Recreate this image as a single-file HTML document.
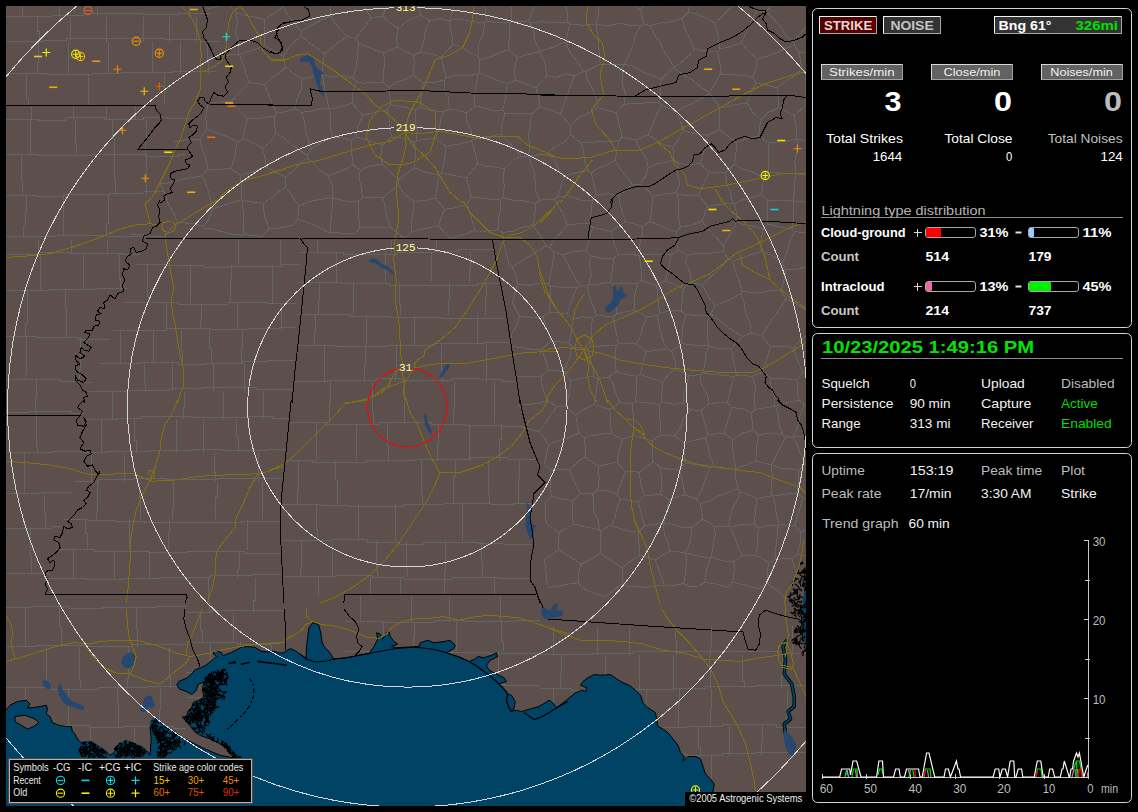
<!DOCTYPE html>
<html><head><meta charset="utf-8"><title>Lightning</title>
<style>html,body{margin:0;padding:0;background:#000;overflow:hidden}svg{display:block;font-family:"Liberation Sans", sans-serif}text{white-space:pre}</style></head><body>
<svg width="1138" height="812" viewBox="0 0 1138 812">
<rect width="1138" height="812" fill="#000"/>
<defs><clipPath id="mc"><rect x="6" y="6" width="800" height="800"/></clipPath></defs>
<g clip-path="url(#mc)">
<rect x="6" y="6" width="800" height="800" fill="#5d504c"/>
<path d="M621.9 -9.6 L625.2 -16.2 L631.5 -26.9 L637.1 -36.2 L640.5 -43.6 L646.3 -51.5 L652.7 -60.4 L657.1 -67.8 L660.7 -76.5 L665.8 -84.1 L671.6 -93.5 M621.9 -9.6 L628.6 -3.0 L633.2 3.7 L640.7 10.1 M640.7 10.1 L645.5 2.5 L651.6 -7.1 L658.0 -13.9 L662.1 -21.7 L667.8 -31.3 L673.5 -39.2 M671.6 -93.5 L672.1 -85.1 L671.9 -75.5 L674.0 -65.0 L672.7 -55.9 L673.2 -47.9 L673.5 -39.2 M358.3 201.1 L358.8 215.4 L359.4 228.0 M358.3 201.1 L362.4 197.9 M359.4 228.0 L369.2 227.5 L381.2 227.9 L390.7 227.4 M390.7 227.4 L386.9 217.8 L385.3 206.9 L382.9 197.8 M362.4 197.9 L373.1 197.5 L382.9 197.8 M682.1 18.5 L684.3 27.7 L690.8 40.4 L694.1 49.5 M682.1 18.5 L671.8 21.6 L660.7 23.0 L650.5 25.7 M650.5 25.7 L654.5 35.0 L660.1 42.2 L664.1 51.3 L669.3 58.4 L673.7 67.5 M694.1 49.5 L688.8 55.8 L680.5 62.8 L673.7 67.5 M717.7 52.1 L720.0 49.0 M717.7 52.1 L706.8 50.7 L694.1 49.5 M720.0 49.0 L717.8 35.3 L714.6 23.4 M688.2 12.4 L696.4 14.1 L706.9 18.1 L714.6 23.4 M688.2 12.4 L682.1 18.5 M640.7 10.1 L643.4 23.7 M673.5 -39.2 L678.6 -30.9 L681.5 -21.3 L687.0 -11.5 L691.2 -3.0 M643.4 23.7 L650.5 25.7 M691.2 -3.0 L688.2 12.4 M567.9 22.1 L567.8 13.4 L564.8 3.4 L563.6 -6.5 M567.9 22.1 L557.7 23.0 L548.2 22.3 L540.7 21.7 L530.5 23.0 M563.6 -6.5 L553.2 -9.0 L543.4 -11.8 M543.4 -11.8 L538.4 -2.5 L536.2 3.4 L532.1 12.4 L528.4 21.4 M530.5 23.0 L528.4 21.4 M837.8 83.8 L826.6 80.2 L815.9 77.4 L805.8 72.9 M837.8 83.8 L840.3 74.2 L844.0 63.6 L847.2 52.4 M847.2 52.4 L840.8 45.1 M840.8 45.1 L829.9 46.6 L819.0 49.5 L810.5 52.8 L799.2 52.8 M799.2 52.8 L801.9 69.0 M805.8 72.9 L801.9 69.0 M839.5 85.8 L837.8 83.8 M843.0 23.1 L843.0 34.3 L840.8 45.1 M839.5 85.8 L838.9 99.4 M805.8 72.9 L805.5 84.2 L805.6 96.2 L805.5 105.8 M838.9 99.4 L833.6 105.8 L826.5 113.6 M826.5 113.6 L815.4 111.0 L805.5 105.8 M867.0 124.6 L861.0 117.9 L852.7 111.6 L844.2 106.5 L838.9 99.4 M707.4 206.4 L698.6 195.2 M707.4 206.4 L719.0 204.3 L732.9 203.2 M698.6 195.2 L703.4 184.3 L709.5 172.2 M732.9 203.2 L730.4 193.0 L726.5 182.6 L725.6 172.5 M709.5 172.2 L725.6 172.5 M362.4 197.9 L361.4 187.0 L358.9 178.0 L360.3 170.2 M382.9 197.8 L390.8 191.3 L398.2 184.9 M399.1 179.5 L398.2 184.9 M399.1 179.5 L390.5 172.2 L382.4 164.3 M360.3 170.2 L371.9 165.4 L382.4 164.3 M358.3 201.1 L346.0 201.1 L332.5 197.8 M355.2 233.9 L359.4 228.0 M355.2 233.9 L341.8 233.2 L330.5 232.2 M330.5 232.2 L331.0 221.3 L332.0 209.9 L332.5 197.8 M164.2 237.1 L152.6 236.2 L141.1 234.6 L130.5 234.3 M207.5 8.7 L220.3 5.9 L228.6 4.6 M228.6 4.6 L235.8 -9.0 M821.3 465.6 L823.6 476.2 L824.3 486.0 L825.3 495.6 M821.3 465.6 L834.1 467.1 L846.9 465.6 M846.9 465.6 L847.1 465.8 M847.1 465.8 L847.3 476.3 L847.4 487.0 L845.9 496.4 M845.9 496.4 L836.0 496.3 L825.3 495.6 M842.8 526.9 L832.6 535.4 M832.6 535.4 L835.1 546.4 L834.4 556.5 M846.6 497.0 L845.3 506.2 L843.8 516.0 L842.8 526.9 M846.6 497.0 L845.9 496.4 M818.5 499.5 L819.7 509.4 L819.0 518.7 L822.0 528.3 M818.5 499.5 L825.3 495.6 M822.0 528.3 L832.6 535.4 M908.4 450.0 L899.6 452.3 L891.0 454.3 L883.1 456.7 L873.6 459.0 L863.7 460.5 L854.9 463.7 L847.1 465.8 M908.4 450.0 L898.4 446.4 L889.8 445.1 L878.6 443.5 L870.8 439.2 L862.3 436.7 L851.9 434.0 M846.9 465.6 L842.7 454.9 L839.6 440.2 M851.9 434.0 L839.6 440.2 M763.0 372.0 L770.6 378.2 M763.0 372.0 L752.4 376.3 M770.6 378.2 L771.1 387.4 L774.2 395.8 L774.9 406.1 M774.9 406.1 L765.0 408.1 L755.3 409.4 M752.4 376.3 L755.5 386.6 L754.3 399.0 L755.3 409.4 M611.2 433.4 L622.4 439.1 M611.2 433.4 L610.6 420.3 L609.8 409.4 M609.8 409.4 L620.0 402.7 M622.4 439.1 L633.9 435.6 M633.9 435.6 L633.7 425.1 L633.2 415.4 L632.2 403.8 M632.2 403.8 L620.0 402.7 M383.7 53.1 L384.5 63.2 L383.7 71.6 L383.3 82.3 M383.7 53.1 L371.2 48.4 L359.0 43.2 M383.3 82.3 L373.7 82.2 L364.2 83.2 L355.7 81.5 M355.7 81.5 L352.6 77.9 M352.6 77.9 L356.7 66.0 L357.3 54.6 L359.0 43.2 M483.4 -12.7 L497.1 -12.8 L508.5 -13.7 M508.5 -13.7 L517.6 -22.5 L526.6 -30.9 M481.0 -10.3 L483.4 -12.7 M481.0 -10.3 L483.1 -0.5 L485.5 10.4 L486.8 21.6 M486.8 21.6 L498.4 22.4 L509.1 23.0 M511.5 21.4 L509.1 23.0 M511.5 21.4 L511.5 9.7 L510.4 -2.8 L508.5 -13.7 M481.0 -10.3 L469.0 -8.8 L455.9 -6.9 M455.9 -6.9 L450.2 -14.5 L444.9 -24.0 L438.4 -31.1 L432.2 -37.4 M543.4 -11.8 L536.1 -23.1 L526.6 -30.9 M528.4 21.4 L511.5 21.4 M573.0 -13.3 L563.6 -6.5 M600.5 -14.5 L590.4 -15.6 L583.6 -14.9 L573.0 -13.3 M530.5 23.0 L533.8 31.9 L535.3 41.4 L540.1 51.1 M540.1 51.1 L539.9 51.4 M509.1 23.0 L509.4 36.3 L508.4 49.8 M539.9 51.4 L529.3 54.1 L517.0 57.5 M508.4 49.8 L517.0 57.5 M505.0 113.4 L518.2 113.3 L531.4 114.0 M505.0 113.4 L502.5 110.2 M502.5 110.2 L504.5 103.1 L506.2 92.7 L507.6 83.6 M535.7 87.9 L524.9 83.3 L515.3 80.0 M535.7 87.9 L538.9 96.6 L539.5 107.3 M507.6 83.6 L515.3 80.0 M539.5 107.3 L531.4 114.0 M474.7 106.3 L483.1 107.5 L492.8 110.7 L502.5 110.2 M474.7 106.3 L466.9 113.1 M466.9 113.1 L466.6 122.3 L471.1 129.9 L472.2 139.8 M501.1 133.9 L490.9 136.2 L483.3 137.0 L472.2 139.8 M501.1 133.9 L501.6 124.5 L505.0 113.4 M547.0 75.6 L544.9 63.2 L539.9 51.4 M547.0 75.6 L535.7 87.9 M517.0 57.5 L514.2 70.1 L515.3 80.0 M574.2 76.0 L570.5 86.6 L567.2 94.8 L563.4 106.0 L560.4 114.2 M574.2 76.0 L566.4 73.9 L555.2 77.3 L547.0 75.6 M560.4 114.2 L549.6 109.5 L539.5 107.3 M844.1 139.5 L835.1 138.5 L826.2 137.7 M844.1 139.5 L848.2 149.3 L852.1 159.6 L856.5 170.2 M824.9 170.9 L834.5 171.3 L843.1 173.1 L852.7 174.4 M824.9 170.9 L825.4 161.0 L823.5 150.8 L822.9 140.0 M822.9 140.0 L826.2 137.7 M856.5 170.2 L852.7 174.4 M867.0 124.6 L859.7 130.5 L852.2 136.1 L844.1 139.5 M826.5 113.6 L827.5 125.6 L826.2 137.7 M797.4 139.6 L809.8 140.6 L822.9 140.0 M797.4 139.6 L797.3 150.9 L794.9 160.7 L795.6 173.7 M795.6 173.7 L808.0 175.4 L819.8 175.8 M819.8 175.8 L824.9 170.9 M797.4 139.6 L797.0 139.3 M797.0 139.3 L796.1 126.3 L793.9 115.6 M805.5 105.8 L793.9 115.6 M777.2 87.9 L767.5 85.0 L755.9 83.1 M777.2 87.9 L778.5 98.0 L779.1 107.3 M755.9 83.1 L750.8 92.6 L747.2 103.2 M779.1 107.3 L768.1 112.6 L760.7 119.6 M760.7 119.6 L752.3 111.8 L747.2 103.2 M801.9 69.0 L793.7 76.2 L785.8 81.1 L777.2 87.9 M793.9 115.6 L779.1 107.3 M621.9 -9.6 L611.7 -12.2 L600.9 -14.1 M600.5 -14.5 L600.9 -14.1 M691.2 -3.0 L700.7 -4.4 L708.2 -6.4 L718.1 -8.4 L727.8 -8.4 L735.9 -11.6 M714.6 23.4 L723.4 15.3 L730.7 7.6 L741.8 -0.1 M741.8 -0.1 L735.9 -11.6 M624.1 64.4 L623.1 65.0 M624.1 64.4 L633.0 66.2 L642.9 72.3 L651.2 75.1 L661.1 79.2 M623.1 65.0 L622.5 75.5 L622.3 84.4 L625.7 94.5 L624.3 104.2 M624.3 104.2 L636.4 103.4 L646.6 102.9 L659.4 102.3 M659.4 102.3 L660.6 89.8 L661.1 79.2 M643.4 23.7 L640.8 25.8 M624.1 64.4 L628.6 55.9 L633.4 43.7 L635.8 34.0 L640.8 25.8 M673.7 67.5 L673.6 67.6 M673.6 67.6 L661.1 79.2 M717.7 52.1 L720.0 63.5 L720.4 73.9 M720.4 73.9 L715.6 82.4 L709.5 92.5 M673.6 67.6 L681.5 73.9 L691.6 79.3 L700.6 86.9 L709.5 92.5 M752.6 77.3 L755.9 83.1 M752.6 77.3 L742.1 75.2 L729.2 74.8 L720.4 73.9 M720.0 108.0 L709.5 93.4 M720.0 108.0 L729.2 106.2 L737.7 104.1 L747.2 103.2 M709.5 92.5 L709.5 93.4 M736.6 142.7 L735.9 153.6 L734.0 164.5 M736.6 142.7 L747.8 138.4 L758.8 135.8 M734.0 164.5 L743.2 169.0 L752.7 172.1 L763.5 177.6 M768.8 142.6 L758.8 135.8 M768.8 142.6 L768.5 153.7 L768.9 164.0 L768.8 172.7 M768.8 172.7 L763.5 177.6 M720.0 108.0 L719.7 118.4 L719.6 129.5 M719.6 129.5 L726.9 135.6 L736.6 142.7 M760.7 119.6 L758.8 135.8 M797.0 139.3 L788.8 140.7 L778.8 142.1 L768.8 142.6 M795.6 173.7 L795.4 173.9 M795.4 173.9 L782.1 173.1 L768.8 172.7 M709.5 172.2 L700.0 163.8 M719.6 129.5 L708.0 135.3 M725.6 172.5 L734.0 164.5 M708.0 135.3 L705.4 145.4 L703.1 154.7 L700.0 163.8 M683.3 288.8 L674.3 284.2 L665.1 281.1 M683.3 288.8 L682.2 299.2 L681.6 311.2 M681.6 311.2 L671.7 310.3 L660.0 313.2 M660.0 313.2 L658.7 306.0 L657.5 293.5 L656.6 285.2 M656.6 285.2 L665.1 281.1 M698.6 195.2 L688.1 195.8 L677.6 194.1 M700.0 163.8 L689.1 164.3 L678.4 163.7 M678.4 163.7 L677.7 173.1 L679.7 183.2 L676.0 192.8 M677.6 194.1 L676.0 192.8 M387.0 109.9 L389.6 118.6 L389.8 129.7 L391.9 137.2 M387.0 109.9 L375.8 112.3 L362.9 115.3 M362.9 115.3 L357.9 126.3 L356.3 137.1 M356.3 137.1 L365.5 139.7 L372.5 141.7 L382.3 145.0 M382.3 145.0 L391.9 137.2 M388.8 87.3 L383.3 82.3 M388.8 87.3 L390.8 104.8 M352.3 103.5 L362.9 115.3 M352.3 103.5 L352.9 92.7 L355.7 81.5 M390.8 104.8 L387.0 109.9 M242.0 235.2 L244.2 234.0 M242.0 235.2 L233.3 234.4 L222.4 231.9 L214.2 229.4 L204.2 228.1 M244.2 234.0 L243.5 224.7 L243.2 212.5 L242.4 200.5 M212.3 209.0 L221.7 206.0 L230.4 202.9 L241.7 199.9 M212.3 209.0 L208.7 219.5 L203.0 226.3 M241.7 199.9 L242.4 200.5 M204.2 228.1 L203.0 226.3 M262.2 236.1 L252.5 235.9 L244.2 234.0 M262.9 203.2 L264.7 216.9 L268.9 228.5 M262.9 203.2 L252.5 202.1 L242.4 200.5 M268.9 228.5 L262.2 236.1 M177.5 222.6 L174.3 214.1 L168.6 204.4 L165.1 193.6 L160.5 183.9 M177.5 222.6 L190.6 223.2 L203.0 226.3 M202.6 175.7 L191.4 177.6 L182.1 179.4 L171.0 182.7 L160.5 183.9 M202.6 175.7 L207.1 187.4 L210.2 197.5 L212.3 209.0 M285.6 176.9 L285.5 187.4 M285.6 176.9 L275.4 172.0 L265.7 166.5 M285.5 187.4 L277.7 192.2 L271.9 197.8 L262.9 203.2 M265.7 166.5 L256.2 169.9 L250.2 172.4 L240.0 175.2 M240.0 175.2 L241.9 187.2 L241.7 199.9 M177.5 222.6 L170.4 229.2 L164.2 237.1 M293.3 225.0 L297.8 219.1 M297.8 219.1 L308.5 222.9 L320.9 228.3 L329.0 233.2 M285.5 187.4 L292.6 196.1 L298.7 206.1 M268.9 228.5 L280.7 227.9 L293.3 225.0 M298.7 206.1 L297.8 219.1 M330.5 232.2 L329.0 233.2 M298.7 206.1 L309.0 201.6 L321.3 199.3 L332.1 197.5 M332.1 197.5 L332.5 197.8 M351.3 140.3 L351.7 154.0 L353.2 165.0 M351.3 140.3 L343.6 138.1 L333.4 136.8 M333.4 136.8 L322.1 142.3 L311.1 149.3 M353.2 165.0 L341.1 171.3 L328.6 175.6 M328.6 175.6 L320.1 170.5 L313.2 163.0 L307.2 157.9 M311.1 149.3 L307.6 155.3 M307.2 157.9 L307.6 155.3 M360.3 170.2 L353.2 165.0 M382.4 164.3 L380.7 156.6 L382.3 145.0 M356.3 137.1 L351.3 140.3 M352.3 103.5 L341.1 106.5 L329.9 109.1 M329.9 109.1 L330.4 119.3 L330.3 127.6 L333.4 136.8 M332.1 197.5 L332.3 186.2 L328.6 175.6 M285.6 176.9 L292.8 171.2 L299.3 164.2 L307.2 157.9 M240.0 175.2 L230.9 168.7 M202.6 175.7 L207.9 169.2 M230.9 168.7 L220.2 169.1 L207.9 169.2 M209.1 57.1 L218.9 56.2 L229.4 54.9 L238.5 54.2 M228.6 4.6 L236.5 12.7 M236.5 12.7 L237.4 23.2 L235.5 33.1 L239.2 43.5 L238.5 54.2 M818.5 499.5 L803.0 497.9 M822.0 528.3 L811.1 529.4 L800.5 531.6 M800.5 531.6 L795.0 525.9 M803.0 497.9 L799.9 508.2 L797.4 515.6 L795.0 525.9 M548.9 587.3 L557.5 586.4 L568.2 584.1 L578.2 582.6 M581.3 587.6 L578.2 582.6 M600.2 64.1 L585.6 71.5 M600.2 64.1 L599.5 55.0 L598.5 44.2 L597.3 34.8 L596.4 24.1 M565.6 42.2 L569.8 52.1 L576.5 60.4 L583.2 71.2 M565.6 42.2 L567.6 32.9 L569.7 24.5 M583.2 71.2 L585.6 71.5 M569.7 24.5 L583.4 25.2 L596.2 23.9 M596.2 23.9 L596.4 24.1 M623.1 65.0 L609.5 64.4 L600.2 64.1 M597.9 107.3 L596.5 99.1 L593.0 89.4 L587.3 79.4 L585.6 71.5 M597.9 107.3 L607.7 110.7 L616.5 112.5 M624.3 104.2 L616.5 112.5 M640.8 25.8 L629.0 25.1 L618.8 23.3 L607.1 25.9 L596.4 24.1 M574.2 76.0 L583.2 71.2 M540.1 51.1 L550.5 48.0 L558.7 44.6 L565.6 42.2 M567.9 22.1 L569.7 24.5 M560.4 114.2 L570.5 125.7 M570.5 125.7 L578.9 117.5 L589.6 113.0 L597.9 107.3 M600.9 -14.1 L601.8 -4.3 L598.7 3.2 L598.7 14.0 L596.2 23.9 M509.4 344.1 L512.5 332.6 L516.7 326.0 L519.2 315.8 M511.3 346.4 L520.8 347.5 L531.8 349.4 L541.6 349.7 M542.8 316.8 L531.1 317.8 L519.2 315.8 M542.8 316.8 L546.7 328.2 L551.1 340.8 M551.1 340.8 L541.6 349.7 M755.8 460.8 L771.0 465.1 M755.8 460.8 L756.7 445.5 L758.6 434.9 M786.0 436.8 L780.6 446.9 L776.9 454.5 L772.1 464.5 M786.0 436.8 L782.9 434.7 M758.6 434.9 L771.0 432.9 L782.9 434.7 M771.0 465.1 L772.1 464.5 M827.3 437.2 L823.6 432.1 M827.3 437.2 L823.9 446.3 L821.7 453.7 L818.0 463.1 M823.6 432.1 L814.3 435.3 L803.0 435.9 L793.4 436.8 M818.0 463.1 L805.8 463.3 M805.8 463.3 L800.0 452.7 L797.7 445.8 L792.9 437.2 M793.4 436.8 L792.9 437.2 M851.9 434.0 L850.2 424.4 L847.9 416.6 L846.4 406.9 M839.6 440.2 L827.3 437.2 M846.4 406.9 L837.5 409.1 L825.5 411.8 M825.5 411.8 L823.0 423.1 L823.6 432.1 M821.3 465.6 L818.0 463.1 M803.0 497.9 L796.7 492.9 M799.1 470.4 L798.4 482.2 L796.7 492.9 M799.1 470.4 L805.8 463.3 M786.0 436.8 L792.9 437.2 M772.1 464.5 L781.2 468.5 L790.1 468.9 L799.1 470.4 M770.6 378.2 L782.0 378.4 L796.9 379.7 M774.9 406.1 L775.6 406.4 M775.6 406.4 L786.2 403.1 L798.2 399.9 M796.9 379.7 L797.8 389.1 L798.2 399.9 M825.5 411.8 L818.9 406.5 M793.4 436.8 L798.5 425.1 L800.1 415.6 L804.2 404.7 M818.9 406.5 L804.2 404.7 M782.9 434.7 L779.3 425.7 L778.5 415.5 L775.6 406.4 M798.2 399.9 L804.2 404.7 M593.2 376.4 L597.8 378.8 M593.2 376.4 L593.0 367.2 L589.6 357.0 L587.5 348.7 M597.8 378.8 L609.2 377.1 M616.1 346.0 L601.5 345.9 L590.0 347.1 M616.1 346.0 L615.7 358.3 L616.1 371.4 M616.1 371.4 L609.2 377.1 M587.5 348.7 L590.0 347.1 M594.3 404.5 L596.7 389.5 L597.8 378.8 M594.3 404.5 L609.8 409.4 M620.0 402.7 L615.3 392.5 L613.9 385.1 L609.2 377.1 M592.7 318.1 L591.3 326.8 L591.7 337.0 L590.0 347.1 M592.7 318.1 L582.8 316.8 L572.5 319.3 M572.5 319.3 L571.6 331.4 L568.7 343.0 M572.6 347.3 L568.7 343.0 M572.6 347.3 L587.5 348.7 M660.0 435.1 L660.3 425.9 L659.6 414.4 L659.7 404.4 M660.0 435.1 L652.2 440.6 M652.2 440.6 L643.6 438.5 L633.9 435.6 M632.2 403.8 L635.3 401.6 M659.7 404.4 L647.2 403.0 L635.3 401.6 M616.1 371.4 L625.7 374.5 L636.3 376.3 M635.3 401.6 L636.6 388.9 L636.3 376.3 M731.7 407.6 L743.2 408.7 L751.3 412.7 M731.7 407.6 L727.6 421.8 L724.1 433.0 M751.3 412.7 L753.1 430.0 M753.1 430.0 L742.6 433.3 L732.9 439.5 M732.9 439.5 L724.1 433.0 M758.6 434.9 L753.1 430.0 M755.3 409.4 L751.3 412.7 M755.8 460.8 L746.9 465.0 L735.7 468.4 M735.7 468.4 L733.6 459.4 L732.8 447.9 L732.9 439.5 M708.1 434.7 L704.4 422.1 L701.1 410.5 M708.1 434.7 L724.1 433.0 M701.1 410.5 L709.2 403.3 M731.7 407.6 L727.0 402.3 M709.2 403.3 L727.0 402.3 M708.3 345.3 L707.3 335.0 L707.5 325.4 L708.5 315.4 M708.3 345.3 L694.8 345.1 L681.5 343.7 M681.5 343.7 L682.5 332.7 L683.2 324.0 L686.0 314.6 M708.5 315.4 L698.6 315.7 L686.0 314.6 M671.5 351.1 L681.5 343.7 M671.5 351.1 L666.6 348.9 M681.6 311.2 L686.0 314.6 M660.0 313.2 L657.2 315.6 M657.2 315.6 L659.7 327.5 L662.3 338.7 L666.6 348.9 M683.3 288.8 L691.6 282.8 M702.0 284.7 L691.6 282.8 M702.0 284.7 L708.2 295.9 L715.2 305.8 M715.2 305.8 L710.9 313.6 M710.9 313.6 L708.5 315.4 M390.7 227.4 L404.6 238.6 M413.3 201.4 L404.6 194.5 L398.2 184.9 M413.3 201.4 L413.5 211.1 L411.4 220.6 L411.2 232.1 M411.2 232.1 L404.6 238.6 M394.5 -6.0 L388.6 3.7 L382.2 16.0 M394.5 -6.0 L385.9 -12.3 L378.5 -21.6 L368.8 -28.7 M368.8 -28.7 L361.6 -19.1 L355.0 -12.0 M355.0 -12.0 L361.9 -3.3 L365.3 8.2 L371.1 18.1 M371.1 18.1 L382.2 16.0 M432.2 -37.4 L426.9 -28.2 L420.1 -17.7 L413.2 -7.3 M413.2 -7.3 L406.0 -6.3 L394.5 -6.0 M508.4 49.8 L498.8 52.8 L490.4 57.1 L480.0 59.9 M507.6 83.6 L497.0 80.4 L487.2 76.1 L478.8 73.4 M480.0 59.9 L478.8 73.4 M474.7 106.3 L474.6 94.3 L476.4 83.9 L478.2 74.1 M478.2 74.1 L478.8 73.4 M420.1 107.5 L432.2 110.4 L443.5 112.0 M420.1 107.5 L421.3 94.1 L423.1 82.8 M449.4 109.0 L443.5 112.0 M449.4 109.0 L448.3 97.5 L444.1 90.4 L444.2 80.2 M423.1 82.8 L434.2 82.4 L444.2 80.2 M420.1 107.5 L415.6 110.0 M388.8 87.3 L396.6 82.1 L404.4 79.7 L413.0 75.2 M415.6 110.0 L402.4 106.7 L390.8 104.8 M423.1 82.8 L413.0 75.2 M449.4 109.0 L456.8 109.9 L466.9 113.1 M478.2 74.1 L468.2 75.7 L455.7 75.5 L446.0 77.7 M444.2 80.2 L446.0 77.7 M397.4 46.9 L405.1 51.6 L413.9 55.3 M397.4 46.9 L396.6 37.5 L398.1 28.5 M398.1 28.5 L407.6 20.7 L421.1 15.3 M413.9 55.3 L420.3 52.1 M420.3 52.1 L423.7 42.4 L425.2 30.3 L429.4 20.6 M421.1 15.3 L429.4 20.6 M383.7 53.1 L397.4 46.9 M413.0 75.2 L414.1 64.8 L413.9 55.3 M359.0 43.2 L356.0 38.5 M356.0 38.5 L363.0 28.7 L371.1 18.1 M382.2 16.0 L390.3 23.2 L398.1 28.5 M413.2 -7.3 L417.9 3.4 L421.1 15.3 M441.4 56.9 L443.6 67.2 L446.0 77.7 M441.4 56.9 L429.6 53.6 L420.3 52.1 M329.9 109.1 L328.8 108.3 M352.6 77.9 L343.4 75.6 L333.4 76.5 L322.5 75.5 M322.5 75.5 L324.4 86.9 L327.1 98.5 L328.8 108.3 M311.1 149.3 L308.2 139.9 L305.8 132.6 L304.3 120.8 L301.0 112.5 M328.8 108.3 L319.2 109.0 L310.2 111.2 L301.0 112.5 M843.0 23.1 L839.4 17.9 M843.9 -7.4 L843.6 3.5 L839.4 17.9 M843.9 -7.4 L836.6 -13.3 M720.0 49.0 L731.5 46.3 L741.2 42.9 M741.8 -0.1 L748.4 5.3 L756.5 11.1 M756.5 11.1 L750.9 21.7 L747.1 30.9 L741.2 42.9 M799.2 52.8 L794.2 44.9 M752.6 77.3 L756.1 67.9 L757.3 59.2 M757.3 59.2 L767.8 56.0 L776.8 52.5 L785.9 48.5 L794.2 44.9 M757.3 59.2 L748.4 51.6 L741.2 42.9 M852.7 174.4 L853.0 185.5 L850.3 192.7 L851.9 202.2 M848.9 404.6 L846.4 406.9 M786.1 270.0 L798.1 269.0 L808.2 266.1 L818.2 263.7 M786.1 270.0 L782.4 262.8 M818.2 263.7 L817.3 252.6 L815.6 243.7 L815.0 232.8 M782.4 262.8 L786.6 254.1 L790.3 239.9 L794.7 231.8 M815.0 232.8 L804.5 232.5 L794.7 231.8 M672.9 147.4 L678.5 139.2 L683.5 130.9 M672.9 147.4 L663.8 144.5 L655.6 139.6 L648.0 134.9 M683.5 130.9 L679.9 120.3 L676.9 112.0 M648.0 134.9 L653.7 122.7 L656.1 115.4 L661.3 105.2 M661.3 105.2 L676.9 112.0 M708.0 135.3 L695.4 133.8 L683.5 130.9 M678.4 163.7 L674.1 159.5 M674.1 159.5 L672.9 147.4 M635.8 139.9 L648.0 134.9 M635.8 139.9 L639.9 148.7 L646.1 158.2 L648.3 167.7 M648.3 167.7 L656.8 163.9 L664.8 162.8 L674.1 159.5 M709.5 93.4 L701.8 98.0 L692.5 103.3 L683.5 107.0 L676.9 112.0 M622.2 137.3 L619.1 124.1 L616.5 112.5 M622.2 137.3 L635.8 139.9 M659.4 102.3 L661.3 105.2 M707.4 206.4 L702.0 221.0 M677.6 194.1 L678.6 204.4 L678.6 217.7 L680.3 227.1 M702.0 221.0 L691.8 225.1 L680.3 227.1 M702.0 284.7 L708.5 278.8 L715.6 272.4 L723.5 264.4 L727.8 258.0 M691.6 282.8 L690.3 273.3 L685.4 262.8 L687.1 254.7 M727.8 258.0 L723.1 251.4 M723.1 251.4 L714.1 252.8 L704.6 254.0 L697.2 253.5 L687.1 254.7 M648.3 167.7 L645.1 177.4 L639.4 184.0 M676.0 192.8 L665.0 193.7 L653.1 196.3 M653.1 196.3 L647.6 190.0 L639.4 184.0 M622.2 137.3 L619.0 140.8 M619.0 140.8 L616.7 150.6 L615.1 160.3 M615.1 160.3 L620.5 169.3 L627.4 177.5 L632.5 184.5 M632.5 184.5 L639.4 184.0 M413.3 201.4 L425.7 200.3 L435.5 197.9 M435.5 197.9 L444.5 209.4 M411.2 232.1 L419.4 229.7 L430.4 227.4 L438.5 225.7 M444.5 209.4 L438.5 225.7 M438.5 225.7 L450.2 238.5 M800.5 531.6 L800.1 544.5 L797.2 554.6 M834.4 556.5 L830.4 562.2 M830.4 562.2 L818.9 559.4 L808.3 556.4 L797.2 554.6 M548.9 587.3 L548.5 587.0 M627.5 586.6 L622.4 582.7 M622.4 582.7 L614.9 589.5 L605.3 596.6 M581.0 564.3 L578.6 573.6 L578.2 582.6 M581.0 564.3 L591.4 559.0 L600.2 553.4 M600.2 553.4 L611.7 560.8 L622.1 567.8 M581.3 587.6 L594.0 593.3 L605.3 596.6 M622.1 567.8 L622.4 582.7 M567.0 313.7 L549.3 312.2 M567.0 313.7 L570.2 304.6 L573.6 295.3 L576.9 287.7 M549.3 312.2 L550.5 300.6 L550.4 285.9 M576.9 287.7 L565.2 288.0 L550.4 285.9 M542.8 316.8 L549.3 312.2 M572.5 319.3 L567.0 313.7 M568.7 343.0 L551.1 340.8 M587.1 285.8 L589.4 297.0 L592.8 305.4 L596.6 315.3 M587.1 285.8 L579.6 286.1 M596.6 315.3 L592.7 318.1 M579.6 286.1 L576.9 287.7 M572.6 347.3 L569.5 358.3 L563.2 371.2 M541.6 349.7 L545.7 360.3 L548.3 370.3 M548.3 370.3 L563.2 371.2 M594.3 404.5 L584.8 408.8 L575.6 414.6 M575.6 414.6 L565.7 406.3 M593.2 376.4 L582.5 378.1 L571.1 380.7 M571.1 380.7 L569.3 394.6 L565.7 406.3 M571.1 380.7 L563.2 371.2 M796.9 379.7 L802.4 372.0 M818.9 406.5 L820.2 394.9 L823.7 383.2 L826.5 373.2 M802.4 372.0 L813.5 372.7 L826.5 373.2 M770.5 346.9 L781.9 345.9 L793.7 347.8 M770.5 346.9 L766.3 359.9 L763.0 372.0 M802.4 372.0 L797.0 359.1 L793.7 347.8 M683.2 403.6 L674.0 404.1 L661.9 402.2 M683.2 403.6 L683.6 392.9 L687.2 383.6 L688.7 375.2 M661.9 402.2 L661.9 391.6 L662.5 381.8 M662.5 381.8 L669.9 373.1 L676.3 369.0 M688.7 375.2 L676.3 369.0 M660.0 435.1 L674.7 436.1 M659.7 404.4 L661.9 402.2 M690.8 409.8 L683.5 417.5 L681.0 427.2 L674.7 436.1 M690.8 409.8 L683.2 403.6 M701.1 410.5 L690.8 409.8 M700.0 374.9 L701.5 384.8 L706.8 393.6 L709.2 403.3 M700.0 374.9 L688.7 375.2 M640.4 374.0 L651.1 378.3 L662.5 381.8 M640.4 374.0 L636.3 376.3 M671.5 351.1 L675.0 360.2 L676.3 369.0 M646.3 351.6 L656.9 350.2 L666.6 348.9 M646.3 351.6 L643.0 362.0 L640.4 374.0 M679.7 469.7 L682.6 482.0 L685.0 494.8 M679.7 469.7 L670.1 469.5 L660.8 467.7 M685.0 494.8 L669.3 499.7 M660.8 467.7 L661.3 482.0 L660.9 494.6 M669.3 499.7 L660.9 494.6 M660.8 467.7 L653.0 461.6 M653.0 461.6 L639.4 472.1 M660.9 494.6 L644.8 495.5 M639.4 472.1 L640.7 484.3 L644.8 495.5 M652.2 440.6 L652.1 450.4 L653.0 461.6 M622.4 439.1 L618.9 451.7 L617.1 462.1 M617.1 462.1 L625.6 471.6 M639.4 472.1 L625.6 471.6 M708.1 434.7 L705.5 438.3 M674.7 436.1 L684.6 442.9 M684.6 442.9 L695.8 439.9 L705.5 438.3 M679.7 469.7 L685.6 463.6 M684.6 442.9 L684.1 453.2 L685.6 463.6 M709.2 346.4 L719.8 349.0 L731.2 348.7 M709.2 346.4 L705.8 353.5 L704.8 363.9 L703.0 372.7 M703.0 372.7 L713.5 374.8 L725.6 375.2 L734.1 377.0 M731.2 348.7 L733.3 360.3 L736.4 375.0 M736.4 375.0 L734.1 377.0 M710.9 313.6 L719.1 320.1 L726.6 326.1 L734.8 332.0 L742.8 336.4 M742.8 336.4 L731.2 348.7 M708.3 345.3 L709.2 346.4 M700.0 374.9 L703.0 372.7 M727.0 402.3 L730.8 388.7 L734.1 377.0 M752.4 376.3 L736.4 375.0 M613.3 317.1 L616.5 313.9 M613.3 317.1 L615.4 328.8 L618.5 343.2 M616.5 313.9 L623.9 312.3 L634.5 310.1 M618.5 343.2 L636.2 343.7 M636.2 343.7 L640.5 336.5 L643.2 325.5 L646.8 316.8 M646.8 316.8 L634.5 310.1 M587.1 285.8 L588.4 284.8 M596.6 315.3 L613.3 317.1 M610.6 282.0 L598.5 284.3 L588.4 284.8 M610.6 282.0 L612.6 283.4 M612.6 283.4 L614.3 293.1 L615.9 304.3 L616.5 313.9 M616.1 346.0 L618.5 343.2 M637.5 283.4 L634.3 297.4 L634.5 310.1 M637.5 283.4 L625.2 283.1 L612.6 283.4 M646.3 351.6 L636.2 343.7 M657.2 315.6 L646.8 316.8 M641.2 280.5 L656.6 285.2 M641.2 280.5 L637.5 283.4 M742.1 291.2 L740.7 293.7 M742.1 291.2 L751.6 292.7 L763.1 292.6 L770.5 290.2 L781.3 290.6 M740.7 293.7 L744.1 302.4 L745.2 311.7 L750.1 324.1 L751.1 332.9 M781.3 290.6 L786.0 299.0 M786.0 299.0 L780.3 308.4 L773.4 317.0 L768.2 325.9 L761.5 335.7 M761.5 335.7 L751.1 332.9 M715.2 305.8 L724.8 301.4 L731.4 298.9 L740.7 293.7 M732.5 261.1 L727.8 258.0 M732.5 261.1 L735.6 271.6 L738.6 279.1 L742.1 291.2 M786.1 270.0 L784.2 279.1 L781.3 290.6 M782.4 262.8 L772.8 255.8 L761.3 251.5 M761.3 251.5 L750.0 255.0 L742.5 258.0 L732.5 261.1 M742.8 336.4 L751.1 332.9 M770.5 346.9 L761.5 335.7 M519.2 315.8 L512.6 302.6 M484.6 23.0 L482.9 34.7 L478.6 44.1 L477.9 56.2 M484.6 23.0 L472.7 21.6 L461.8 19.4 L450.0 20.2 M477.9 56.2 L470.3 52.9 L461.2 47.0 L453.1 44.3 M453.1 44.3 L451.2 32.1 L449.4 20.8 M450.0 20.2 L449.4 20.8 M486.8 21.6 L484.6 23.0 M480.0 59.9 L477.9 56.2 M455.9 -6.9 L454.5 2.1 L452.7 10.8 L450.0 20.2 M441.4 56.9 L453.1 44.3 M429.4 20.6 L440.7 18.6 L449.4 20.8 M356.0 38.5 L347.7 36.5 M355.0 -12.0 L338.6 -7.2 M347.7 36.5 L341.1 30.0 L334.9 23.2 L330.5 15.5 M330.5 15.5 L330.8 2.4 M338.6 -7.2 L330.8 2.4 M236.5 12.7 L244.8 15.2 L254.5 17.1 L264.7 19.9 M239.5 54.7 L238.5 54.2 M239.5 54.7 L252.4 50.2 L264.9 45.8 M264.9 45.8 L264.4 34.8 L264.7 19.9 M501.1 133.9 L507.8 140.5 L515.4 149.6 L521.2 156.4 M472.2 139.8 L471.6 141.1 M477.7 163.7 L475.8 154.0 L471.6 141.1 M477.7 163.7 L485.8 166.4 L496.5 167.2 L504.4 168.9 M504.4 168.9 L513.0 159.9 L521.2 156.4 M531.4 114.0 L530.2 126.1 L528.4 134.5 L529.6 146.0 L528.6 155.9 M528.6 155.9 L528.5 156.0 M521.2 156.4 L528.5 156.0 M547.5 153.7 L554.5 159.5 L558.6 169.2 L564.1 175.8 M547.5 153.7 L554.1 147.3 L564.7 142.1 L570.7 134.6 M570.7 134.6 L580.3 142.5 M580.3 142.5 L583.2 149.4 L585.0 161.4 L587.6 170.4 M564.1 175.8 L575.6 173.0 L587.6 170.4 M570.5 125.7 L570.7 134.6 M528.6 155.9 L540.8 154.6 L547.5 153.7 M619.0 140.8 L608.4 141.4 L599.3 141.3 L589.9 142.7 L580.3 142.5 M591.0 173.0 L587.6 170.4 M591.0 173.0 L599.3 167.7 L607.0 164.9 L615.1 160.3 M438.6 174.8 L441.6 173.3 M438.6 174.8 L425.9 172.5 L414.2 168.1 M441.6 173.3 L443.7 163.4 L444.8 157.0 L446.0 146.2 M414.2 168.1 L415.7 155.2 L414.4 142.4 M414.4 142.4 L416.1 140.9 M416.1 140.9 L426.7 139.0 L435.8 138.3 M435.8 138.3 L446.0 146.2 M399.1 179.5 L405.3 174.3 L414.2 168.1 M435.5 197.9 L437.3 186.8 L438.6 174.8 M477.7 163.7 L472.1 171.1 L466.5 178.0 M471.6 141.1 L458.3 144.1 L446.0 146.2 M466.5 178.0 L454.8 175.6 L441.6 173.3 M391.9 137.2 L403.9 138.2 L414.4 142.4 M415.6 110.0 L415.0 121.6 L417.5 130.8 L416.1 140.9 M443.5 112.0 L440.9 119.6 L438.7 130.3 L435.8 138.3 M807.4 -9.2 L807.9 -8.9 M807.4 -9.2 L793.1 -7.1 L781.4 -6.0 M807.9 -8.9 L809.4 1.8 L809.1 12.1 L811.2 21.9 M781.4 -6.0 L772.4 4.3 L766.1 11.9 M766.1 11.9 L773.1 18.3 L781.2 27.8 L786.3 36.2 L793.8 41.6 M811.2 21.9 L801.6 32.0 L793.8 41.6 M836.6 -13.3 L828.1 -13.9 L818.4 -10.4 L807.9 -8.9 M839.4 17.9 L829.9 18.3 L820.9 19.6 L811.2 21.9 M756.5 11.1 L766.1 11.9 M794.2 44.9 L793.8 41.6 M819.7 228.9 L817.1 215.8 L816.1 203.5 M819.7 228.9 L831.3 230.4 L845.1 229.1 M851.8 202.2 L848.1 214.1 L846.9 227.3 M851.8 202.2 L841.7 200.6 L832.8 199.6 L822.2 197.2 M822.2 197.2 L816.1 203.5 M845.1 229.1 L846.9 227.3 M818.2 263.7 L826.0 268.0 L834.3 273.7 L843.0 277.1 L850.4 282.2 M815.0 232.8 L819.7 228.9 M850.4 282.2 L847.5 273.5 L849.1 261.2 L847.5 249.9 L845.3 239.4 L845.1 229.1 M851.9 202.2 L851.8 202.2 M819.8 175.8 L820.8 185.9 L822.2 197.2 M853.7 286.6 L850.4 282.2 M794.7 231.8 L792.2 229.0 M816.1 203.5 L803.8 202.0 L794.0 201.0 M792.2 229.0 L793.3 219.2 L793.4 208.5 L794.0 201.0 M795.4 173.9 L794.4 187.2 L793.7 200.7 M793.7 200.7 L794.0 201.0 M640.2 254.7 L639.9 243.7 L642.1 235.1 L642.5 226.4 M640.2 254.7 L650.9 254.4 L661.3 254.5 L671.1 254.9 M676.4 231.8 L675.9 240.8 L678.2 250.0 M676.4 231.8 L667.3 229.0 L658.4 224.7 L650.0 221.7 M650.0 221.7 L642.5 226.4 M671.1 254.9 L678.2 250.0 M641.2 280.5 L641.1 269.0 L639.5 255.4 M665.1 281.1 L668.7 268.9 L671.1 254.9 M639.5 255.4 L640.2 254.7 M702.0 221.0 L709.4 230.1 L716.8 238.1 L723.1 246.1 M723.1 246.1 L723.1 251.4 M687.1 254.7 L678.2 250.0 M680.3 227.1 L676.4 231.8 M653.1 196.3 L651.6 209.1 L650.0 221.7 M588.4 284.8 L591.2 275.1 L589.5 265.0 L590.3 255.6 M579.6 286.1 L574.0 276.0 L567.5 263.6 L563.0 254.9 M563.0 254.9 L574.8 251.4 L586.2 250.6 M586.2 250.6 L590.3 255.6 M610.6 282.0 L612.4 270.5 L613.8 258.8 M590.3 255.6 L603.1 258.7 L613.8 258.8 M639.5 255.4 L629.3 254.4 L618.5 254.4 M613.8 258.8 L618.5 254.4 M618.6 195.9 L621.0 208.0 L625.4 221.5 M618.6 195.9 L607.6 193.8 L596.4 195.4 M596.4 195.4 L592.3 200.3 M592.3 200.3 L591.3 211.9 L590.0 223.6 M590.0 223.6 L592.8 227.6 M592.8 227.6 L602.4 229.3 L610.8 231.6 M625.4 221.5 L610.8 231.6 M632.5 184.5 L618.6 195.9 M642.5 226.4 L625.4 221.5 M591.0 173.0 L593.8 183.5 L596.4 195.4 M558.1 196.2 L569.1 195.9 L581.0 200.3 L592.3 200.3 M558.1 196.2 L561.2 186.3 L564.1 175.8 M586.2 250.6 L588.6 240.4 L592.8 227.6 M618.5 254.4 L614.0 243.7 L610.8 231.6 M444.5 209.4 L454.9 207.9 L466.8 204.5 M450.2 238.5 L463.0 234.8 L475.2 230.3 M475.2 230.3 L472.5 222.9 L470.1 212.4 L466.8 204.5 M466.5 178.0 L469.3 188.4 L471.2 197.4 M471.2 197.4 L466.8 204.5 M243.4 138.4 L244.8 128.1 L247.5 118.5 M243.4 138.4 L252.6 142.7 L262.5 148.1 M247.5 118.5 L261.2 118.1 L274.2 115.9 M262.5 148.1 L270.7 141.7 L275.5 133.1 M275.5 133.1 L274.2 115.9 M265.7 166.5 L265.0 158.4 L262.5 148.1 M230.9 168.7 L234.2 159.5 L235.7 151.3 L237.2 142.2 M237.2 142.2 L243.4 138.4 M264.4 84.7 L268.3 93.7 L272.0 103.2 L276.5 112.8 M264.4 84.7 L249.4 82.6 M249.4 82.6 L239.1 92.7 L231.0 101.8 M276.5 112.8 L274.2 115.9 M231.0 101.8 L239.3 110.2 L247.5 118.5 M307.6 155.3 L299.9 150.4 L291.0 144.1 L282.1 136.6 L275.5 133.1 M276.5 112.8 L284.3 112.1 L295.5 108.7 M295.5 108.7 L301.0 112.5 M208.3 102.7 L205.8 116.3 L206.5 128.9 M174.5 141.8 L186.0 139.6 L199.8 139.7 M199.8 139.7 L206.5 128.9 M237.2 142.2 L229.1 137.3 L216.7 132.7 L206.5 128.9 M231.0 101.8 L219.8 102.0 L208.3 102.7 M249.4 82.6 L246.4 75.2 L243.7 65.6 L239.5 54.7 M207.9 169.2 L206.0 158.5 L202.3 149.2 L199.8 139.7 M696.7 499.2 L700.3 503.5 M696.7 499.2 L702.1 489.3 L705.6 478.3 L709.6 468.2 M700.3 503.5 L710.0 500.9 L717.3 496.2 L728.3 492.4 L738.1 489.0 M709.6 468.2 L713.7 466.0 M713.7 466.0 L722.6 468.3 L735.0 469.2 M735.0 469.2 L735.8 479.0 L738.1 489.0 M685.0 494.8 L696.7 499.2 M685.6 463.6 L697.2 464.4 L709.6 468.2 M705.5 438.3 L707.8 445.9 L710.2 456.5 L713.7 466.0 M735.7 468.4 L735.0 469.2 M774.9 559.4 L769.0 562.4 M774.9 559.4 L791.6 558.2 M769.0 562.4 L767.0 572.5 L767.7 583.3 M791.6 558.2 L794.8 568.7 L798.1 575.9 L800.8 584.8 M767.7 583.3 L777.5 590.6 L785.1 598.1 M800.8 584.8 L793.0 591.6 L785.1 598.1 M767.7 583.3 L758.3 589.0 M544.1 559.8 L558.5 549.9 M558.5 549.9 L559.1 532.5 M546.1 523.3 L559.1 532.5 M548.5 587.0 L546.4 579.6 L545.8 568.2 L544.1 559.8 M581.0 564.3 L569.4 556.2 L558.5 549.9 M563.0 254.9 L554.0 252.2 M550.4 285.9 L548.6 284.0 M554.0 252.2 L552.6 264.2 L550.3 274.3 L548.6 284.0 M512.6 302.6 L514.4 293.8 L517.7 284.3 M548.6 284.0 L540.4 282.9 L529.2 285.3 L517.7 284.3 M547.0 401.1 L542.5 387.6 L541.1 376.5 M547.0 401.1 L536.3 403.7 L526.9 404.3 L517.3 406.1 M541.1 376.5 L529.6 376.9 L516.6 376.9 M548.3 370.3 L541.1 376.5 M557.3 406.5 L565.7 406.3 M557.3 406.5 L547.0 401.1 M557.3 406.5 L551.6 413.8 L544.6 424.1 L539.2 431.7 M539.2 431.7 L522.2 427.3 M611.2 433.4 L602.1 433.9 L592.2 435.6 L584.0 437.9 M598.1 466.3 L607.8 464.2 L617.1 462.1 M598.1 466.3 L584.9 456.8 M584.9 456.8 L585.4 447.6 L584.0 437.9 M575.6 414.6 L577.5 424.0 L579.0 432.7 M539.2 431.7 L548.5 444.4 M548.5 444.4 L558.6 440.8 L569.6 437.4 L579.0 432.7 M584.0 437.9 L579.0 432.7 M597.8 490.1 L606.8 490.5 L616.6 494.0 M597.8 490.1 L592.6 493.6 M592.6 493.6 L593.7 503.0 L593.9 511.4 L598.3 520.4 L599.6 530.0 M620.5 499.3 L616.6 494.0 M620.5 499.3 L616.5 509.7 L615.6 516.6 L611.2 525.6 M611.2 525.6 L600.5 530.7 M600.5 530.7 L599.6 530.0 M598.1 466.3 L599.2 479.4 L597.8 490.1 M625.6 471.6 L620.1 485.2 L616.6 494.0 M580.3 493.8 L592.6 493.6 M580.3 493.8 L574.2 481.5 L569.6 469.5 M569.6 469.5 L576.3 463.3 L584.9 456.8 M573.4 524.0 L572.1 512.3 L573.0 500.5 M573.4 524.0 L587.5 527.3 L599.6 530.0 M580.3 493.8 L573.0 500.5 M638.3 501.8 L644.8 495.5 M638.3 501.8 L620.5 499.3 M638.8 532.0 L644.6 525.7 M638.8 532.0 L629.4 531.3 L619.7 528.6 L611.2 525.6 M644.6 525.7 L641.2 514.0 L638.3 501.8 M600.2 553.4 L600.4 542.2 L600.5 530.7 M622.1 567.8 L631.0 560.9 L639.9 555.2 M639.9 555.2 L638.9 544.1 L638.8 532.0 M573.4 524.0 L559.1 532.5 M793.7 347.8 L800.1 340.5 L806.6 335.2 M786.0 299.0 L796.3 304.3 L807.8 310.8 M806.6 335.2 L807.2 323.2 L807.8 310.8 M853.7 286.6 L843.5 296.0 M843.5 296.0 L834.7 299.1 L825.7 302.2 L814.2 307.1 L807.8 310.8 M842.4 375.9 L827.1 372.9 M842.4 375.9 L850.8 369.0 L861.1 364.3 L872.0 357.6 M827.1 372.9 L825.9 359.7 L826.7 345.9 M872.0 357.6 L863.7 352.2 L854.8 349.4 L848.7 345.4 L840.4 340.3 M840.4 340.3 L826.7 345.9 M848.9 404.6 L848.4 395.3 L844.9 385.4 L842.4 375.9 M826.5 373.2 L827.1 372.9 M806.6 335.2 L816.8 340.3 L826.7 345.9 M843.5 296.0 L841.9 308.9 L840.3 318.4 L841.6 329.4 L840.4 340.3 M310.2 -54.4 L308.0 -44.9 L307.1 -35.9 L306.1 -25.6 L304.3 -14.9 L303.4 -5.8 M273.3 -13.1 L277.5 -4.1 L283.7 4.0 M283.7 4.0 L293.0 -0.5 L303.4 -5.8 M235.8 -9.0 L245.2 -9.8 L253.6 -11.7 L263.1 -11.9 L273.3 -13.1 M338.6 -7.2 L334.5 -14.1 L328.7 -22.9 L322.9 -32.8 L318.9 -39.3 L313.5 -48.2 L310.2 -54.4 M330.8 2.4 L322.2 -1.1 L311.1 -1.0 L303.4 -5.8 M264.7 19.9 L274.1 13.1 L283.2 6.8 M283.2 6.8 L283.7 4.0 M330.5 15.5 L321.4 20.0 L312.5 24.6 L301.3 31.2 M301.3 31.2 L294.1 23.0 L288.6 16.2 L283.2 6.8 M300.9 36.2 L290.6 45.4 L283.3 56.0 M300.9 36.2 L309.0 42.6 L317.5 48.2 L324.5 53.8 M302.0 78.8 L314.0 76.6 L322.1 75.3 M302.0 78.8 L293.8 73.6 L285.3 67.0 M285.3 67.0 L283.3 56.0 M322.1 75.3 L323.0 64.3 L324.5 53.8 M264.9 45.8 L273.6 50.3 L283.3 56.0 M301.3 31.2 L300.9 36.2 M347.7 36.5 L339.0 41.8 L330.9 48.4 L324.5 53.8 M322.5 75.5 L322.1 75.3 M295.5 108.7 L296.2 100.5 L301.3 89.7 L302.0 78.8 M264.4 84.7 L271.1 78.2 L279.4 73.0 L285.3 67.0 M558.1 196.2 L554.1 199.0 M590.0 223.6 L579.2 223.7 L567.4 225.1 M567.4 225.1 L563.9 215.6 L558.6 206.1 L554.1 199.0 M554.0 252.2 L549.4 246.8 M567.4 225.1 L560.8 232.7 L554.9 239.1 L549.4 246.8 M528.5 156.0 L531.3 164.7 L533.9 171.5 L535.4 183.0 L535.7 190.2 L539.3 200.2 M554.1 199.0 L539.3 200.2 M517.7 284.3 L515.6 274.5 L512.0 266.8 M512.0 266.8 L520.0 262.0 L528.8 256.7 L536.8 251.3 L546.2 245.9 M549.4 246.8 L546.2 245.9 M763.2 228.5 L755.3 226.5 L743.6 224.5 L736.8 221.7 M763.2 228.5 L767.9 224.1 M767.9 224.1 L767.8 211.7 L767.7 201.0 M733.9 203.9 L744.3 199.2 L754.0 197.1 L761.6 194.6 M733.9 203.9 L736.7 212.7 L736.8 221.7 M761.6 194.6 L767.7 201.0 M761.3 251.5 L761.0 240.0 L763.2 228.5 M723.1 246.1 L727.9 238.4 L733.1 229.0 L736.8 221.7 M792.2 229.0 L780.5 227.2 L767.9 224.1 M793.7 200.7 L780.4 200.0 L767.7 201.0 M732.9 203.2 L733.9 203.9 M763.5 177.6 L761.6 194.6 M475.2 230.3 L478.6 232.3 M512.0 266.8 L509.4 265.1 M532.7 225.3 L534.8 215.9 L535.5 203.7 M532.7 225.3 L522.3 227.4 L512.7 231.0 L502.2 232.5 M535.5 203.7 L525.0 201.0 L513.9 200.5 L502.8 197.7 M502.2 232.5 L498.6 229.8 M498.6 229.8 L498.7 218.4 L500.6 209.7 L500.9 199.2 M502.8 197.7 L500.9 199.2 M539.3 200.2 L535.5 203.7 M546.2 245.9 L540.3 235.6 L532.7 225.3 M509.4 265.1 L506.3 253.8 L503.6 242.5 L502.2 232.5 M504.4 168.9 L503.3 178.0 L504.3 187.0 L502.8 197.7 M478.6 232.3 L488.5 230.5 L498.6 229.8 M471.2 197.4 L482.4 198.2 L490.6 199.3 L500.9 199.2 M771.0 465.1 L772.3 475.0 L771.4 486.0 L772.2 495.7 M738.1 489.0 L740.1 491.5 M740.1 491.5 L756.6 498.4 M756.6 498.4 L772.2 495.7 M796.7 492.9 L783.6 494.4 L772.7 496.0 M772.2 495.7 L772.7 496.0 M795.0 525.9 L779.4 524.5 M772.7 496.0 L775.5 504.7 L776.4 515.1 L779.4 524.5 M774.9 559.4 L775.8 547.9 L777.2 537.1 L778.1 525.6 M797.2 554.6 L791.6 558.2 M779.4 524.5 L778.1 525.6 M704.7 582.5 L706.7 569.4 L710.5 557.6 M704.7 582.5 L698.4 586.3 M698.4 586.3 L690.1 586.8 M710.5 557.6 L698.5 556.2 L685.8 552.9 M690.1 586.8 L683.8 583.6 M685.8 552.9 L686.3 562.4 L685.4 574.0 L683.8 583.6 M639.9 555.2 L655.4 560.0 M627.5 586.6 L636.6 586.6 L646.6 587.4 L654.1 586.0 L664.3 585.1 M655.4 560.0 L659.7 572.3 L664.3 585.1 M683.8 583.6 L674.8 585.2 L665.5 586.2 M664.3 585.1 L665.5 586.2 M692.3 527.1 L690.6 540.0 L685.7 552.8 M692.3 527.1 L682.5 527.4 L672.9 524.2 L663.9 523.4 M663.9 523.4 L663.4 523.8 M663.4 523.8 L664.2 533.8 L667.8 542.2 L669.7 550.8 M669.7 550.8 L685.7 552.8 M669.3 499.7 L666.7 511.4 L663.9 523.4 M700.3 503.5 L702.8 519.1 M702.8 519.1 L692.3 527.1 M644.6 525.7 L653.3 524.1 L663.4 523.8 M655.4 560.0 L669.7 550.8 M685.8 552.9 L685.7 552.8 M702.8 519.1 L714.9 526.6 M710.5 557.6 L711.4 557.1 M711.4 557.1 L712.9 547.0 L715.1 536.0 L714.9 526.6 M704.7 582.5 L715.8 583.9 L727.9 587.2 M732.5 582.2 L727.9 587.2 M732.5 582.2 L734.4 571.0 L733.9 562.0 M711.4 557.1 L723.3 560.8 L733.9 562.0 M740.1 491.5 L737.1 500.8 L732.4 508.4 L730.0 517.6 L728.7 526.1 M728.7 526.1 L714.9 526.6 M758.3 589.0 L747.0 585.6 L732.5 582.2 M849.7 614.1 L851.2 606.9 L847.5 594.8 L848.2 585.1 M849.7 614.1 L839.0 618.1 L830.1 622.4 M830.1 622.4 L823.5 616.6 M823.5 616.6 L822.5 606.0 L823.4 596.5 L822.1 585.2 M848.2 585.1 L839.5 579.7 L830.3 574.3 M830.3 574.3 L822.1 585.2 M800.8 584.8 L811.6 583.7 L822.1 585.2 M830.4 562.2 L830.3 574.3 M550.6 469.5 L544.5 464.7 M550.6 469.5 L550.0 478.4 L550.0 486.4 L551.5 496.5 M545.1 502.8 L551.5 496.5 M548.5 444.4 L546.8 453.5 L544.5 464.7 M546.1 523.3 L545.7 512.1 L545.1 502.8 M569.6 469.5 L560.1 469.3 L550.6 469.5 M573.0 500.5 L561.8 499.0 L551.5 496.5 M756.2 555.5 L757.4 545.5 L757.4 537.0 L758.5 528.0 M756.2 555.5 L742.1 555.7 M742.1 555.7 L738.1 546.8 L734.4 536.8 L730.4 527.2 M730.4 527.2 L741.0 524.6 L754.2 523.9 M758.5 528.0 L754.2 523.9 M769.0 562.4 L756.2 555.5 M778.1 525.6 L768.6 525.4 L758.5 528.0 M733.9 562.0 L742.1 555.7 M728.7 526.1 L730.4 527.2 M756.6 498.4 L755.6 510.5 L754.2 523.9 M6.0 254.1 L37.4 254.1 L37.4 252.3 L69.0 252.3 L69.0 253.1 L123.2 253.1 L123.2 254.3 L141.1 254.3 M38.1 240 L38.1 254.1 M71.9 240 L71.9 254.1 M107.1 240 L107.1 254.1 M6.0 290.3 L48.8 290.3 L48.8 289.1 L95.3 289.1 L95.3 288.0 L128.4 288.0 M40.2 254.1 L40.2 290.3 M83.6 254.1 L83.6 290.3 M119.1 254.1 L119.1 278.3 L120.3 278.3 L120.3 290.3 M6.0 336.7 L37.6 336.7 L37.6 337.9 L78.2 337.9 L78.2 339.3 L110.3 339.3 M27.0 290.3 L27.0 323.7 L25.7 323.7 L25.7 336.7 M65.0 290.3 L65.0 308.7 L66.8 308.7 L66.8 336.7 M6.0 379.2 L60.0 379.2 L60.0 381.1 L83.8 381.1 L83.8 382.4 L93.3 382.4 M26.9 336.7 L26.9 373.1 L25.8 373.1 L25.8 379.2 M80.5 336.7 L80.5 369.2 L79.5 369.2 L79.5 379.2 M6.0 412.9 L29.7 412.9 L29.7 411.6 L71.2 411.6 L71.2 413.3 L84.2 413.3 M36.4 379.2 L36.4 398.4 L35.4 398.4 L35.4 412.9 M6.0 452.7 L53.5 452.7 L53.5 451.4 L81.3 451.4 M36.5 412.9 L36.5 446.2 L37.7 446.2 L37.7 452.7 M6.0 493.3 L39.5 493.3 L39.5 492.0 L71.6 492.0 M24.1 452.7 L24.1 493.3 M6.0 528.2 L52.5 528.2 L52.5 526.2 L61.5 526.2 M44.7 493.3 L44.7 513.9 L45.9 513.9 L45.9 528.2 M6.0 573.4 L49.7 573.4 M30.5 528.2 L30.5 557.4 L31.7 557.4 L31.7 573.4 M6.0 607.5 L30.9 607.5 L30.9 606.4 L69.8 606.4 L69.8 608.2 L102.8 608.2 L102.8 607.1 L155.6 607.1 L155.6 606.1 L186.0 606.1 M6.0 646.5 L35.4 646.5 L35.4 645.0 L88.3 645.0 L88.3 646.3 L132.4 646.3 L132.4 644.3 L186.0 644.3 M25.5 607.5 L25.5 646.5 M59.8 607.5 L59.8 626.0 L61.5 626.0 L61.5 646.5 M136.1 607.5 L136.1 627.6 L137.5 627.6 L137.5 646.5 M6.0 687.8 L51.2 687.8 L51.2 689.1 L98.5 689.1 L98.5 687.6 L146.4 687.6 L146.4 686.6 L186.0 686.6 M46.4 646.5 L46.4 687.8 M79.4 646.5 L79.4 680.5 L80.9 680.5 L80.9 687.8 M128.5 646.5 L128.5 678.3 L127.1 678.3 L127.1 687.8 M169.3 646.5 L169.3 676.5 L170.9 676.5 L170.9 687.8 M6.0 727.6 L45.7 727.6 L45.7 725.9 L89.0 725.9 L89.0 727.2 L122.7 727.2 L122.7 726.3 L173.3 726.3 L173.3 728.3 L186.0 728.3 M25.3 687.8 L25.3 727.6 M68.0 687.8 L68.0 711.8 L68.9 711.8 L68.9 727.6 M117.0 687.8 L117.0 702.1 L118.6 702.1 L118.6 727.6 M160.5 687.8 L160.5 709.1 L159.5 709.1 L159.5 727.6 M6.0 770.1 L48.3 770.1 L48.3 772.2 L99.5 772.2 L99.5 770.5 L150.9 770.5 L150.9 769.4 L186.0 769.4 M41.8 727.6 L41.8 753.3 L40.3 753.3 L40.3 770.1 M90.6 727.6 L90.6 759.7 L91.9 759.7 L91.9 770.1 M134.1 727.6 L134.1 746.4 L133.3 746.4 L133.3 770.1 M28.2 770.1 L28.2 789.3 L26.8 789.3 L26.8 812 M81.0 770.1 L81.0 812 M125.2 770.1 L125.2 805.0 L123.9 805.0 L123.9 812 M6.0 119.1 L38.8 119.1 L38.8 120.1 L65.4 120.1 L65.4 117.9 L104.6 117.9 L104.6 119.3 L143.4 119.3 L143.4 117.4 L167.5 117.4 L167.5 118.5 L196.8 118.5 M31.5 105 L31.5 119.1 M73.3 105 L73.3 119.1 M106.6 105 L106.6 119.1 M135.3 105 L135.3 119.1 M6.0 154.0 L38.9 154.0 L38.9 155.4 L92.0 155.4 L92.0 154.4 L145.1 154.4 L145.1 156.5 L178.1 156.5 L178.1 154.7 L186.0 154.7 M30.3 119.1 L30.3 154.0 M75.7 119.1 L75.7 143.5 L76.5 143.5 L76.5 154.0 M112.9 119.1 L112.9 138.9 L114.4 138.9 L114.4 154.0 M146.5 119.1 L146.5 139.8 L145.1 139.8 L145.1 154.0 M6.0 195.3 L37.7 195.3 L37.7 196.6 L63.8 196.6 L63.8 194.9 L109.9 194.9 L109.9 193.7 L143.3 193.7 L143.3 191.8 L165.3 191.8 M21.1 154.0 L21.1 180.8 L22.3 180.8 L22.3 195.3 M114.1 154.0 L114.1 178.8 L115.1 178.8 L115.1 195.3 M146.8 154.0 L146.8 195.3 M6.0 236.4 L55.3 236.4 L55.3 235.4 L106.5 235.4 L106.5 236.5 L147.5 236.5 M26.8 195.3 L26.8 211.6 L25.2 211.6 L25.2 226.1 L23.4 226.1 L23.4 236.4 M63.0 195.3 L63.0 236.4 M108.0 195.3 L108.0 223.1 L106.6 223.1 L106.6 236.4 M6.0 16.5 L52.5 16.5 L52.5 15.2 L83.3 15.2 L83.3 13.9 L114.1 13.9 L114.1 13.0 L142.9 13.0 L142.9 14.8 L178.1 14.8 L178.1 13.0 L211.4 13.0 M22.7 6 L22.7 16.5 M59.0 6 L59.0 16.5 M97.2 6 L97.2 16.5 M189.1 6 L189.1 16.5 M6.0 41.5 L42.9 41.5 L42.9 40.4 L66.4 40.4 L66.4 38.4 L99.6 38.4 L99.6 38.0 L130.3 38.0 L130.3 38.0 L165.0 38.0 L165.0 39.5 L200.0 39.5 L200.0 41.2 L221.1 41.2 M37.8 16.5 L37.8 31.8 L39.0 31.8 L39.0 41.5 M70.3 16.5 L70.3 41.5 M106.4 16.5 L106.4 41.5 M143.4 16.5 L143.4 41.5 M169.6 16.5 L169.6 41.5 M196.0 16.5 L196.0 41.5 M6.0 73.6 L47.4 73.6 L47.4 74.7 L92.8 74.7 L92.8 73.5 L121.2 73.5 L121.2 72.3 L173.9 72.3 L173.9 71.4 L215.5 71.4 M38.0 41.5 L38.0 62.8 L37.1 62.8 L37.1 73.6 M68.4 41.5 L68.4 73.6 M108.2 41.5 L108.2 73.6 M152.0 41.5 L152.0 73.6 M180.5 41.5 L180.5 73.6 M207.2 41.5 L207.2 58.5 L208.6 58.5 L208.6 73.6 M26.5 73.6 L26.5 98.0 L28.1 98.0 L28.1 105 M88.0 73.6 L88.0 105 M164.8 73.6 L164.8 105 M137.4 264.6 L165.5 264.6 L165.5 265.6 L203.3 265.6 L203.3 267.5 L227.8 267.5 L227.8 266.7 L281.7 266.7 L281.7 264.6 L298.8 264.6 M238.4 240 L238.4 264.6 M280.2 240 L280.2 264.6 M123.9 302.7 L178.0 302.7 L178.0 304.1 L228.2 304.1 L228.2 302.5 L266.9 302.5 L266.9 303.9 L296.9 303.9 M147.9 264.6 L147.9 295.4 L148.9 295.4 L148.9 302.7 M190.8 264.6 L190.8 302.7 M231.8 264.6 L231.8 280.1 L230.1 280.1 L230.1 302.7 M272.4 264.6 L272.4 302.7 M112.9 330.4 L166.5 330.4 L166.5 328.8 L210.0 328.8 L210.0 329.9 L248.5 329.9 L248.5 328.8 L279.9 328.8 L279.9 327.7 L295.6 327.7 M166.1 302.7 L166.1 330.4 M201.5 302.7 L201.5 319.8 L200.1 319.8 L200.1 330.4 M237.7 302.7 L237.7 330.4 M281.5 302.7 L281.5 330.4 M99.6 363.4 L140.9 363.4 L140.9 362.6 L178.4 362.6 L178.4 364.0 L206.4 364.0 L206.4 363.2 L242.3 363.2 L242.3 361.7 L268.4 361.7 L268.4 360.2 L293.9 360.2 M120.7 330.4 L120.7 363.4 M153.7 330.4 L153.7 363.4 M181.0 330.4 L181.0 351.7 L182.3 351.7 L182.3 363.4 M209.5 330.4 L209.5 348.5 L211.0 348.5 L211.0 363.4 M242.5 330.4 L242.5 347.9 L241.3 347.9 L241.3 363.4 M88.5 391.1 L127.3 391.1 L127.3 390.1 L169.0 390.1 L169.0 388.2 L201.7 388.2 L201.7 387.6 L228.6 387.6 L228.6 387.6 L256.7 387.6 L256.7 389.8 L292.6 389.8 M144.4 363.4 L144.4 382.8 L145.5 382.8 L145.5 391.1 M172.1 363.4 L172.1 391.1 M213.7 363.4 L213.7 391.1 M244.3 363.4 L244.3 391.1 M83.8 419.3 L116.8 419.3 L116.8 418.1 L141.7 418.1 L141.7 416.1 L192.3 416.1 L192.3 417.5 L246.6 417.5 L246.6 416.3 L272.5 416.3 L272.5 418.2 L290.1 418.2 M112.5 391.1 L112.5 419.3 M184.2 391.1 L184.2 407.8 L183.3 407.8 L183.3 419.3 M223.1 391.1 L223.1 419.3 M263.6 391.1 L263.6 419.3 M81.4 452.6 L105.8 452.6 L105.8 451.6 L149.1 451.6 L149.1 450.3 L192.5 450.3 L192.5 449.1 L222.5 449.1 L222.5 450.1 L266.4 450.1 L266.4 449.1 L286.4 449.1 M101.8 419.3 L101.8 452.6 M134.6 419.3 L134.6 440.3 L136.1 440.3 L136.1 452.6 M176.0 419.3 L176.0 452.6 M203.0 419.3 L203.0 452.6 M236.8 419.3 L236.8 436.4 L238.3 436.4 L238.3 452.6 M74.4 481.8 L98.7 481.8 L98.7 479.9 L133.7 479.9 L133.7 478.5 L166.7 478.5 L166.7 479.7 L217.6 479.7 L217.6 478.3 L249.8 478.3 L249.8 478.3 L283.1 478.3 M91.8 452.6 L91.8 481.8 M124.3 452.6 L124.3 481.8 M214.1 452.6 L214.1 472.8 L215.6 472.8 L215.6 481.8 M258.2 452.6 L258.2 481.8 M64.3 519.0 L87.2 519.0 L87.2 520.0 L114.3 520.0 L114.3 521.4 L144.7 521.4 L144.7 522.5 L187.2 522.5 L187.2 522.5 L241.0 522.5 L241.0 521.3 L281.6 521.3 M97.7 481.8 L97.7 511.0 L96.5 511.0 L96.5 519.0 M139.1 481.8 L139.1 497.7 L140.0 497.7 L140.0 519.0 M173.6 481.8 L173.6 509.6 L172.2 509.6 L172.2 519.0 M217.1 481.8 L217.1 497.3 L215.8 497.3 L215.8 519.0 M262.7 481.8 L262.7 519.0 M55.0 549.9 L94.0 549.9 L94.0 551.4 L148.7 551.4 L148.7 552.8 L186.4 552.8 L186.4 551.1 L210.4 551.1 L210.4 551.9 L244.9 551.9 L244.9 553.3 L282.5 553.3 M85.6 519.0 L85.6 533.6 L87.2 533.6 L87.2 549.9 M129.0 519.0 L129.0 549.9 M169.4 519.0 L169.4 533.1 L168.5 533.1 L168.5 549.9 M247.0 519.0 L247.0 549.9 M48.6 578.1 L86.3 578.1 L86.3 579.3 L122.2 579.3 L122.2 578.1 L159.7 578.1 L159.7 577.1 L210.6 577.1 L210.6 575.0 L251.1 575.0 L251.1 574.6 L283.3 574.6 M73.4 549.9 L73.4 578.1 M114.1 549.9 L114.1 578.1 M149.4 549.9 L149.4 578.1 M239.0 549.9 L239.0 569.6 L237.2 569.6 L237.2 578.1 M186.0 612.7 L211.5 612.7 L211.5 610.9 L251.8 610.9 L251.8 610.0 L284.3 610.0 M208.2 578.1 L208.2 601.1 L209.4 601.1 L209.4 612.7 M255.0 578.1 L255.0 600.9 L253.9 600.9 L253.9 612.7 M186.0 642.1 L237.3 642.1 L237.3 644.3 L272.2 644.3 L272.2 642.1 L285.4 642.1 M200.5 612.7 L200.5 630.9 L202.2 630.9 L202.2 642.1 M233.8 612.7 L233.8 642.1 M210.0 642.1 L210.0 660 M240.1 642.1 L240.1 660 M271.7 642.1 L271.7 660 M299.4 252.4 L343.6 252.4 L343.6 254.5 L396.4 254.5 L396.4 252.9 L434.5 252.9 L434.5 251.0 L458.0 251.0 L458.0 249.4 L494.6 249.4 M317.0 240 L317.0 252.4 M391.1 240 L391.1 252.4 M436.2 240 L436.2 252.4 M297.9 282.2 L341.7 282.2 L341.7 283.7 L389.4 283.7 L389.4 285.2 L443.2 285.2 L443.2 285.7 L477.9 285.7 L477.9 283.9 L499.6 283.9 M336.7 252.4 L336.7 282.2 M385.6 252.4 L385.6 282.2 M431.3 252.4 L431.3 282.2 M470.8 252.4 L470.8 270.5 L469.9 270.5 L469.9 282.2 M296.3 314.6 L350.5 314.6 L350.5 316.6 L390.7 316.6 L390.7 317.7 L441.6 317.7 L441.6 318.1 L488.9 318.1 L488.9 318.1 L505.1 318.1 M319.9 282.2 L319.9 301.0 L318.6 301.0 L318.6 314.6 M353.9 282.2 L353.9 314.6 M399.1 282.2 L399.1 304.5 L400.6 304.5 L400.6 314.6 M449.4 282.2 L449.4 301.2 L448.2 301.2 L448.2 314.6 M486.1 282.2 L486.1 296.8 L485.2 296.8 L485.2 314.6 M294.8 345.1 L336.7 345.1 L336.7 346.4 L386.5 346.4 L386.5 345.3 L434.5 345.3 L434.5 343.6 L483.4 343.6 L483.4 342.2 L510.2 342.2 M315.8 314.6 L315.8 331.1 L314.4 331.1 L314.4 345.1 M366.9 314.6 L366.9 345.1 M414.3 314.6 L414.3 345.1 M477.0 314.6 L477.0 345.1 M293.0 381.7 L327.7 381.7 L327.7 380.1 L377.6 380.1 L377.6 378.9 L402.5 378.9 L402.5 380.5 L451.1 380.5 L451.1 378.8 L479.0 378.8 L479.0 379.7 L502.6 379.7 L502.6 381.2 L516.4 381.2 M324.1 345.1 L324.1 381.7 M365.7 345.1 L365.7 365.7 L364.4 365.7 L364.4 381.7 M396.1 345.1 L396.1 374.4 L395.0 374.4 L395.0 381.7 M441.1 345.1 L441.1 375.2 L442.8 375.2 L442.8 381.7 M486.9 345.1 L486.9 381.7 M289.8 422.5 L326.5 422.5 L326.5 424.5 L379.5 424.5 L379.5 422.6 L431.4 422.6 L431.4 424.1 L465.2 424.1 L465.2 425.0 L501.7 425.0 L501.7 426.0 L526.2 426.0 M330.4 381.7 L330.4 402.2 L329.2 402.2 L329.2 422.5 M372.2 381.7 L372.2 412.2 L373.3 412.2 L373.3 422.5 M404.1 381.7 L404.1 422.5 M454.3 381.7 L454.3 409.9 L453.1 409.9 L453.1 422.5 M494.3 381.7 L494.3 422.5 M285.5 460.6 L312.0 460.6 L312.0 462.4 L366.2 462.4 L366.2 460.7 L415.8 460.7 L415.8 459.6 L470.2 459.6 L470.2 457.6 L507.1 457.6 L507.1 459.3 L538.3 459.3 M316.9 422.5 L316.9 460.6 M356.4 422.5 L356.4 460.6 M387.3 422.5 L387.3 445.8 L388.7 445.8 L388.7 460.6 M438.0 422.5 L438.0 444.4 L437.1 444.4 L437.1 460.6 M469.2 422.5 L469.2 460.6 M501.1 422.5 L501.1 439.7 L499.7 439.7 L499.7 460.6 M281.1 504.1 L320.7 504.1 L320.7 505.0 L349.6 505.0 L349.6 506.5 L403.1 506.5 L403.1 504.5 L443.0 504.5 L443.0 503.0 L490.1 503.0 L490.1 504.6 L513.3 504.6 L513.3 503.0 L532.4 503.0 M298.9 460.6 L298.9 489.5 L297.5 489.5 L297.5 504.1 M335.9 460.6 L335.9 480.1 L337.4 480.1 L337.4 504.1 M421.1 460.6 L421.1 494.7 L422.3 494.7 L422.3 504.1 M455.4 460.6 L455.4 476.2 L453.9 476.2 L453.9 504.1 M488.3 460.6 L488.3 494.5 L489.6 494.5 L489.6 504.1 M519.5 460.6 L519.5 478.1 L518.5 478.1 L518.5 504.1 M282.2 540.8 L330.1 540.8 L330.1 539.9 L367.0 539.9 L367.0 542.1 L399.1 542.1 L399.1 544.1 L423.9 544.1 L423.9 542.7 L478.8 542.7 L478.8 543.7 L503.6 543.7 L503.6 544.3 L531.0 544.3 M316.7 504.1 L316.7 529.2 L317.9 529.2 L317.9 540.8 M358.6 504.1 L358.6 540.8 M395.2 504.1 L395.2 540.8 M462.7 504.1 L462.7 540.8 M283.2 576.9 L336.6 576.9 L336.6 575.3 L372.7 575.3 L372.7 577.5 L403.0 577.5 L403.0 579.3 L452.0 579.3 L452.0 577.2 L498.8 577.2 L498.8 578.1 L530.1 578.1 M301.9 540.8 L301.9 569.0 L300.9 569.0 L300.9 576.9 M332.6 540.8 L332.6 576.9 M376.1 540.8 L376.1 569.8 L377.6 569.8 L377.6 576.9 M406.5 540.8 L406.5 569.9 L407.8 569.9 L407.8 576.9 M445.6 540.8 L445.6 570.5 L444.5 570.5 L444.5 576.9 M481.2 540.8 L481.2 562.4 L482.6 562.4 L482.6 576.9 M318.7 576.9 L318.7 596 M370.3 576.9 L370.3 596 M400.4 576.9 L400.4 596 M444.4 576.9 L444.4 596 M494.6 576.9 L494.6 596 M345.0 621.5 L382.1 621.5 L382.1 622.5 L434.4 622.5 L434.4 620.4 L463.6 620.4 L463.6 621.7 L515.8 621.7 L515.8 620.7 L540.0 620.7 M360.5 596 L360.5 621.5 M411.1 596 L411.1 621.5 M449.4 596 L449.4 621.5 M500.5 596 L500.5 621.5 M345.0 651.0 L375.6 651.0 L375.6 652.3 L400.1 652.3 L400.1 650.8 L436.8 650.8 L436.8 652.8 L488.9 652.8 L488.9 653.8 L540.0 653.8 M383.9 621.5 L383.9 651.0 M414.3 621.5 L414.3 637.6 L413.4 637.6 L413.4 651.0 M456.1 621.5 L456.1 651.0 M501.8 621.5 L501.8 641.5 L503.2 641.5 L503.2 651.0 M345.0 687.0 L396.7 687.0 L396.7 685.7 L425.3 685.7 L425.3 687.6 L447.5 687.6 L447.5 686.2 L479.1 686.2 L479.1 684.9 L504.2 684.9 L504.2 685.9 L540.0 685.9 M373.7 651.0 L373.7 687.0 M416.9 651.0 L416.9 676.0 L415.3 676.0 L415.3 687.0 M452.7 651.0 L452.7 675.6 L451.0 675.6 L451.0 687.0 M498.6 651.0 L498.6 671.6 L497.5 671.6 L497.5 687.0 M345.0 721.1 L370.3 721.1 L370.3 719.9 L395.4 719.9 L395.4 719.0 L427.2 719.0 L427.2 717.6 L467.2 717.6 L467.2 717.6 L501.9 717.6 L501.9 719.6 L524.5 719.6 L524.5 718.6 L540.0 718.6 M382.0 687.0 L382.0 713.1 L383.7 713.1 L383.7 721.1 M424.8 687.0 L424.8 701.1 L423.3 701.1 L423.3 721.1 M464.7 687.0 L464.7 721.1 M501.3 687.0 L501.3 721.1 M345.0 758.7 L371.3 758.7 L371.3 759.6 L398.7 759.6 L398.7 758.5 L443.0 758.5 L443.0 756.4 L469.8 756.4 L469.8 755.2 L513.7 755.2 L513.7 755.2 L540.0 755.2 M377.2 721.1 L377.2 739.9 L375.5 739.9 L375.5 758.7 M425.6 721.1 L425.6 746.8 L424.6 746.8 L424.6 758.7 M474.2 721.1 L474.2 758.7 M525.4 721.1 L525.4 750.6 L526.9 750.6 L526.9 758.7 M345.0 790.3 L368.8 790.3 L368.8 792.2 L413.9 792.2 L413.9 793.1 L447.5 793.1 L447.5 791.5 L481.4 791.5 L481.4 792.9 L526.4 792.9 L526.4 793.8 L540.0 793.8 M375.1 758.7 L375.1 773.3 L373.5 773.3 L373.5 790.3 M413.5 758.7 L413.5 773.6 L412.2 773.6 L412.2 790.3 M461.7 758.7 L461.7 790.3 M497.1 758.7 L497.1 777.2 L497.9 777.2 L497.9 790.3 M367.6 790.3 L367.6 812 M414.9 790.3 L414.9 812 M453.8 790.3 L453.8 812 M540.0 654.9 L592.3 654.9 L592.3 653.3 L633.9 653.3 L633.9 651.4 L667.3 651.4 L667.3 651.4 L705.5 651.4 L705.5 651.4 L758.3 651.4 L758.3 651.4 L784.0 651.4 L784.0 653.5 L806.0 653.5 M553.3 626 L553.3 654.9 M597.5 626 L597.5 654.9 M629.1 626 L629.1 654.9 M675.4 626 L675.4 640.4 L676.2 640.4 L676.2 654.9 M711.6 626 L711.6 646.7 L710.3 646.7 L710.3 654.9 M792.1 626 L792.1 654.9 M540.0 688.5 L571.1 688.5 L571.1 690.5 L620.9 690.5 L620.9 689.3 L674.6 689.3 L674.6 688.0 L705.6 688.0 L705.6 686.5 L755.3 686.5 L755.3 685.0 L806.0 685.0 M561.3 654.9 L561.3 673.5 L560.2 673.5 L560.2 688.5 M605.7 654.9 L605.7 682.0 L604.5 682.0 L604.5 688.5 M639.0 654.9 L639.0 688.5 M673.6 654.9 L673.6 688.5 M709.7 654.9 L709.7 669.4 L710.9 669.4 L710.9 688.5 M742.5 654.9 L742.5 681.8 L744.3 681.8 L744.3 688.5 M782.9 654.9 L782.9 676.4 L781.3 676.4 L781.3 688.5 M540.0 726.2 L587.7 726.2 L587.7 727.7 L628.6 727.7 L628.6 729.3 L663.0 729.3 L663.0 727.7 L686.2 727.7 L686.2 726.0 L722.3 726.0 L722.3 724.9 L776.2 724.9 L776.2 727.0 L806.0 727.0 M553.3 688.5 L553.3 726.2 M586.4 688.5 L586.4 726.2 M616.3 688.5 L616.3 705.9 L614.6 705.9 L614.6 726.2 M646.9 688.5 L646.9 726.2 M679.6 688.5 L679.6 703.5 L678.6 703.5 L678.6 726.2 M711.9 688.5 L711.9 708.2 L710.7 708.2 L710.7 726.2 M787.0 688.5 L787.0 710.7 L786.1 710.7 L786.1 726.2 M540.0 755.5 L577.5 755.5 L577.5 754.3 L604.6 754.3 L604.6 756.4 L629.2 756.4 L629.2 755.5 L654.1 755.5 L654.1 754.6 L686.2 754.6 L686.2 755.8 L722.1 755.8 L722.1 753.9 L754.1 753.9 L754.1 752.8 L806.0 752.8 M558.8 726.2 L558.8 740.8 L560.3 740.8 L560.3 755.5 M589.2 726.2 L589.2 741.8 L590.7 741.8 L590.7 755.5 M627.3 726.2 L627.3 755.5 M656.8 726.2 L656.8 755.5 M698.5 726.2 L698.5 747.2 L700.2 747.2 L700.2 755.5 M729.0 726.2 L729.0 755.5 M762.8 726.2 L762.8 741.6 L761.3 741.6 L761.3 755.5 M540.0 794.2 L563.0 794.2 L563.0 796.4 L589.3 796.4 L589.3 797.7 L629.7 797.7 L629.7 795.8 L677.0 795.8 L677.0 794.5 L717.9 794.5 L717.9 796.1 L746.4 796.1 L746.4 794.8 L794.5 794.8 L794.5 796.6 L806.0 796.6 M572.5 755.5 L572.5 786.9 L573.4 786.9 L573.4 794.2 M606.1 755.5 L606.1 794.2 M639.1 755.5 L639.1 794.2 M671.1 755.5 L671.1 776.3 L672.2 776.3 L672.2 794.2 M711.5 755.5 L711.5 794.2 M564.1 794.2 L564.1 812 M593.9 794.2 L593.9 812 M632.9 794.2 L632.9 812 M674.8 794.2 L674.8 812 M705.8 794.2 L705.8 812 M740.2 794.2 L740.2 812 M785.9 794.2 L785.9 812 M186.0 672.9 L211.2 672.9 L211.2 673.7 L235.6 673.7 L235.6 675.3 L267.5 675.3 L267.5 673.1 L310.3 673.1 L310.3 674.9 L345.0 674.9 M224.5 660 L224.5 672.9 M256.3 660 L256.3 672.9 M307.9 660 L307.9 672.9 M186.0 697.9 L238.1 697.9 L238.1 698.8 L286.8 698.8 L286.8 700.9 L310.7 700.9 L310.7 699.9 L345.0 699.9 M204.5 672.9 L204.5 697.9 M235.8 672.9 L235.8 697.9 M276.8 672.9 L276.8 697.9 M317.1 672.9 L317.1 697.9" fill="none" stroke="#626765" stroke-width="1" shape-rendering="crispEdges"/>
<path d="M6 710.25 L10 705.25 L17.5 701.5 L26.25 700.25 L30 704 L27.5 707.75 L32.5 707.75 L40 706.5 L46.25 705.25 L47.5 709 L46.25 714 L50 716.5 L52.5 722.75 L58.75 725.25 L66.25 726.5 L71.25 726.5 L72.5 731.5 L75 734 L77.5 739 L81.25 742.75 L86.25 742.75 L91.25 741.5 L96.25 745.25 L101.25 749 L106.25 751.5 L110 755.25 L113.75 752.75 L117.5 747.75 L125 745.25 L130 741.5 L135 745.25 L140 749 L147.5 751.5 L150 755.25 L151.25 739 L150 726.5 L155 720.25 L165 726.5 L175 734 L190 741.5 L205 749 L220 755.25 L235 758.25 L241.25 757 L237.5 755.9 L232.2 753.2 L228.7 749.7 L223.4 746.2 L218.1 742.7 L212.8 740 L205.8 737.4 L200.5 735.6 L195.2 732.1 L190.8 726.8 L186.4 721.5 L182 717.1 L186.4 716.3 L188.2 711 L191.7 707.5 L193.5 702.2 L198.7 700.4 L204 696.9 L202.3 689.9 L204 681.9 L197.9 684.6 L196.1 690.7 L191.7 694.3 L186.4 691.6 L179.4 689 L176.7 684.6 L179.4 681.1 L186.4 678.4 L191.7 674 L195.2 669.6 L200.5 667.9 L205.8 665.2 L209.3 662.6 L212.8 659.9 L216.3 656.4 L212.8 652.9 L216.3 651.1 L220.7 652 L223.4 655.5 L230.4 652.9 L237.5 649.4 L242.7 646.7 L249.8 646.7 L255.1 647.6 L261.2 651.1 L267.4 652 L272.7 651.1 L279.7 652.9 L283.2 652.9 L290.3 648.5 L295.6 651.1 L300.8 654.6 L306 658.2 L306.5 646.5 L307.75 636.5 L309 627.75 L312.75 622.5 L316.5 624 L319 625.25 L321 634 L322 641.5 L324 646.5 L327.75 650.25 L331.5 655.25 L334 659 L346.5 657.75 L359 655.25 L369 653.5 L374 646.5 L377.75 639 L376.5 632.75 L380.25 634 L382.75 639 L386.5 632.75 L389 631.5 L390.25 636.5 L394 641.5 L397.75 644 L391.5 646.5 L396.5 647.75 L409 647 L419 646.5 L420.25 642.75 L427.75 640.25 L434 642.75 L444 641.5 L450.25 640.25 L455.25 645.25 L454 648.5 L446.5 652.75 L459 657 L469 661.5 L475.25 659 L477.75 656.5 L484 657.75 L491.5 655.25 L496.5 652.75 L497.75 656.5 L490.25 660.25 L486.5 665.25 L489 670.25 L496.5 674 L504 677.75 L506.5 681.5 L499 684 L504 689 L507.75 694 L511.5 695.25 L515.25 701.5 L514 709 L510.25 711.5 L516.5 710.25 L521.5 711.5 L530.25 709 L539 706.5 L545.25 702.75 L549 700.25 L552.75 702.75 L556.5 707.75 L563 702.75 L569.25 697.75 L575.5 692.75 L581.75 690.25 L585.5 691.5 L586.75 687.75 L580.5 685.25 L583 681.5 L588 677.75 L594.25 674.5 L601.75 675.25 L610.5 674.5 L616.75 679 L623 682.75 L629.25 685.25 L635.5 690.25 L640.5 695.25 L643 702.75 L648 707.75 L655.5 712.75 L656.75 720.25 L658 726.5 L663 729 L668 732.75 L673 739 L678 745.25 L680.5 752.75 L684.25 756.5 L683 761.5 L688 756.5 L695.5 756.5 L700.5 759 L703 766.5 L705.5 774 L710.5 779 L714.25 784 L713 791.5 L715 806 L715 812 L0 812 L0 710.25Z" fill="#004364" stroke="#000" stroke-width="1" stroke-linejoin="round"/>
<path d="M15 716.5 L25 715.25 L35 719 L38.75 722.75 L33.75 726.5 L27.5 729 L21.25 725.25 L15 721.5Z" fill="#5d504c" stroke="#000" stroke-width="1"/>
<path d="M300.8 654.6 L306 659 L315 662 L327 661 L334 659 L346.5 657.75 L359 655.25 L369 653.5 L384 650.5 L396.5 648.5 L409 647.5 L419 647.5 L434 649.5 L446.5 652.75 L459 657 L469 661.5 L476.5 666 L484 671.5 L491.5 677 L499 684 L504 689 L507.75 694 L506.5 700.5 L509 708 L512 711.5 M524 712.75 L534 719.5 L541.5 717 L549 712.75 L556.5 707.75 L568 701.5" fill="none" stroke="#000" stroke-width="1.2"/>
<path d="M249.79 678.42 L254.19 686.34 L253.31 696.9 L249.79 705.7 L244.51 712.75 L237.46 719.79 L230.42 726.83 L224.26 731.23" fill="none" stroke="#000" stroke-width="1.2" stroke-dasharray="4 2 2 3 5 2"/>
<path d="M228.66 663.45 L235.7 661.69 M240.99 664.33 L249.79 662.22 M257.71 661.34 L265.63 662.57 L274.44 663.45 L286.76 665.21 M233.06 661.69 L235.7 663.45" fill="none" stroke="#000" stroke-width="1.6"/>
<path d="M221.4 695.6 L219.9 695.1 L219.1 693.9 L217.6 693.7 L216.1 693.7 M217.7 686.9 L216.9 685.6 L217.5 687.0 L218.4 685.8 L219.1 684.5 M225.6 670.5 L224.2 670.0 L222.9 669.3 L221.9 670.4 L222.0 671.9 L222.2 673.4 L223.5 674.0 L225.0 674.5 L226.4 675.0 L227.7 675.7 M219.4 680.8 L219.1 679.4 L220.1 678.3 L219.5 676.9 L220.3 675.6 L221.1 674.4 L220.0 673.4 L218.6 672.8 M227.8 678.1 L227.0 679.3 L225.5 679.6 L224.0 679.4 L223.3 678.1 L222.2 677.1 L221.3 678.3 M193.7 719.9 L195.2 720.0 L196.0 721.2 L195.8 722.7 L196.5 724.0 L197.3 725.3 L197.4 726.8 L196.7 728.1 L195.2 728.3 L193.7 728.1 L192.2 728.1 M212.1 693.6 L211.0 692.7 L211.1 691.2 L211.0 689.7 L211.9 688.5 L213.3 689.2 L214.2 690.3 L215.7 690.1 L215.4 688.7 M202.0 712.9 L200.7 712.3 L201.5 711.0 L200.1 710.3 L201.1 711.5 L201.1 713.0 L200.6 711.6 L199.1 711.4 L198.6 712.8 L197.4 713.7 M206.1 721.1 L206.0 722.6 L205.3 723.9 L204.2 724.9 L204.9 726.3 L204.2 727.6 L204.5 729.1 M187.9 717.6 L186.4 717.8 L186.3 719.3 L185.9 720.8 L187.2 720.0 L188.5 719.3 L189.8 720.0 L191.3 720.4 L192.6 719.7 L194.1 719.4 L195.4 720.2 L195.8 721.6 M199.1 711.3 L197.9 712.2 L196.7 713.1 L195.4 713.8 L196.4 714.9 L196.1 716.4 L196.8 717.7 L198.3 717.5 M225.0 669.0 L224.5 670.4 L223.0 670.7 L222.8 672.2 L223.9 673.3 L224.8 674.5 L225.8 673.4 L227.1 672.5 M208.7 694.1 L209.9 695.1 L208.4 695.4 L208.1 696.9 L207.3 698.1 L207.5 699.6 L207.8 701.1 L209.3 701.1 L208.6 702.4 M207.7 720.3 L206.4 721.1 L205.3 722.1 L205.1 723.6 L205.1 725.1 L206.5 725.5 L208.0 725.3 M188.9 716.5 L189.7 717.7 L191.0 718.4 L191.9 717.1 L193.3 716.5 L193.1 715.1 L192.0 714.1 L191.2 712.8 M210.5 685.5 L210.0 686.9 L211.5 687.1 L210.8 688.4 L210.9 689.9 L212.4 689.5 M214.6 678.4 L214.5 679.9 L213.5 681.0 L213.1 682.5 L214.1 683.6 L214.9 684.8 M221.3 672.0 L222.6 671.3 L223.9 670.5 L223.2 669.2 M223.6 696.2 L222.7 695.0 L223.2 696.4 L224.6 697.1 M214.9 678.9 L216.2 678.1 L215.4 676.8 L214.3 675.8 L212.8 676.1 L211.9 674.9 L211.2 673.6 L211.7 672.2 M195.2 705.2 L193.7 705.1 L192.5 706.0 M221.8 671.6 L221.1 672.9 L219.8 672.2 L218.5 671.4 L217.6 670.2 M212.8 707.5 L214.3 707.5 L215.8 707.3 L215.7 705.8 L215.5 704.4 L214.1 704.9 M188.0 722.5 L188.7 721.2 L190.0 720.4 L190.5 721.8 L190.9 720.3 L191.7 719.0 L190.8 717.9 L190.8 716.4 L189.3 716.2 L187.9 716.8 L186.5 717.1 M205.1 693.4 L205.3 691.9 L206.1 690.6 L207.6 690.6 L209.0 690.0 L210.3 690.8 M213.6 678.7 L212.2 679.4 L210.8 679.9 L209.9 678.7 L210.1 677.2 L208.7 676.7 M207.8 696.8 L208.5 695.5 L208.4 694.0 L209.9 693.7 L209.7 692.2 L208.2 692.0 L207.1 691.1 L207.4 689.6 M200.3 709.5 L201.6 710.3 L203.0 710.8 L204.4 711.2 L204.5 712.7 L203.7 714.0 L204.0 715.4 L203.3 716.7 L201.8 717.1 L200.4 717.5 M195.6 732.0 L197.1 732.0 L198.6 732.3 L199.7 731.3 L201.2 731.5 M197.3 704.6 L198.4 705.6 L198.7 707.1 L197.6 708.1 L196.1 708.5 L195.3 707.3 M215.7 688.7 L214.2 688.9 L212.7 688.9 L211.2 689.2 L209.9 688.5 L208.8 687.5 L207.4 686.9 M204.5 722.1 L205.7 721.2 L206.3 719.8 L207.4 720.8 L208.3 722.1 M209.3 676.8 L207.8 676.6 L206.5 677.3 L206.0 678.7 M225.5 678.5 L226.6 679.6 L226.2 681.1 L226.3 682.6 L226.3 684.1 L227.1 685.3 M194.9 710.3 L195.6 709.0 L196.8 708.2 L196.8 706.7 L196.8 705.2 L195.3 705.3 L193.8 705.1 L192.9 704.0 M207.3 692.5 L208.7 693.0 L208.4 694.5 L208.4 696.0 L209.5 696.9 L210.8 696.1 L212.1 695.5 L213.2 696.6 L213.8 697.9 L214.2 699.4 L215.2 700.5 L215.3 702.0 M217.6 673.5 L219.0 674.2 L217.5 674.6 L217.9 676.1 L219.4 676.3 L220.0 674.9 L221.5 675.0 L222.3 673.8 L223.8 673.5 L225.2 674.1 L226.3 675.1 L227.4 674.1 M201.4 700.7 L200.7 702.1 L200.3 703.5 L198.9 704.0 L197.4 704.2 L196.3 703.2 L194.9 703.9 M205.7 695.9 L207.0 696.7 L208.4 696.2 L209.9 695.9 L210.3 697.4 M209.3 721.3 L208.6 720.0 L207.1 719.9 L206.2 718.8 L205.1 717.7 L205.7 716.4 L206.9 715.5 M196.3 710.9 L196.2 712.4 L197.3 713.5 L198.2 712.3 L199.7 712.6 L199.6 714.1 L198.4 715.0 L197.0 715.5 L195.6 716.1 L194.2 716.4 L193.3 717.6 M205.6 681.8 L204.8 683.1 L203.9 684.3 M193.1 717.0 L193.9 718.3 L194.2 719.7 L192.8 719.2 L192.1 717.9 L192.8 716.6 L193.5 715.3 L192.0 715.4 L192.7 716.7 M200.6 701.6 L202.0 702.1 L202.4 703.5 L203.8 703.9 L202.5 703.3 L201.3 704.3 L200.1 705.2 L201.1 704.1 L201.5 702.6 L201.4 701.1 L199.9 701.2 M212.9 692.8 L214.1 691.9 L215.5 691.6 L217.0 691.7 L216.2 693.0 L215.4 694.2 L215.1 695.7 L216.6 696.0 L218.0 695.6 M222.7 697.2 L222.8 695.7 L223.0 694.2 L224.4 693.6 L225.6 692.7 M192.4 708.5 L191.3 709.5 L189.8 709.8 L188.6 710.6 L189.7 709.7 L190.1 711.1 L190.8 712.4 L191.9 713.4 L190.7 714.2 L192.0 714.9 L193.5 714.9 L194.2 716.2 M206.9 722.0 L208.4 721.7 L209.8 722.3 M220.4 683.8 L221.8 684.0 L223.2 684.6 L224.7 684.2 L224.8 682.7 L224.2 681.3 L223.0 680.4 L221.5 680.4 L221.4 681.9 L222.1 683.2 L221.3 684.4 L222.7 684.1 M195.7 716.7 L197.2 716.7 L196.3 715.5 L195.4 714.3 L196.9 714.0 L198.4 714.0 L198.9 715.4 L199.5 716.7 L200.0 715.3 L201.2 714.4 M203.2 717.3 L202.4 718.6 L200.9 718.7 L200.1 720.0 L198.7 720.4 L198.4 721.9 L197.3 722.9 L197.9 724.3 M223.1 677.8 L222.8 676.3 L221.8 675.2 L222.1 673.7 L221.6 675.1 L222.7 676.1 L222.3 677.6 M197.0 716.6 L198.2 715.8 L197.5 714.5 L196.5 715.6 L196.2 717.1 L196.9 718.4 L198.3 719.0 L196.9 719.5 L198.1 720.4 L199.6 720.4 L201.0 720.9 L202.4 720.5 M223.3 699.1 L224.7 698.7 M190.8 723.9 L190.0 722.6 L188.5 722.6 M211.7 707.3 L211.3 708.7 L210.9 710.2 L210.1 711.5 L210.2 713.0 L211.7 713.3 M194.9 712.9 L196.2 713.7 L196.7 715.1 L195.5 716.0 L194.2 716.7 L194.7 718.2 L195.7 719.2 M203.4 730.5 L204.5 731.6 M225.4 677.8 L226.9 677.9 L228.2 677.0 M200.4 726.0 L201.9 725.9 L202.8 727.2 L202.1 728.5 L202.8 729.9 L204.1 729.2 L205.3 728.4 M214.1 672.1 L215.6 672.2 L217.1 672.2 L216.9 673.7 L218.2 674.2 L219.7 674.3 L221.2 674.5 L221.1 676.0 L219.8 675.4 L218.4 675.8 L218.4 677.3 M217.0 691.0 L218.4 691.5 L219.4 690.4 L220.9 690.1 L220.7 691.6 L222.1 692.0 L223.6 692.3 L225.0 691.9 L226.5 691.9 M206.3 717.1 L206.1 715.6 L205.6 714.2 L206.2 712.8 L205.7 711.3 L204.7 710.3 L205.2 708.9 L205.3 707.4 M206.7 685.0 L208.1 685.5 L209.1 686.6 L208.2 687.8 L206.8 688.3 L207.5 689.6 L207.9 691.0 L209.4 691.4 L210.9 691.3 L212.4 691.4 M214.7 690.8 L215.6 689.6 L216.9 688.8 L218.2 688.0 L219.2 689.2 M197.8 707.1 L199.1 707.9 L199.3 709.3 L199.7 710.8 L200.6 712.0 L200.6 713.5 L199.5 714.6 L198.1 714.9 L197.2 716.1 L196.0 715.3 L194.8 714.4 M208.6 713.9 L208.3 715.4 L207.7 716.7 L207.2 718.1 L207.1 719.6 L205.8 719.0 L206.1 717.6 L207.5 717.0 L207.9 715.5 L208.5 716.9 L208.5 718.4 M200.4 727.6 L199.0 727.9 L198.7 729.4 L200.1 730.1 L200.7 731.4 L202.2 731.7 L203.0 733.0 L202.0 734.1 M206.3 692.9 L207.5 691.9 L207.9 693.4 L208.8 694.6 L210.2 694.0 L211.5 693.2 L212.9 693.6 M196.5 710.4 L195.1 709.9 L193.8 709.2 L192.3 709.2 L191.7 707.8 M210.6 674.5 L210.0 675.9 L210.5 677.3 L211.5 678.5 L212.3 679.7 L213.6 680.4 L215.0 679.8 L215.4 678.3 L213.9 678.1 L212.4 677.7 M207.1 706.1 L206.2 707.3 L205.3 708.6 L206.6 709.4 L207.8 710.3 L207.8 711.8 L207.1 713.1 L205.7 713.5 L204.6 712.6 L204.7 711.1 L204.8 709.6 L203.7 710.5 M210.7 684.9 L209.7 686.0 L209.4 687.4 L210.3 688.6 L210.3 690.1 L211.3 691.3 L211.0 692.7 L212.3 693.4 L213.6 694.1 L215.0 693.4 M218.5 687.3 L217.3 686.5 L216.3 687.7 L216.8 689.1 L216.0 690.3 L214.5 690.2 L213.5 689.2 L212.8 687.9 L214.1 688.5 L215.1 687.4 L214.9 685.9 L213.4 685.4 M215.5 704.8 L214.2 705.5 L214.0 707.0 L215.2 707.9 L213.7 708.0 L212.8 706.8 L212.8 705.3 L212.2 703.9 L211.4 702.7 L210.1 701.9 M210.6 694.7 L212.0 694.1 L213.3 694.8 L214.6 695.5 L214.9 697.0 L215.0 695.5 L213.7 694.9 L214.7 693.8 M193.6 728.2 L194.0 729.6 L195.4 729.2 L194.3 728.2 L193.2 729.3 M203.9 705.8 L204.0 704.3 L203.9 702.8 L203.7 701.3 L204.3 699.9 L204.4 698.4 M221.2 698.4 L221.5 697.0 L222.5 695.9 L224.0 695.8 L224.1 697.3 M208.6 722.4 L208.8 723.8 M208.5 696.6 L210.0 696.9 L211.1 695.8 L212.4 695.0 L213.8 695.5 L213.2 694.1 L211.9 693.4 L211.8 691.9 L212.1 690.4 M208.4 717.8 L207.1 718.6 L205.7 719.1 L205.1 717.7 L206.6 717.8 L207.8 718.7 L207.7 720.2 M209.0 704.7 L208.1 705.9 L209.3 706.9 L210.3 708.0 L210.4 709.5 L211.6 710.4 L213.1 710.5 M210.7 675.1 L212.2 674.8 L213.1 673.6 L213.6 672.2 L215.1 672.7 L216.5 672.2 L216.4 673.7 L217.6 674.5 L219.1 674.8 L219.7 676.2 L220.7 677.3 M205.1 681.4 L204.9 682.9 L203.7 683.8 M201.4 721.3 L199.9 721.0 L200.0 719.5 L199.8 718.0 L198.5 717.2 L197.7 716.0 L197.1 714.6 L198.0 713.4 M207.8 696.3 L207.4 694.8 L207.0 693.4 L205.7 692.6 L205.6 691.1 L205.8 689.7 M201.5 703.1 L200.4 704.0 L198.9 703.8 L197.4 703.4 L196.9 702.0 M205.1 698.2 L206.5 698.0 L207.8 698.8 L208.8 700.0 L209.1 701.4 L209.9 702.7 L210.5 704.1 L210.6 705.6 M209.3 708.9 L207.9 708.3 L207.5 709.7 L206.8 708.4 L205.8 709.5 L204.4 709.9 M211.3 681.0 L212.5 681.9 L212.9 683.3 L212.8 684.8 L211.7 683.8 L210.2 683.5 L210.2 682.0 L211.5 681.2 L212.5 680.1 L211.1 679.4 L211.9 678.1 L210.6 677.3 M218.5 673.5 L219.8 674.3 L220.0 672.8 L221.3 672.1 L220.0 672.8 L218.6 673.4 L218.8 674.9 L217.5 674.2 M219.5 681.4 L221.0 681.3 L222.2 682.2 L221.2 683.3 L219.7 683.3 L219.4 684.8 L220.9 684.8 L221.9 683.7 L223.3 684.1 M209.7 704.1 L211.1 704.8 L212.5 704.5 L213.5 703.3 L213.7 701.8 L214.7 700.8 L215.9 699.8 L215.3 698.5 M212.6 713.0 L211.7 711.8 L211.4 710.4 L210.7 709.0 L211.2 707.7 L212.4 706.7 L213.3 707.9 L213.4 709.4 L214.3 710.6 M205.3 715.5 L204.3 714.3 L203.5 715.6 L202.0 715.8 L200.6 715.2 L199.5 716.1 M223.5 696.7 L225.0 696.6 M198.9 718.6 L198.6 717.2 L197.2 716.6 L196.2 717.7 L194.7 718.2 L193.3 717.8 L191.8 717.8 L190.9 716.6 M217.8 693.4 L217.2 694.8 L218.7 695.1 L220.1 695.6 L219.8 697.1 L218.6 698.0 L217.7 699.2 L216.9 697.9 L215.4 698.2 L215.5 699.7 L214.7 701.0 M206.8 692.1 L205.8 691.0 L206.0 689.5 L204.6 690.2 L203.3 689.6 L203.9 688.3 L205.4 688.6 L206.1 690.0 L206.8 691.3 L207.9 692.3 L208.1 693.8 M208.3 694.2 L206.9 694.7 L205.4 695.2 L204.6 696.4 M208.2 680.4 L208.8 681.8 L209.6 683.1 L210.4 684.4 L211.6 685.3 L212.2 686.7 M206.7 678.9 L207.3 677.5 L208.6 676.7 L209.7 675.7 L211.2 675.4 L212.1 676.5 L213.5 677.1 L212.9 678.5 L214.4 678.2 L214.4 676.7 L213.2 675.9 M213.0 706.0 L212.9 704.5 L213.9 703.4 L212.7 702.5 L213.0 701.0 M221.2 673.3 L220.1 674.3 L218.6 673.9 L217.9 675.2 L216.8 674.2 L216.4 672.7 L215.3 671.8 M209.5 673.6 L208.5 674.7 L208.1 676.1 L206.9 677.0 L205.5 677.5 L205.0 679.0 L205.6 680.3 L205.2 681.8 M193.8 720.1 L192.4 720.7 L192.4 722.2 L193.9 722.3 L193.2 720.9 L194.4 720.0 L195.4 718.9 L195.5 717.4 L195.2 715.9 L193.7 716.1 L192.3 715.8 L192.4 714.3 M203.4 690.9 L204.2 689.6 L202.7 689.6 M213.3 677.8 L214.5 676.8 L215.8 677.6 L216.7 676.5 L216.8 675.0 L216.7 673.5 L216.2 674.9 L217.0 676.2 L217.8 674.9 L219.2 675.4 L220.4 674.7 M218.3 684.9 L217.8 686.3 L216.7 687.3 L215.2 687.1 L213.8 687.5 M197.8 708.3 L196.9 709.5 L195.4 709.9 L194.0 709.5 L194.8 708.2 M206.9 708.0 L207.2 706.5 L205.8 705.9 L205.2 704.5 L203.8 705.0 L202.3 705.3 L203.8 705.6 L204.6 704.4 M212.7 702.9 L214.2 703.1 L214.8 704.4 L214.4 705.9 L215.0 707.2 L216.3 708.0 L217.3 706.9 L218.8 706.8 M201.6 700.1 L201.1 701.5 L200.3 702.8 L199.9 701.3 L200.9 700.1 L202.3 699.7 L203.8 699.9 L204.2 701.3 L205.6 701.7 M206.5 709.4 L205.1 708.9 L204.2 710.0 L203.8 711.4 L204.9 712.4 L206.0 713.4 L207.5 713.5 L207.5 712.0 L206.0 712.2 L205.5 710.8 L204.9 709.4 L203.9 708.3 M211.7 707.6 L212.6 706.4 L213.8 705.6 L213.9 704.1 L214.7 702.9 L216.0 702.1 M220.4 673.5 L219.2 672.6 L217.9 673.5 L217.2 674.8 L216.2 675.9 L216.0 674.4 L216.9 673.2 L218.3 673.8 L219.8 674.1 M197.2 710.1 L196.9 708.7 L198.1 707.8 L199.2 706.8 L200.6 707.3 L199.8 708.5 L198.9 709.7 L197.9 710.9 L197.5 712.3 L198.0 713.7 L198.3 715.2 L199.2 716.4 M214.1 678.7 L212.7 679.4 L211.2 679.6 L211.0 681.1 L211.8 682.4 L210.4 682.9 L209.5 681.7 L208.0 681.5 L207.0 680.4 L205.5 680.2 M196.7 718.1 L197.8 717.0 L198.8 715.9 L199.9 714.9 L201.0 713.8 L200.5 712.4 L201.3 711.2 L202.8 711.0 L203.3 712.4 L201.9 712.9 M190.9 713.2 L189.6 713.8 L188.8 715.2 L190.1 716.0 L191.6 716.2 L190.1 716.1 L188.7 715.5 L187.8 716.8 L187.4 718.2 L188.4 719.3 L189.8 719.8 M201.3 725.7 L200.4 726.9 L201.5 728.0 L202.8 727.1 L201.9 725.8 L200.9 724.7 L200.5 723.3 L199.9 721.9 L200.2 720.4 L201.5 719.8 M197.0 718.5 L196.7 717.0 L196.3 715.6 L197.0 714.2 L197.2 712.7 L198.2 711.7 M206.4 683.4 L206.5 684.9 L206.1 686.3 L205.1 687.5 L205.6 688.9 L205.6 690.4 L205.2 691.8 L206.7 691.6 L205.5 690.8 M208.7 682.7 L210.0 681.9 L211.4 682.2 L212.2 680.9 L213.6 681.4 L213.8 682.9 M203.0 716.1 L201.5 716.4 L201.4 717.9 L200.4 716.8 L199.0 716.1 M214.7 708.5 L213.2 708.4 L211.7 708.4 L210.2 708.6 L209.8 707.1 L208.4 706.8 M196.2 723.8 L197.6 724.0 L199.0 724.7 L198.0 725.8 L197.7 727.3 L199.2 727.2 L199.4 725.7 L197.9 725.8 M210.2 681.9 L209.6 680.5 L208.9 679.2 L208.5 677.7 L208.5 676.2 L209.1 674.9 M189.5 717.8 L188.3 717.0 L186.8 716.6 L185.9 717.8 L184.6 718.6 M205.7 703.7 L206.7 704.8 L205.8 706.0 L207.1 705.3 L207.9 704.0 L208.3 702.6 L207.2 701.6 L207.4 700.1 L207.9 698.7 L207.7 697.2 L206.3 697.7 M214.6 697.7 L213.4 698.6 L212.8 697.3 L213.9 698.3 L215.4 698.6 L215.8 700.1 L214.4 700.6 L213.7 699.2 L212.8 698.0 L211.5 698.7 L210.7 700.0 L212.2 700.1 M219.2 679.9 L217.8 680.1 L216.3 679.8 L216.3 678.3 L217.8 678.2 L218.8 679.3 L220.3 679.4 L221.7 678.9 L222.5 680.2 L224.0 680.6 L225.4 681.1 L224.8 682.4 M210.1 678.9 L209.1 680.0 L209.1 681.5 L209.9 682.8 L210.9 684.0 L212.2 683.3 M217.0 680.1 L217.6 681.4 L219.1 681.7 L220.4 681.0 L220.9 679.6 L220.8 678.1 M209.2 710.9 L210.4 711.8 L210.6 713.3 L210.1 714.7 L210.7 716.0 M206.1 699.7 L207.3 698.8 L207.8 700.2 L207.4 701.6 L208.5 702.5 L209.5 701.4 L210.9 702.0 L212.2 701.2 L213.7 701.6 L215.1 701.4 L214.3 702.6 M205.9 679.1 L207.1 678.3 L207.9 679.6 L208.9 680.7 L207.8 681.8 L207.0 683.0 L205.7 682.3 L205.1 681.0 M208.4 678.0 L209.5 679.0 L210.6 680.0 L212.0 679.5 L213.5 679.7 L214.5 680.8 L214.8 682.3 L215.7 683.5 L216.4 684.8 L217.1 686.1 L215.8 686.8 L215.5 688.3 M214.0 707.4 L213.5 708.7 L212.0 708.3 L212.1 709.8 L210.9 710.8 L209.4 710.9 L208.2 710.1 L207.5 711.4 M198.1 722.1 L196.9 723.0 L197.8 721.8 L198.3 720.4 L196.9 720.0 L196.8 718.5 L198.0 717.6 L198.8 716.4 M205.1 704.3 L206.2 703.3 L207.3 702.2 L208.6 701.5 L209.2 700.1 L209.5 698.6 L210.7 697.8 L211.9 696.9 L212.9 695.7 L213.5 694.4 L214.1 693.0 L212.6 693.1 M188.6 724.1 L188.9 722.7 L187.5 722.1 L186.4 721.2 M209.0 694.3 L207.7 693.6 L207.1 692.2 L205.6 692.2 L204.7 691.1 L206.1 691.3 L207.1 692.5 L207.9 693.7 L208.5 695.1 L209.9 695.4 L211.2 696.2 M222.6 677.3 L221.1 677.2 L220.0 676.1 L219.0 677.2 L217.9 678.3 L218.8 679.5 L217.3 679.6 L218.1 678.4 L219.6 678.5 L218.7 679.7 M212.6 686.6 L211.6 685.4 L210.5 686.5 L209.6 687.6 L209.8 689.1 L210.3 690.5 L211.8 690.6 M193.5 715.0 L193.3 713.6 L194.1 712.3 L193.3 711.0 L192.8 709.6 L194.3 709.2 L195.4 710.2 L194.2 711.0 L194.5 712.4 L195.7 713.3 L196.6 714.5 M221.0 670.7 L222.3 671.4 L221.4 672.5 L221.1 674.0 L222.5 674.4 L223.5 675.6 M197.3 719.4 L195.8 719.3 L194.8 718.2 L193.9 717.0 L192.6 717.6 M209.9 682.9 L209.4 681.4 L210.3 680.2 L209.7 678.8 L208.3 679.4 L206.9 680.0 L206.0 681.2" fill="none" stroke="#000" stroke-width="1.15" stroke-linecap="square"/>
<path d="M149.63 721.63 L154.9 716.36 L158.42 719.88 L165.45 726.91 L174.24 730.42 L181.27 737.45 L186.54 742.72 L183.02 748.0 L174.24 749.75 L168.96 755.03 L161.93 758.19 L157.54 758.19 L156.66 748.0 L157.54 740.97 L151.39 730.42Z" fill="#004364"/>
<path d="M159.3 728.8 L160.3 729.9 L159.6 731.3 L159.4 732.7 L158.1 733.6 L156.7 734.0 L155.7 735.1 L154.3 734.8 M155.2 734.5 L155.2 733.0 L155.0 731.5 L155.7 730.1 L155.4 728.7 M162.4 737.7 L162.1 736.3 L163.0 735.1 L163.3 736.5 L164.7 735.8 L163.6 734.8 L162.6 736.0 L161.1 735.9 L159.7 735.6 L159.3 734.2 L160.2 732.9 L161.3 731.9 M164.6 738.0 L163.4 738.9 L162.8 740.2 L161.8 741.4 L161.2 740.0 L159.7 739.6 L158.8 740.8 L158.7 742.3 L157.4 742.9 M163.8 757.1 L162.9 755.9 L161.6 755.1 L160.2 755.5 L158.8 754.9 L157.4 754.6 M167.7 742.3 L166.2 742.3 L165.1 743.4 L163.7 743.8 L162.3 744.3 L162.5 745.8 L163.9 746.4 L162.8 747.4 M160.6 755.1 L160.7 753.7 L159.7 752.5 L158.6 751.6 L157.1 752.0 M164.0 731.7 L162.6 732.2 L161.9 733.5 L162.3 734.9 L163.7 735.5 L164.1 734.0 L164.0 732.6 L164.5 731.2 L166.0 730.9 L167.3 731.6 M157.3 739.9 L158.6 740.8 L159.9 740.0 L161.2 740.8 L162.5 740.0 M163.9 735.0 L165.3 734.5 L166.0 733.2 L165.8 731.7 L164.8 730.6 L163.6 731.4 L163.2 732.9 M159.1 735.8 L157.7 735.4 L156.9 734.1 L155.4 734.1 L155.9 732.7 L156.0 731.2 M162.9 745.5 L164.4 745.5 L165.9 745.6 L167.3 745.1 L168.8 745.1 L169.9 746.2 L170.0 747.7 L170.2 749.2 L171.7 749.1 L172.5 747.8 M175.9 747.2 L177.2 746.6 L178.4 745.6 L179.8 746.1 L180.5 747.4 M168.7 744.7 L169.6 745.9 L170.4 747.2 L171.8 746.7 L172.7 747.9 L172.3 749.4 L173.6 750.2 M159.6 746.3 L159.2 747.7 L157.8 748.2 M167.6 753.7 L168.9 752.9 L170.4 752.9 L171.6 752.0 M179.1 742.1 L180.6 741.9 L179.6 740.8 L178.3 740.0 L178.8 738.6 L179.5 737.3 M155.9 722.8 L155.2 721.5 L153.8 722.0 L154.6 720.8 L156.1 720.5 L157.3 719.5 L155.9 719.0 M155.9 731.4 L157.4 731.2 L158.6 730.4 L157.4 731.2 L157.6 729.7 L159.0 729.2 L159.9 728.0 L161.4 727.8 L160.1 727.1 M184.3 742.2 L184.9 743.6 L184.1 744.9 M159.9 733.9 L158.8 734.9 L159.5 736.2 L160.7 737.1 L162.2 736.7 L162.1 735.2 L163.4 735.7 M156.3 728.9 L156.8 727.5 L157.9 726.5 L157.0 725.3 L155.8 724.5 L154.5 725.3 L153.8 726.6 L155.1 727.4 L155.7 726.1 L154.8 724.9 L153.3 724.6 L151.8 724.8 M159.1 734.7 L159.8 736.1 L159.3 737.5 L159.9 738.9 L158.5 739.4 L157.0 739.1 M161.1 746.7 L161.6 748.1 L161.6 749.6 L161.2 748.2 L160.3 747.0 L161.1 745.7 L162.0 744.5 L163.2 743.7 M176.5 741.6 L177.9 742.1 L177.3 743.4 L175.9 744.0 L174.4 743.8 L173.4 744.9 L172.4 743.8 L173.5 742.7 M170.0 742.8 L168.6 742.3 L167.2 741.9 L166.0 740.9 L165.5 739.5 L164.4 738.5 L163.2 739.4 M163.2 726.5 L161.8 727.0 L162.7 728.2 L163.4 729.6 L163.5 731.1 L164.8 731.7 L166.0 732.6 L167.3 731.9 L168.4 732.9 L169.9 733.1 L171.3 733.5 L172.1 734.7 M164.8 749.0 L165.5 750.3 L166.1 751.7 L164.6 751.5 L163.1 751.7 L162.6 753.1 L164.1 753.3 L164.4 754.8 L164.7 756.2 L163.6 757.2 L162.1 757.5 M176.1 735.4 L175.3 736.7 L173.8 736.5 L173.3 737.9 L171.9 737.4 L172.1 735.9 L173.5 735.3 L174.8 734.5 L176.2 734.1 M157.2 725.6 L155.8 726.3 L154.6 727.1 L153.3 728.0 L151.8 728.1 L152.3 729.5 L152.9 730.9 L153.3 732.4 M158.4 723.5 L157.9 722.1 L156.5 721.8 L155.3 722.7 L153.8 722.9 L154.3 721.4 L155.3 720.3 L156.6 719.6 M161.6 758.2 L160.5 757.2 L159.7 755.9 L158.2 755.9 M165.8 742.5 L166.3 741.1 L167.6 740.2 L169.1 740.3 L170.4 739.7 L171.8 739.2 L173.0 738.3 L173.1 736.8 L172.5 735.4 M174.6 740.2 L174.0 738.8 L173.5 737.4 L173.5 735.9 L172.3 735.1 L173.3 736.2 L174.8 736.4 M166.3 752.0 L165.5 750.7 L164.2 750.0 L162.8 750.7 L164.1 751.4 L165.1 750.3 L165.2 748.8 L163.9 748.0 M168.7 742.0 L168.7 740.5 L167.3 739.8 L166.8 741.2 L168.1 742.0 L169.4 741.3 L170.8 741.8 L172.3 742.0 L173.7 741.4 L175.1 741.7 L176.4 742.4 M164.6 738.1 L163.1 738.2 L164.6 738.4 L165.9 737.6 L167.3 738.1 L168.8 737.9 L170.3 738.1 M167.2 740.3 L168.6 740.6 L170.0 741.1 L170.9 742.3 L170.1 743.6 L168.6 743.8 L167.1 743.5 M160.3 745.3 L161.0 744.0 L160.5 742.6 L159.7 741.3 L159.6 739.8 L159.0 741.2 L160.1 742.2 L160.9 743.5 L162.2 744.3 L163.6 743.7 L164.4 742.4 M153.8 722.7 L152.9 723.9 L152.7 725.4 L151.8 726.6 L151.6 728.1 M163.2 751.6 L162.5 750.2 L161.1 749.8 L160.8 751.3 L160.1 752.6 M171.5 729.5 L172.4 730.7 L173.1 732.0 L173.9 733.2 L174.9 732.1 L176.0 733.1 L176.7 734.4 L175.5 735.3 L174.4 734.4 L173.1 733.6 M159.1 748.3 L160.2 749.4 L161.2 750.5 L162.6 750.9 L163.8 751.8 L165.3 751.7 L166.3 750.6 M177.4 746.2 L177.0 744.7 L177.5 743.3 L178.7 742.5 L179.3 743.8 L179.0 745.3 M174.1 748.1 L174.7 749.5 L176.1 749.1 M158.8 741.2 L160.1 740.5 L159.2 739.3 L158.0 738.4 L158.9 737.3 L158.2 735.9 L156.8 735.7 L157.3 734.3 L155.8 734.5 L154.6 733.7 L153.9 732.3 M169.4 748.6 L170.8 749.0 L172.3 749.0 L173.4 748.0 L172.5 746.8 L173.9 746.2 L175.3 745.9 L174.5 744.6 L173.1 744.3 L171.9 743.3 L171.2 742.0 M164.3 754.4 L165.8 754.3 L165.2 755.6 L164.4 756.9 L163.6 755.6 M163.0 737.8 L161.5 738.2 L160.4 739.3 L160.9 740.7 L159.4 740.7 M162.1 743.6 L162.0 745.0 L162.5 746.5 L164.0 746.5 L165.1 747.5 L166.6 747.5 L167.7 748.6 L166.8 749.8 L166.5 751.3 L167.2 752.6 M169.1 729.3 L168.1 730.4 L166.7 731.1 L165.3 730.8 L164.0 731.5 L163.3 732.9 L162.6 734.2 L162.9 735.6 L162.9 737.1 M169.8 742.7 L171.1 743.4 L170.0 744.4 L168.5 744.0 L167.7 745.2 L168.2 746.6 L166.7 746.4 M154.2 733.2 L155.1 732.0 L156.6 731.9 L155.8 730.6 L154.3 730.4 L153.5 729.1 L154.5 728.0 L154.5 726.5 L155.0 725.1 L156.3 725.8 M159.1 733.1 L160.1 734.2 L161.6 734.1 L160.3 734.9 L159.7 736.2 M165.1 748.5 L165.0 747.1 L166.5 747.2 L165.5 746.1 L164.4 745.0 L162.9 744.9 L164.4 745.4 L165.4 746.4 M160.4 721.9 L161.5 723.0 L162.5 724.1 M169.9 745.7 L170.6 747.0 L171.1 745.6 L171.6 744.2 L171.2 742.7 L170.2 741.7 L169.0 742.6 L167.8 743.5 L166.9 744.7 M174.2 742.1 L175.6 742.6 L176.8 741.7 L178.2 741.2 L178.9 739.8 L177.5 740.3 L176.3 739.4 L175.7 740.8 L175.5 742.3 L175.1 743.7 M163.3 755.2 L161.8 755.5 L160.5 754.8 L159.4 753.8 L159.8 752.3 L161.3 752.6 L162.5 753.5 L162.0 752.1 L160.8 752.9 M154.5 727.0 L153.1 727.3 L152.1 726.2 L152.7 724.8 L152.9 723.3 L153.9 722.2 L153.1 720.9 L151.6 721.0 M161.8 749.8 L161.0 748.5 L160.6 750.0 L161.8 751.0 L163.2 751.1 L164.0 752.4 L165.4 752.2 L166.3 750.9 L166.7 749.5 L168.2 749.6 L168.3 748.1 L166.8 747.9 M159.8 748.4 L160.4 749.8 L160.8 751.2 L160.5 752.7 L159.1 752.4 L157.6 752.1 M166.9 736.7 L166.2 738.1 L165.5 739.4 L164.3 740.3 L162.8 740.0 L161.5 739.2 L160.0 739.1 L158.7 738.5 L157.3 737.9 L155.9 737.6 M157.0 737.8 L157.6 736.4 L159.0 736.8 L157.7 736.2 L156.2 736.2 L156.0 734.7 L156.5 733.3 L156.0 731.8 L154.6 731.3 M160.5 735.7 L161.3 737.0 L162.8 736.8 L164.2 736.3 L164.8 737.7 L165.0 739.2 L164.6 740.7 L163.1 740.6 L161.6 740.9 L160.2 741.4 M164.7 752.6 L166.1 753.0 L166.5 754.5 L166.3 756.0 L164.8 755.9 L163.8 757.0 M164.9 727.6 L166.4 727.4 L167.6 728.2 M157.8 756.1 L158.0 757.6 M156.7 733.7 L158.1 734.2 L156.6 734.2 L157.0 732.8 L157.9 731.6 L158.9 732.8 L159.7 734.0 L159.0 735.3 L159.4 736.8 M159.4 755.1 L158.0 754.8" fill="none" stroke="#000" stroke-width="1.15" stroke-linecap="square"/>
<path d="M114.48 748.0 L119.75 742.72 L126.78 740.09 L132.06 741.85 L137.33 744.48 L142.6 746.24 L146.99 751.51 L146.12 758.19 L114.48 758.19Z" fill="#004364"/>
<path d="M140.5 750.6 L140.4 749.1 L140.0 747.7 L138.5 747.3 L139.6 748.3 L140.3 749.7 L141.5 750.6 M128.5 750.7 L127.8 749.4 L127.8 747.9 L127.4 746.4 L128.5 745.4 L129.4 744.2 L130.2 743.0 L131.3 744.0 M124.2 745.8 L124.4 747.3 L125.0 748.6 L125.9 749.8 L125.3 751.2 L126.1 752.4 L127.3 753.4 L127.1 754.9 L126.1 756.0 L125.0 757.0 M124.2 753.5 L122.8 753.0 L122.6 754.5 L122.1 755.9 L120.7 756.5 L119.8 757.7 M139.1 756.0 L140.1 757.1 M119.2 752.7 L118.1 753.7 L117.1 754.8 L117.4 756.3 L117.3 757.8 L118.0 756.5 L119.4 755.9 L120.9 756.2 L120.8 754.7 L120.8 753.2 L119.5 752.5 M145.8 751.4 L144.3 751.2 L143.0 750.5 L141.5 750.8 L141.5 749.3 L140.1 748.9 L138.9 748.0 L137.6 748.7 L136.8 747.4 M118.6 745.5 L118.9 744.0 L120.3 743.3 L121.7 743.7 L121.7 745.2 L121.1 746.6 L121.6 748.1 L123.0 748.6 L124.3 747.9 L125.1 749.1 L126.3 748.3 L126.8 746.9 M136.2 749.6 L136.2 751.1 L136.2 752.6 L134.7 752.9 L133.5 752.0 L132.5 750.9 L131.2 750.2 L130.2 749.1 L128.9 748.3 L128.7 746.9 M138.6 747.1 L137.1 747.4 L135.6 747.2 L137.1 746.9 L137.3 748.3 L135.8 748.5 M117.5 750.0 L116.0 749.8 L115.8 748.3 L117.1 747.5 L116.5 746.1 M130.1 746.3 L129.0 747.2 L127.6 747.9 L127.5 746.4 L128.4 745.3 L129.6 746.2 L130.9 745.4 L132.0 744.3 L131.9 742.8 M131.1 747.4 L129.6 747.4 L128.4 746.6 L129.9 746.8 L131.3 746.5 L132.4 745.5 M125.5 744.2 L124.9 742.8 L124.4 741.4 M136.2 756.1 L137.5 755.4 L138.9 754.8 L139.4 753.4 L139.1 751.9 M120.1 754.0 L121.1 752.9 L121.9 751.6 L123.4 751.4 L124.7 752.3 L123.5 753.2 M122.2 752.2 L120.8 751.7 L120.7 750.2 L122.0 749.5 L123.4 749.1 L123.6 750.6 M140.0 749.4 L141.3 750.0 L139.9 750.6 L138.9 749.5 L140.4 749.5 L141.9 749.5 L143.2 748.9 M139.5 752.5 L138.1 752.0 L138.9 750.7 L138.7 749.2 L139.9 748.4 L140.3 747.0 L139.3 745.9 L137.8 745.9 M134.5 754.3 L133.0 754.2 L131.9 753.2 L133.1 752.4 L134.5 751.9 L136.0 751.8 L137.4 751.2 L136.6 750.0 L136.9 748.5 L135.5 748.7 M142.6 756.0 L143.3 754.6 L144.4 753.6 L144.7 752.1 L144.7 750.6 L144.8 749.1 M119.7 748.9 L119.4 750.4 L119.3 751.9 L120.8 752.3 L120.8 753.8 L119.3 754.1 M132.8 745.2 L134.3 745.0 L135.5 744.1 L134.2 743.3 L132.7 742.9 L131.3 742.7 L129.8 742.4 L129.2 743.7 M128.0 753.0 L126.9 752.0 L125.7 751.0 L124.2 750.9 L124.8 749.5 L125.7 748.3 M133.3 752.7 L131.8 752.9 L130.3 752.9 L129.0 752.0 L127.7 751.3 L129.2 751.1 L130.4 750.2 L131.9 750.4 L133.3 750.9 M120.9 751.0 L119.5 751.3 L118.0 751.6 L117.5 753.0 L118.1 754.3 L117.9 755.8 L116.4 756.3 M130.7 751.1 L129.3 750.5 L129.0 749.1 L129.6 747.7 L130.0 746.3 M136.0 746.0 L137.4 746.7 L137.9 748.1 L136.4 747.8 L134.9 747.8 L133.4 748.0 M131.1 755.1 L132.5 754.7 L133.1 753.3 L134.4 754.0 L135.2 755.3 L136.5 755.9 L137.7 756.9 L138.5 755.6 L138.4 754.1 L139.8 754.6 M116.1 747.3 L114.9 748.2 L114.6 749.7 L116.1 749.6 L117.1 748.4 L118.6 748.6 L119.9 747.9 L121.2 748.8 L120.2 749.9 L119.2 751.0 L119.9 752.3 M136.5 751.5 L137.4 750.3 L138.8 749.8 L139.9 748.7 L141.2 748.0 L142.0 746.8 M122.5 744.1 L121.0 744.3 L119.8 743.4 M138.2 750.8 L139.7 751.2 L140.9 752.1 L142.4 751.9 L143.1 753.3 M122.4 751.0 L123.9 751.0 L124.9 749.9 L124.2 748.6 L125.6 748.1 L125.7 746.6 L126.0 745.1 M130.6 747.8 L129.7 746.6 L130.2 745.1 L129.3 743.9 L129.5 742.4 M129.7 745.0 L128.3 744.8 L126.9 744.2 L125.6 743.4 L126.1 742.0 L125.4 740.6 M116.3 757.2 L115.6 755.9 L117.1 755.6 L118.5 756.1 L120.0 756.3 L121.4 755.7 L122.5 754.8 L124.0 755.2 L125.5 755.1 L126.1 756.5 M116.9 750.9 L116.6 749.4 L115.5 750.4 M126.5 744.9 L126.2 746.3 L126.4 747.8 L127.8 748.4 L127.4 749.8 L126.7 751.1 M119.5 749.0 L119.5 747.5 L120.6 746.5 L121.9 747.3 L122.5 748.6 L121.9 750.0 L122.5 751.4 L121.1 751.9 M139.9 746.8 L138.8 745.8 M137.3 747.0 L135.9 746.7 L135.6 745.2 L134.2 744.8 L133.6 746.2 L132.9 747.5 L133.9 748.7 M116.2 747.0 L117.5 746.3 M140.9 751.2 L139.6 751.9 L138.7 753.2 L139.2 754.6 L140.2 755.7 L140.6 757.1 M130.8 752.9 L129.3 753.0 L128.8 751.5 L129.9 750.5 L131.1 751.4 L132.4 752.2 L133.7 752.8 L134.0 754.3 L134.9 755.5 L134.5 757.0 L133.2 757.7 M130.7 744.9 L132.0 744.1 L133.3 743.3 M131.6 743.0 L131.5 744.5 L130.1 745.1 L130.5 746.5 L132.0 746.1 L133.4 746.6 L134.8 747.1 L135.6 745.8 L136.0 744.4 M127.5 752.9 L128.9 753.1 L129.9 754.3 L129.1 755.6 L127.7 755.0 L127.2 753.6 L125.7 753.8 L124.6 752.7 M127.5 755.9 L126.3 755.0 L125.5 753.8 L126.9 753.3 L128.4 753.1 M131.3 742.8 L131.9 744.1 L132.2 745.6 L130.8 745.0 L129.3 745.1 L127.8 745.1 L126.3 745.4 L125.0 744.7 L124.0 745.8 L123.9 747.3 L124.0 748.8 L123.1 750.0 M114.6 754.4 L115.4 755.7 M131.3 756.9 L132.1 755.6 L132.5 754.2 L133.4 753.0 L134.2 751.7 L133.2 750.6 L133.9 749.3 L134.9 750.3 L136.3 751.0 L137.2 752.2 L137.7 753.6 M142.2 755.0 L141.0 754.1 L139.5 753.8 L138.0 753.7 L137.3 752.4 L135.8 752.3 L134.4 752.8 L133.4 753.9 L134.8 754.5 L134.4 755.9 M140.6 755.9 L139.4 755.1 L138.1 755.7 L136.7 756.4 L136.5 754.9 L137.7 754.0 L136.2 754.0 M145.6 753.0 L144.1 753.0 L142.9 752.1 L141.5 752.7 L140.0 752.8 L138.9 751.8 L138.5 750.4 L138.7 748.9 L137.9 747.6 L138.0 746.1" fill="none" stroke="#000" stroke-width="1.15" stroke-linecap="square"/>
<path d="M82.85 740.97 L89.0 740.97 L95.15 743.6 L100.42 746.24 L105.69 750.63 L106.57 758.19 L82.85 758.19 L77.57 749.75Z" fill="#004364"/>
<path d="M95.2 747.5 L93.7 747.3 L92.3 746.7 L91.1 745.8 L92.2 744.7 L93.6 744.2 L95.1 744.4 M88.3 757.7 L89.3 756.6 L89.0 755.1 L87.8 754.2 L86.3 754.3 L84.9 753.9 M81.4 749.5 L80.7 750.8 L79.2 751.1 L80.4 752.0 L81.8 752.4 L83.1 753.1 L83.8 751.7 L85.3 751.6 L86.8 751.9 L87.2 753.3 L86.2 754.4 M97.2 749.2 L96.1 750.2 L95.2 751.4 L93.7 751.6 L92.7 750.5 L91.2 750.5 L90.0 751.4 L89.9 752.9 L90.7 754.1 M89.0 746.3 L89.8 745.0 L90.6 743.7 L91.7 742.7 M95.6 745.1 L95.1 746.5 L94.1 745.4 L92.7 744.8 L92.7 743.3 M80.1 752.1 L80.6 753.5 L81.2 754.9 M84.1 742.2 L85.2 743.3 L86.2 742.1 M91.7 749.6 L90.6 748.5 L89.8 747.3 L90.7 746.1 L92.1 745.6 M99.5 749.8 L98.1 749.1 L97.7 747.7 L97.9 746.2 M89.6 756.6 L90.3 755.3 L91.3 754.1 L92.7 753.8 L94.2 753.5 L95.5 752.7 L96.6 753.8 L97.5 755.0 M99.3 751.2 L97.8 750.9 L99.1 750.3 L98.6 751.7 L98.0 753.0 L96.6 753.6 L95.5 752.5 L96.8 751.8 L98.0 750.9 L99.4 750.2 L100.3 751.3 M93.1 755.3 L93.9 756.6 L94.7 757.8 M88.7 757.0 L88.9 755.5 L89.9 754.4 L91.4 754.5 L92.5 753.5 L94.0 753.7 L95.1 752.8 L96.1 751.6 L97.4 750.9 L98.7 750.2 M86.9 747.4 L86.7 748.9 L85.5 748.0 L84.5 746.9 L85.6 747.9 L87.1 748.2 L86.4 749.5 L85.7 750.8 L85.6 752.3 L86.8 753.2 M89.0 743.3 L90.4 743.6 L88.9 743.4 L89.4 742.0 L90.9 741.8 M94.6 756.3 L93.5 757.3 M98.9 757.3 L100.3 757.8 M84.1 749.0 L83.7 750.5 L84.0 751.9 L82.6 752.4 L82.1 753.8 L81.0 752.9 L80.0 751.7 L79.3 750.4 L79.7 748.9 L80.5 747.7 L81.2 748.9 M98.2 746.4 L97.0 747.3 L95.8 748.1 L94.7 749.1 L93.7 750.2 M95.7 744.3 L94.2 744.1 M93.4 749.0 L94.6 748.2 L96.1 748.8 L96.3 750.2 L94.9 749.7 L93.5 749.3 L93.7 747.8 L92.9 746.5 L93.2 745.0 L93.7 743.6 L94.8 744.6 L95.0 746.0 M89.2 748.2 L90.5 749.0 L91.9 749.5 L93.1 748.6 L91.9 749.6 M103.2 750.7 L103.8 749.4 M95.5 755.4 L96.9 755.0 L97.4 753.5 L98.8 753.2 L99.4 751.8 L100.5 750.8 L101.9 750.3 M98.7 756.9 L97.5 756.1 L96.3 755.2 L94.8 755.6 L94.0 756.8 L92.5 757.1 L91.3 756.2 M84.6 742.2 L83.1 742.6 L81.8 743.3 M100.1 757.0 L100.9 755.7 L101.9 754.6 L103.0 753.5 L101.9 752.5 L102.5 751.2 L101.0 750.7 L99.7 749.9 L98.5 750.8 L98.3 752.2 L99.1 753.5 L98.8 754.9 M87.1 754.5 L85.9 755.4 L84.4 755.5 L83.3 756.5 L81.8 756.5 M105.2 751.5 L105.6 752.9 M90.1 749.7 L89.7 751.1 L89.9 752.6 L88.5 753.2 L87.0 753.4 L85.6 752.9 L86.3 751.6 L87.5 750.7 L89.0 750.5 L90.5 750.2 L90.2 751.7 L88.7 751.9 M97.7 756.7 L99.1 756.1 L100.5 756.5 L102.0 756.7 L103.5 756.3 M85.8 750.6 L85.1 751.9 L85.1 750.4 L84.8 748.9 L84.0 747.6 L84.6 746.3 L84.5 747.8 L84.4 749.3 L84.3 750.8 L85.6 751.6 L86.3 752.9 M80.6 749.6 L81.0 751.0 L82.4 750.5 L83.7 749.7 L84.9 748.8 L85.0 747.3 L85.6 745.9 L86.3 744.6 L85.0 743.9 L83.5 743.5 L83.1 744.9 L84.4 744.1 M99.2 754.6 L100.7 754.5 L101.9 753.7 L103.2 753.0 L104.3 752.0 L105.7 751.3 M86.9 747.2 L87.4 748.6 L86.9 750.0 L85.4 749.8 L84.2 750.8 L83.5 752.1 L84.4 753.3 L84.9 754.7 L85.5 756.1 M87.5 753.2 L86.0 752.8 L85.7 751.3 L84.6 750.3 L83.3 749.5 L82.1 748.7 M85.1 756.7 L85.5 755.3 L86.7 754.3 L86.6 752.8 L87.4 751.6 M84.3 751.1 L84.2 749.6 L84.9 748.3 L83.5 747.7 L82.3 746.8 L80.8 746.6 M102.6 748.8 L101.1 748.8 L100.1 749.9 L99.5 751.3 L100.8 752.1 L102.3 752.5 L103.5 753.4 L102.7 752.1 M82.9 747.2 L84.3 747.7 L85.4 746.7 L86.9 746.4 L87.9 747.5 L89.0 746.6 L90.4 747.1 L89.2 747.9 M82.5 755.0 L81.5 753.9 L80.2 753.2 M104.2 756.9 L103.0 756.1 L103.3 757.6 L104.8 757.7 L106.2 757.0 M103.5 750.6 L104.5 751.8 L105.1 753.1 L105.9 754.4 M92.6 747.8 L94.1 747.8 L94.4 746.3 L94.1 744.8 L93.6 743.4" fill="none" stroke="#000" stroke-width="1.15" stroke-linecap="square"/>
<path d="M231.0 753.4 L230.7 751.9 L230.5 750.4 L229.5 749.3 L228.0 749.3 L227.0 748.2 L228.3 747.4 L229.8 747.1 M234.1 754.3 L234.6 755.7 L236.0 756.4 M220.9 744.0 L222.4 744.1 L222.6 742.7 L223.2 741.3 M228.9 750.0 L229.6 748.7 L229.4 747.2 M227.9 748.5 L227.7 747.0 L226.2 746.9 L225.6 745.6 L224.4 744.6 L223.0 745.1 M222.6 745.1 L223.8 744.2 L225.0 743.4 M232.8 753.9 L234.1 754.6 L235.4 755.4 L234.0 756.1 L232.5 756.0 L232.7 757.5 M235.1 755.4 L233.7 754.9 L234.8 753.9 L234.1 752.6 M227.2 750.6 L228.2 751.7 M211.2 738.2 L212.1 739.4 L212.7 740.8 M228.3 746.5 L227.1 745.7 L225.6 746.1 L224.4 746.9 M228.5 746.2 L228.3 747.7 L227.1 746.8 L227.3 745.3 L226.1 744.4 L226.2 742.9 M226.7 745.7 L226.6 744.2 M212.5 737.9 L212.7 739.4 L213.7 738.3 L213.7 736.8 M225.0 745.8 L226.4 746.4 L226.0 747.9 L224.5 747.7 M216.6 742.1 L217.6 741.0 L218.1 739.6 L217.7 738.2 M233.9 756.9 L235.4 757.1 L236.8 757.6 M228.9 751.0 L229.9 752.1 L231.0 753.1 L231.4 754.6 L232.2 755.8 M224.3 747.3 L224.7 745.8 L224.4 744.4 L224.3 742.9 M231.1 749.8 L229.6 749.8 L229.2 751.2 L229.0 752.7 L229.9 753.9 M234.1 753.1 L232.6 752.8 L232.7 751.3 M227.2 746.2 L225.8 746.7 L226.1 748.2 L227.5 747.5 L228.9 747.2 M213.8 739.5 L214.0 741.0 M221.6 742.6 L222.0 741.2 M225.8 747.7 L227.2 748.4 L227.5 749.8 L229.0 750.2 L230.2 751.1 L229.1 752.1 M211.7 737.2 L210.2 737.4 L209.0 736.5 L209.2 735.0 L210.6 734.3 M230.0 748.2 L228.7 747.4 M206.2 734.2 L207.3 735.2 L207.9 736.6" fill="none" stroke="#000" stroke-width="1.15" stroke-linecap="square"/>
<path d="M807 583 L804.5 590 L802.8 600 L802.5 612 L803 630 L804 642 L807 650Z" fill="#004364"/>
<path d="M806.0 620.8 L804.5 620.9 L803.0 621.3 L801.8 622.2 L800.3 622.4 L799.2 621.3 M797.2 640.5 L796.1 641.4 L797.1 642.5 L797.5 643.9 L798.8 644.7 L798.8 643.2 L797.6 642.3 L796.1 642.0 L795.5 643.4 M804.3 571.0 L803.6 572.3 L802.3 573.1 L800.9 572.9 L799.4 573.1 L798.0 572.4 L798.1 570.9 M791.0 592.9 L790.1 594.1 L790.5 595.6 L791.7 594.7 L793.1 594.0 L794.6 594.2 L795.7 593.2 M796.2 627.8 L796.5 629.3 L798.0 629.2 L799.2 630.0 L799.6 631.5 L800.8 630.5 L802.2 630.1 L803.5 629.3 M803.8 605.1 L804.4 606.5 L805.8 606.8 L806.8 607.9 M801.5 607.8 L802.9 607.2 L804.2 606.5 L804.1 605.0 L805.6 604.6 L805.5 603.1 L806.3 601.9 M801.9 562.0 L803.1 563.0 L802.0 564.1 L801.8 562.6 L800.5 563.3 L799.9 564.7 M800.2 627.9 L801.0 626.6 L801.7 625.3 L802.1 623.9 L801.4 622.6 L801.2 621.1 L801.6 619.6 L801.8 618.1 L801.6 616.6 M807.0 572.5 L805.5 572.8 L804.1 572.1 L805.5 571.6 L807.0 571.1 M799.2 581.4 L800.4 580.5 L801.2 579.2 L801.6 577.8 L802.2 576.4 L803.7 576.5 L805.2 576.6 L805.9 578.0 M805.3 569.7 L805.5 571.2 L806.6 572.2 L806.8 573.7 L806.2 575.0 M800.7 572.5 L799.6 573.6 L800.2 574.9 L801.5 575.7 L802.8 576.3 L804.0 577.3 L805.4 577.8 L805.1 576.4 L804.7 574.9 L804.6 573.4 L806.0 572.8 M799.1 582.2 L800.5 581.7 L799.9 583.1 L800.6 584.4 L800.6 585.9 M795.3 613.9 L794.9 612.4 L793.5 613.0 L792.2 613.8 M803.0 637.2 L802.5 635.8 L802.1 634.3 L801.0 633.2 L799.8 632.3 L798.3 632.2 L797.0 631.4 L795.7 630.7 L795.2 629.3 M801.9 614.5 L801.9 613.0 L801.0 611.8 L800.5 610.4 L799.3 609.5 L798.0 610.3 M803.1 608.1 L802.4 606.8 L801.7 605.4 L800.5 606.2 L800.2 604.8 L798.8 605.2 L797.3 604.9 L796.3 603.8 M804.0 571.9 L803.3 570.6 L804.0 569.3 L804.9 568.1 L806.2 567.4 M789.4 600.3 L790.4 601.4 L791.6 602.3 L792.7 603.3 L792.4 601.9 L792.4 600.4 L791.0 599.7 L789.6 600.2 L790.2 601.6 L791.5 600.9 L791.6 599.4 M794.7 632.7 L794.3 631.2 M804.5 650.4 L803.8 651.7 L803.4 653.2 L803.6 654.7 L802.4 655.6 M800.3 639.7 L800.1 641.2 L798.8 642.0 L798.3 643.4 L797.1 644.3 L796.0 643.2 L795.5 641.8 L794.3 640.9 M801.4 590.8 L800.9 589.4 L799.4 589.6 L798.8 588.2 L798.9 586.7 L797.5 586.3 L796.6 585.0 L795.3 584.3 M796.8 591.5 L797.3 592.9 L797.7 594.4 L797.3 595.8 L797.3 597.3 M798.7 610.4 L800.2 610.4 L800.7 609.0 L800.1 607.6 L801.6 607.1 L803.1 607.3 L804.5 606.9 L806.0 607.1 M803.0 582.8 L802.9 584.3 L803.6 585.7 L804.8 584.8 L805.7 583.6 L806.1 582.1 L806.7 580.8 L805.6 579.8 L805.0 578.4 L804.4 579.7 L805.6 580.6 M789.6 595.8 L789.9 597.3 L789.9 598.8 L790.0 597.3 L788.9 596.3 L787.4 596.6 M794.7 590.0 L793.4 590.7 L794.5 589.7 L795.7 590.7 L794.6 589.7 L793.3 588.8 M801.9 653.2 L802.8 652.0 L803.7 650.8 L804.9 650.0 L805.9 651.1 M795.8 609.8 L795.0 608.6 L793.6 608.1 L794.9 608.7 L795.0 610.2 L794.2 611.4 L793.8 612.9 L792.3 613.0 L790.9 612.4 M803.2 570.3 L803.5 571.8 L804.9 572.0 L804.0 570.9 L803.8 569.4 M792.6 585.4 L792.5 583.9 L792.3 582.4 L793.3 581.3 L794.7 580.8 L795.7 579.6 L795.7 578.1 L797.1 578.7 L798.6 579.1 M801.1 648.5 L800.2 647.3 L799.5 646.0 L799.2 644.5 L799.8 643.2 L798.6 642.3 L797.1 642.3 L795.6 642.5 L795.7 641.0 L794.9 642.3 L793.6 643.0 M805.7 643.6 L804.3 644.0 L802.8 643.8 L801.6 643.0 L800.1 643.4 L798.7 642.9 L797.2 642.7 L796.1 643.8 M804.6 573.4 L803.4 572.5 L801.9 572.3 L802.1 570.8 L803.5 570.3 L804.3 571.6 L804.0 573.1 M797.5 590.7 L796.7 589.4 L795.5 590.3 L794.3 591.2 L795.2 592.4 L795.9 593.7 L797.3 593.4 L797.3 591.9 L797.4 590.4 L797.4 588.9 M806.1 589.7 L804.9 588.8 L806.3 588.1 L806.8 586.7 L806.5 585.2 L806.0 583.8 L804.6 584.4 L803.8 583.1 L803.8 581.6 M800.5 605.9 L801.8 606.7 L801.1 608.1 L801.2 609.6 L802.3 610.5 L802.8 612.0 L803.8 613.1 L805.1 613.8 L805.0 615.2 L803.6 614.7 L802.4 613.7 M796.1 633.0 L796.8 631.7 L797.3 630.3 L796.3 631.5 L794.8 631.7 L795.0 630.2 M799.7 631.5 L800.7 632.6 L802.1 633.2 L801.6 631.8 L800.9 630.4 L799.4 630.4 L798.0 629.8 M792.0 606.2 L793.4 605.6 L794.5 604.6 L795.7 605.5 L796.8 606.6 L798.1 607.2 L799.0 605.9 M798.9 628.0 L798.6 626.5 L797.4 625.7 M806.5 609.7 L806.6 608.2 L806.5 606.7 M804.5 590.4 L805.6 589.3 L805.5 587.8 L805.1 586.4 L803.6 586.7 L802.3 586.0 L802.7 584.6 L804.2 584.4 M796.0 606.5 L795.2 605.2 L794.7 603.8 L794.2 602.4 L794.4 600.9 L793.3 600.0 L791.9 600.4 L791.4 601.8 M794.0 643.2 L794.5 641.8 L794.2 640.3 L795.4 639.4 L796.7 640.1 L796.4 641.6 L796.1 643.1 L796.1 644.6 M806.7 613.8 L805.7 614.9 L805.1 616.3 L805.5 617.7 L805.9 619.1 L805.4 620.5 L804.2 621.5 L802.9 622.2 L801.4 622.0 L801.5 623.5 L802.8 624.3 L803.9 625.3 M801.7 617.3 L803.1 617.8 L804.1 616.7 L805.4 615.9 L805.8 617.4 L806.4 618.7 L805.2 619.6 L803.7 620.0 L803.6 621.5 L803.9 622.9 M793.1 592.9 L794.5 592.3 L796.0 592.7 L795.4 591.3 L796.0 590.0 M800.0 594.8 L799.4 596.1 L798.6 597.4 L798.4 598.9 L797.3 599.9 M804.4 630.4 L805.9 629.9 L806.0 631.4 L804.7 630.7 L803.4 631.5 L803.1 630.1 L802.8 628.6 L802.3 627.2 L803.8 626.8 M798.3 615.1 L798.9 613.7 L799.8 612.5 L798.9 611.2 L797.9 610.2 L796.6 611.1 L796.1 609.7 M801.3 634.0 L800.2 635.0 L798.8 635.3 L797.7 636.3 L796.3 637.0 L795.4 638.2 L794.0 638.7 L792.7 639.4 L792.1 640.8 M797.8 612.8 L799.3 613.1 L800.0 611.8 L800.6 610.5 L800.7 612.0 L800.1 613.4 L798.6 613.2 L797.2 613.3 M804.4 646.2 L804.4 647.7 L805.9 648.0 L806.2 649.4 M794.3 631.8 L795.2 630.6 M792.4 643.0 L793.8 642.4 L795.0 641.5 L795.6 640.1 L797.0 639.5 L796.7 638.1 M794.0 597.9 L795.0 599.0 L796.1 600.0 L797.5 599.6 L799.0 599.2 L799.8 597.9 L800.1 596.4 L801.5 596.9 L802.5 597.9 M802.3 638.8 L803.1 640.0 L803.8 641.3 L802.6 640.5 L801.9 639.2 L800.9 638.0 L802.4 638.0 L803.9 638.0 L804.4 636.6 M800.5 631.4 L802.0 631.5 L803.0 630.4 L803.3 628.9 L802.6 627.6 M798.4 570.3 L798.2 571.8 L799.0 573.1 L797.6 573.8 M799.7 616.6 L800.5 615.3 L801.6 614.2 L801.8 612.8 L801.4 611.3 M789.1 597.4 L788.9 595.9 M796.0 616.9 L795.6 615.5 L794.1 615.1 M792.5 613.2 L791.2 612.5 M806.8 581.4 L806.4 580.0 L806.0 578.6 L804.8 577.6 L804.1 578.9 L803.1 580.1 M796.1 579.5 L795.2 578.3 L794.4 577.0 M796.0 603.6 L795.4 602.2 L796.5 603.3 L797.9 603.0 L798.0 601.5 L799.4 601.3 L800.1 602.6 L801.6 602.3 L801.3 600.9 M799.0 627.5 L800.0 628.6 L801.1 629.7 L800.3 631.0 L801.6 631.8 L803.1 632.0 L803.4 630.5 L804.2 631.8 L802.7 632.0 L801.8 630.8 L800.7 629.7 L800.6 628.2" fill="none" stroke="#000" stroke-width="1.15" stroke-linecap="square"/>
<path d="M787 640 L783 646.5 L785.5 659 L784.25 674 L791.75 684 L794.25 696.5 L794.25 706.5 L788 711.5 L790.5 719 L784.25 724 L785.5 734" fill="none" stroke="#000" stroke-width="3.6" stroke-linejoin="round"/>
<path d="M787 640 L783 646.5 L785.5 659 L784.25 674 L791.75 684 L794.25 696.5 L794.25 706.5 L788 711.5 L790.5 719 L784.25 724 L785.5 734" fill="none" stroke="#004364" stroke-width="2" stroke-linejoin="round"/>
<path d="M299.5 59.5 L303.75 56.25 L308.75 55.0 L313.75 58.0 L315.0 65.0 L318.75 70.0 L323.75 72.5 L321.25 75.0 L320.0 82.5 L322.5 88.75 L323.75 96.25 L321.25 93.75 L317.5 86.25 L314.5 77.5 L312.5 68.75 L310.0 62.5 L305.0 61.25 L301.25 62.5Z" fill="#27476e"/>
<path d="M368.25 260.75 L372.5 258.25 L377.5 259.5 L381.25 263.75 L387.5 266.25 L392.5 271.25 L396.25 276.25 L393.75 275.0 L387.5 270.0 L381.25 267.5 L376.25 263.75 L370.0 262.5Z" fill="#27476e"/>
<path d="M445.0 366.25 L448.0 363.0 L450.0 365.0 L448.75 368.75 L445.0 372.5 L442.5 377.5 L438.75 377.0 L441.25 372.5Z" fill="#27476e"/>
<path d="M605.0 307.5 L608.75 305.0 L612.5 300.0 L613.75 293.75 L612.5 287.5 L615.0 285.0 L616.25 290.0 L618.75 291.25 L620.0 286.25 L622.5 287.5 L623.75 293.75 L627.5 293.75 L625.0 297.5 L620.0 300.0 L618.75 305.0 L613.75 308.75 L610.0 312.5 L606.25 312.5Z" fill="#27476e"/>
<path d="M423.75 412.5 L426.25 415.0 L427.5 422.5 L430.0 427.5 L432.0 432.5 L430.0 434.5 L427.5 430.0 L425.0 423.75Z" fill="#27476e"/>
<path d="M526.25 501.25 L528.75 505.0 L531.25 510.0 L530.0 517.5 L532.5 525.0 L536.25 525.0 L533.75 530.0 L533.75 537.5 L530.0 538.75 L527.5 532.5 L525.0 525.0 L526.25 517.5 L527.5 510.0Z" fill="#27476e"/>
<path d="M122.5 657.75 L126.25 653.5 L131.25 652.0 L135.0 655.25 L136.25 660.25 L133.75 665.25 L128.75 668.5 L123.75 667.0 L121.25 662.75Z" fill="#27476e"/>
<path d="M42.0 681.5 L45.0 679.75 L48.75 682.0 L51.25 686.5 L50.0 689.5 L46.25 688.5 L43.0 685.25Z" fill="#27476e"/>
<path d="M58.0 685.25 L60.5 684.0 L62.0 688.5 L65.5 692.75 L68.75 697.75 L73.75 702.0 L79.5 704.0 L84.5 706.5 L83.75 710.25 L78.0 709.0 L72.5 707.0 L67.0 705.25 L62.5 702.0 L60.0 696.5 L58.0 691.0Z" fill="#27476e"/>
<path d="M143.75 699.0 L147.5 695.25 L152.0 696.5 L153.0 701.0 L155.0 705.25 L152.5 708.5 L148.75 707.0 L146.25 711.5 L142.5 712.75 L140.0 709.0 L142.5 705.25Z" fill="#27476e"/>
<path d="M784.25 728.5 L786.75 731.5 L791.75 736.5 L796.75 745.25 L794.25 754.0 L789.25 755.25 L785.5 746.5 L783.75 737.75Z" fill="#27476e"/>
<path d="M542 605.6 L546 609 L549.7 610.7 L553 606 L554.8 603 L558.4 605.6 L556.3 610.7 L563.5 610.7 L562.4 615.7 L552.3 618.3 L544.7 619.3 L541.1 613.2Z" fill="#27476e"/>
<path d="M181.25 6.0 L190.0 15.0 L196.25 27.5 L200.0 40.0 L201.25 55.0 L200.0 72.5 L200.0 90.0 L195.0 102.5 L188.75 112.5 L185.0 125.0 L180.0 140.0 L175.0 150.0 L170.0 162.5 L162.5 177.5 L155.0 192.5 L147.5 203.0 M240.0 6.0 L232.5 12.5 L228.75 22.5 L227.5 35.0 L226.25 47.5 L222.5 60.0 L212.5 67.5 L201.25 72.5 M240.0 6.0 L247.5 15.0 L252.5 25.0 L260.0 37.5 L262.5 50.0 L270.0 58.75 L285.0 60.0 M215.0 203.0 L225.0 192.5 L237.5 183.75 L250.0 178.75 L265.0 175.0 L275.0 171.25 L285.0 169.5 M270.0 60.0 L285.0 60.0 L297.5 55.0 L307.5 53.75 L320.0 61.25 L335.0 71.25 L350.0 82.5 L365.0 93.75 L375.0 105.0 L387.5 113.75 L397.5 122.5 L405.0 132.5 M473.75 6.0 L472.5 20.0 L468.75 35.0 L462.5 47.5 L450.0 55.0 L435.0 60.0 L430.0 72.5 L425.0 85.0 L420.0 95.0 L413.75 105.0 L408.75 115.0 L406.25 125.0 L405.0 132.5 M395.0 100.0 L420.0 102.5 L435.0 112.5 L436.25 132.5 L430.0 152.5 L410.0 163.75 L390.0 165.0 L375.0 155.0 L366.25 137.5 L370.0 120.0 L380.0 107.5 L395.0 100.0 M270.0 173.75 L295.0 165.0 L320.0 160.0 L345.0 152.5 L370.0 145.0 L390.0 141.25 L405.0 132.5 M405.0 132.5 L420.0 133.75 L440.0 131.25 L460.0 135.0 L482.5 138.75 L495.0 136.25 L517.5 136.25 L527.5 145.0 L540.0 150.0 L555.0 156.25 M405.0 132.5 L406.25 145.0 L402.5 160.0 L397.5 175.0 L396.25 190.0 L397.5 203.0 M405.0 132.5 L412.5 145.0 L425.0 156.25 L435.0 167.5 L442.5 180.0 L450.0 192.5 L462.5 203.0 M587.5 6.0 L586.25 22.5 L593.75 35.0 L602.5 42.5 L605.0 57.5 L600.0 75.0 L603.75 95.0 L591.25 110.0 L596.25 125.0 L610.0 140.0 L615.0 150.0 M540.0 153.75 L565.0 158.75 L590.0 157.5 L615.0 150.0 L640.0 150.0 L657.5 142.5 L680.0 130.0 L702.5 117.5 L725.0 105.0 L745.0 93.75 L765.0 83.75 L785.0 77.5 L806.0 71.25 M657.5 142.5 L670.0 152.5 L675.0 165.0 L685.0 175.0 L687.5 185.0 L700.0 188.75 L720.0 186.25 L740.0 182.5 L765.0 177.5 L780.0 173.75 L806.0 173.75 M592.5 160.0 L580.0 175.0 L570.0 190.0 L560.0 203.0 M715.0 188.75 L720.0 197.5 L725.0 203.0 M6.0 257.5 L25.0 256.25 L50.0 253.75 L75.0 246.25 L100.0 237.5 L117.5 230.0 L135.0 225.0 L150.0 223.75 L160.0 225.0 M161.75 226.75 L163.75 222.5 L168.75 221.25 L173.75 222.5 L175.75 226.75 L173.75 231.25 L168.75 232.5 L163.75 231.25 L161.75 226.75 M150.0 223.75 L147.5 212.5 L145.0 205.0 L147.5 200.0 M175.0 225.0 L187.5 217.5 L200.0 210.0 L212.5 202.5 L217.5 200.0 M165.0 232.5 L166.25 245.0 L168.75 260.0 L171.25 275.0 L173.75 287.5 L171.25 300.0 L172.5 312.5 L175.0 325.0 L177.5 340.0 L180.0 355.0 L183.75 370.0 L183.75 385.0 L180.0 395.0 L177.5 403.0 M397.5 200.0 L398.75 220.0 L395.0 240.0 L393.75 260.0 L396.25 280.0 L395.0 300.0 L398.75 320.0 L400.0 340.0 L401.0 356.0 L402.25 362.25 L403.5 368.25 L402.25 374.5 L405.25 380.5 L403.5 388.0 L404.0 395.5 L406.25 400.0 M405.25 380.5 L407.75 378.25 L410.25 373.25 L414.0 368.25 L415.0 363.5 L418.75 358.5 L423.75 356.0 L425.0 350.0 L440.0 340.0 L455.0 327.5 L467.5 310.0 L480.0 290.0 L490.0 272.5 L497.5 257.5 L502.5 242.5 L510.0 235.0 L522.5 232.5 L535.0 225.0 L545.0 215.0 L555.0 207.5 M414.0 368.25 L425.0 365.5 L445.0 363.0 L465.0 363.75 L485.0 360.0 L505.0 356.25 L525.0 352.5 L555.0 351.25 M462.5 200.0 L470.0 212.5 L482.5 225.0 L490.0 232.5 L505.0 237.5 L520.0 237.5 L530.0 245.0 L537.5 257.5 L540.0 275.0 L545.0 292.5 L555.0 305.0 M405.25 380.5 L396.5 384.25 L388.0 386.75 L380.5 390.5 L374.5 395.5 L367.0 399.0 L356.0 401.5 L345.0 403.0 M401.0 368.25 L395.5 372.0 L393.0 375.75 L388.0 385.5 L383.0 391.75 L374.5 396.5 M583.75 350.0 L592.5 336.25 L605.0 325.0 L622.5 317.5 L640.0 310.0 L657.5 300.0 L675.0 288.75 L690.0 282.5 L710.0 273.75 L725.0 262.5 L735.0 253.75 L752.5 246.25 L770.0 237.5 L790.0 227.5 L806.0 222.5 M583.75 350.0 L577.5 340.0 L571.25 327.5 L563.75 317.5 L555.0 307.5 L547.5 292.5 L542.5 277.5 L540.0 271.25 M572.5 322.5 L575.0 310.0 L580.0 300.0 L585.0 293.75 M583.75 350.0 L602.5 353.75 L620.0 360.0 L640.0 363.75 L665.0 367.5 L690.0 370.0 L715.0 372.0 L737.5 372.5 L752.5 372.5 L765.0 367.5 L777.5 360.0 L790.0 352.5 L806.0 342.5 M583.75 350.0 L565.0 347.5 L550.0 348.75 L540.0 352.5 M583.75 350.0 L590.0 362.5 L597.5 375.0 L602.5 387.5 L607.5 403.0 M583.75 350.0 L575.0 362.5 L565.0 375.0 L555.0 385.0 L547.5 396.25 L547.5 403.0 M583.75 350.0 L588.75 365.0 L587.5 375.0 L590.0 390.0 L597.5 403.0 M575.0 347.5 L577.0 338.75 L584.5 335.0 L592.0 338.75 L594.0 347.5 L592.0 356.25 L584.5 360.0 L577.0 356.25 L575.0 347.5 M720.0 200.0 L730.0 210.0 L745.0 222.5 L757.5 237.5 L765.0 257.5 L770.0 280.0 L790.0 297.5 L806.0 308.75 M740.0 253.75 L742.5 265.0 L755.0 272.5 L770.0 280.0 M540.0 222.5 L550.0 212.5 L560.0 200.0 M6.0 461.25 L25.0 462.5 L50.0 465.0 L70.0 468.75 L85.0 473.75 L100.0 475.0 L117.5 473.75 L135.0 473.75 L145.0 478.75 L152.5 481.25 L175.0 480.0 L200.0 476.25 L225.0 475.0 L250.0 474.25 L265.0 472.5 L275.0 468.75 L285.0 467.0 M177.5 400.0 L172.5 412.5 L165.0 425.0 L161.25 437.5 L160.0 450.0 L155.0 467.5 L150.0 480.0 L142.5 495.0 L136.25 510.0 L132.5 527.5 L130.0 545.0 L130.0 562.5 L128.75 580.0 L127.5 595.0 L126.25 603.0 M147.5 475.0 L150.0 470.0 L155.0 471.25 L153.75 477.5 L148.75 481.25 M257.5 474.25 L250.0 487.5 L242.5 505.0 L236.25 517.5 L235.0 527.5 L225.0 540.0 L217.5 550.0 L215.0 562.5 L215.0 575.0 L212.5 587.5 L207.5 603.0 M406.25 400.0 L410.0 412.5 L417.5 425.0 L423.75 440.0 L430.0 455.0 L436.25 466.25 L440.0 472.5 L435.0 485.0 L427.5 500.0 L417.5 515.0 L407.5 530.0 L397.5 545.0 L385.0 560.0 L370.0 575.0 L352.5 587.5 L335.0 597.5 L320.0 603.0 M440.0 472.5 L460.0 472.5 L482.5 465.0 L500.0 455.0 L512.5 445.0 L522.5 432.5 L530.0 420.0 L542.5 410.0 L547.5 400.0 M367.5 400.0 L345.0 403.75 L335.0 415.0 L320.0 430.0 L305.0 445.0 L295.0 455.0 L282.5 465.0 L270.0 470.0 M607.5 400.0 L615.0 410.0 L625.0 418.75 L633.75 427.5 M633.75 427.5 L631.25 445.0 L630.0 465.0 L630.0 485.0 L631.25 505.0 L635.0 522.5 L642.5 537.5 L647.5 550.0 L650.0 565.0 L653.75 580.0 L657.5 595.0 L660.0 603.0 M633.75 427.5 L645.0 437.5 L652.5 446.25 L665.0 452.5 L680.0 458.75 L695.0 463.75 L710.0 466.25 L730.0 468.75 L747.5 471.25 L760.0 472.5 L775.0 478.75 L790.0 483.75 L800.0 487.5 L806.0 493.75 M626.25 420.0 L633.75 418.75 L640.0 425.0 L645.0 435.0 L640.0 431.25 L633.75 427.5 M6.0 661.5 L20.0 657.75 L40.0 651.5 L60.0 645.25 L75.0 642.75 L90.0 644.0 L100.0 641.5 L120.0 640.25 L140.0 641.0 L160.0 646.5 L175.0 652.75 L190.0 656.5 L205.0 654.0 L220.0 650.25 L240.0 646.5 L260.0 644.0 L285.0 642.75 M6.0 616.5 L11.25 624.0 L12.5 634.0 L11.25 644.0 L15.0 659.0 M126.25 609.0 L127.5 624.0 L128.75 636.5 L132.5 646.5 L136.25 656.5 L133.75 666.5 L130.0 674.0 M85.0 644.0 L92.5 656.5 L102.5 666.5 L115.0 672.75 L130.0 674.0 L145.0 680.25 L160.0 684.0 L165.0 680.25 L175.0 671.5 L185.0 664.0 L190.0 656.5 M202.5 609.0 L197.5 621.5 L192.5 634.0 L187.5 644.0 L186.25 654.0 M284.0 640.25 L294.0 635.25 L301.5 630.25 L306.5 624.0 L312.75 621.5 L321.5 624.5 L334.0 626.0 L346.5 629.0 L356.5 632.75 L366.5 637.0 L379.0 638.5 L386.5 634.0 L391.5 627.75 L401.5 621.5 L414.0 619.0 L429.0 618.5 L444.0 616.5 L459.0 620.25 L474.0 617.0 L489.0 615.25 L504.0 616.5 L519.0 617.75 L534.0 622.75 L549.0 627.75 L569.0 634.0 M306.5 609.0 L307.0 616.5 L312.75 621.5 M548.0 627.75 L563.0 634.0 L580.5 640.25 L603.0 640.25 L623.0 641.5 L643.0 644.0 L663.0 650.25 L683.0 652.75 L703.0 659.0 L723.0 660.25 L740.5 661.5 L760.5 657.75 L778.0 655.25 L785.5 654.0 M661.75 609.0 L668.0 619.0 L678.0 631.5 L690.5 644.0 L703.0 659.0 L710.5 669.0 L718.0 684.0 L723.0 701.5 L730.5 714.0 L738.0 726.5 L745.5 744.0 L750.5 764.0 L754.25 781.5 L755.5 791.5 M783.0 665.25 L793.0 667.75 L798.0 679.0 L804.25 691.5 L806.0 696.5 M803.79 540.0 L801.21 557.24 L798.62 567.59 L791.72 584.83 L786.55 591.72 L784.83 600.34 L785.69 617.59 L788.28 634.83 L786.55 646.9 L785.69 657.24 M778.79 646.9 L782.24 643.45 L786.55 642.59 L790.0 650.34 L793.45 664.14 L791.72 669.31 L783.1 667.59 L778.79 660.69 L777.93 652.07 L778.79 646.9" fill="none" stroke="#85700e" stroke-width="1" shape-rendering="crispEdges"/>
<path d="M6.0 105.0 L155.0 105.5 L156.25 110.0 L160.0 113.75 L161.25 120.0 L158.75 123.75 L155.0 127.5 L151.25 132.5 L147.5 137.5 L142.5 143.75 L137.5 149.5 L187.5 149.5 M226.25 53.75 L232.5 46.25 L240.0 40.0 L250.0 40.0 L257.5 42.5 L262.5 47.5 L270.0 52.5 L277.5 53.75 L282.5 50.0 L281.25 42.5 L277.5 37.5 L276.25 30.0 L280.0 25.0 L285.0 22.0 M208.75 104.0 L250.0 104.5 L285.0 105.25 M267.5 105.5 L311.25 105.5 L312.5 98.75 L310.0 88.75 L323.75 92.0 L370.0 91.25 L420.0 90.5 L470.0 93.0 L520.0 93.75 L555.0 95.0 M303.75 6.0 L308.75 10.0 L309.5 16.25 L302.5 20.0 L292.5 21.25 L282.5 23.75 L278.75 27.5 L277.5 32.5 L275.0 37.5 L280.0 41.25 L282.5 47.5 L280.0 52.5 L275.0 53.75 L270.0 51.25 M540.0 95.0 L635.0 96.25 L715.0 96.25 L787.5 95.0 L806.0 97.5 M635.0 96.25 L645.0 90.0 L660.0 86.25 L676.25 82.5 L678.75 75.0 L690.0 72.5 L697.5 67.5 L698.75 60.0 L706.25 56.25 L707.5 48.75 L720.0 42.5 L732.5 37.5 L742.5 31.25 L750.0 25.0 L757.5 17.5 L762.5 13.75 L766.25 12.5 L765.0 10.0 L757.5 10.0 L751.25 7.5 L748.75 6.0 M766.25 12.5 L762.5 18.75 L766.25 23.75 L767.5 30.0 L775.0 33.75 L780.0 38.75 L786.25 42.0 L795.0 40.0 L802.5 37.0 L806.0 33.75 M787.5 95.0 L783.75 100.0 L782.5 107.5 L780.0 113.75 L782.5 118.75 L776.25 117.5 L767.5 122.5 L763.75 130.0 L760.0 137.5 L752.5 138.75 L745.0 136.25 L737.5 138.75 L730.0 143.75 L725.0 150.0 L718.75 152.5 L715.0 147.5 L711.25 143.75 L705.0 147.5 L700.0 153.75 L693.75 155.0 L692.5 161.25 L687.5 166.25 L682.5 168.75 L676.25 170.0 L670.0 173.75 L662.5 178.75 L655.0 183.75 L647.5 187.0 L640.0 186.25 L632.5 187.5 L625.0 190.0 L617.5 193.75 L612.5 198.75 L610.0 203.0 M146.25 238.75 L285.0 238.75 M267.5 238.75 L300.0 238.0 L395.0 238.75 L492.5 239.5 L555.0 240.0 M300.0 238.0 L303.75 243.75 L307.5 247.5 L306.25 262.5 L302.5 300.0 L298.75 337.5 L295.0 370.0 L292.0 403.0 M492.5 239.5 L496.25 262.5 L501.25 287.5 L506.25 312.5 L510.0 337.5 L513.75 362.5 L517.5 385.0 L520.0 403.0 M540.0 239.5 L587.5 239.5 L660.0 238.75 L678.75 237.5 M612.5 200.0 L611.25 207.5 L606.25 213.75 L597.5 216.25 L591.25 217.5 L590.0 225.0 L588.75 232.5 L588.0 239.5 M678.75 237.5 L690.0 233.75 L702.5 231.25 L710.0 226.25 L720.0 223.75 L730.0 221.25 L732.5 218.75 L735.0 221.25 L745.0 220.0 L765.0 221.25 L790.0 222.5 L806.0 223.75 M678.75 237.5 L675.0 245.0 L667.5 250.0 L662.5 256.25 L660.5 263.75 L665.0 268.75 L672.5 273.75 L678.75 278.75 L685.0 283.75 L693.75 284.5 L697.5 290.0 L701.25 297.5 L705.0 305.0 L706.25 312.5 L712.5 320.0 L717.5 327.5 L722.5 332.5 L730.0 338.75 L737.5 343.75 L742.5 350.0 L747.5 358.75 L752.5 363.75 L758.75 366.25 L762.5 371.25 L766.25 376.25 L765.0 382.5 L768.75 387.5 L772.5 390.0 L775.0 395.0 L778.75 398.75 L780.0 403.0 M6.0 415.5 L79.5 415.5 M291.25 400.0 L288.75 425.0 L285.0 462.5 L281.25 500.0 L280.0 525.0 L281.25 550.0 L282.5 575.0 L283.75 603.0 M520.0 400.0 L522.5 412.5 L526.25 427.5 L530.0 442.5 L535.0 455.0 L540.0 466.25 L537.5 475.0 L545.0 482.5 L540.0 487.5 L533.75 493.75 L532.5 505.0 L530.0 517.5 L532.5 532.5 L533.75 545.0 L531.25 557.5 L530.0 570.0 L530.0 580.0 L535.0 587.5 L537.5 595.0 L540.0 603.0 M343.75 603.0 L345.0 594.25 L536.25 594.25 M777.5 400.0 L782.5 405.0 L790.0 408.75 L796.25 412.5 L797.5 420.0 L801.25 425.0 L803.75 432.5 L805.0 440.0 L806.0 450.0 M185.0 609.0 L183.75 619.0 L186.25 629.0 L190.0 639.0 L192.5 649.0 L197.5 659.0 L200.0 666.5 M284.0 609.0 L285.25 624.0 L286.0 641.5 L285.25 650.25 M344.0 609.0 L349.5 616.5 L355.25 621.5 L359.0 629.0 L356.5 636.5 L357.75 642.75 L362.0 646.5 L359.0 651.5 L355.25 655.25 M548.0 619.0 L648.0 626.0 L743.0 632.0 L745.5 641.5 L748.0 649.0 L755.5 650.25 L759.25 644.0 L760.5 634.0 L758.0 624.0 L759.25 615.25 L765.5 610.25 L773.0 612.75 L785.5 616.5 L798.0 619.0 L803.0 621.5 M537.5 595 L540 601 L543 607.5 M202.5 6.0 L205.0 12.5 L207.5 20.0 L206.25 27.5 L202.5 31.25 L203.75 37.5 L207.5 42.5 L211.25 50.0 L213.75 56.25 L217.5 60.0 L221.25 58.75 L220.0 55.0 L225.0 53.75 L226.25 60.0 L228.75 63.75 L231.25 67.5 L230.0 72.5 L226.25 77.5 L228.75 82.5 L225.0 86.25 L227.5 92.5 L223.75 96.25 L217.5 95.0 L213.75 92.5 L211.25 97.5 L208.75 103.75 L205.0 101.25 L203.75 97.5 L200.0 97.5 L197.5 101.25 L200.0 105.0 L203.75 107.5 L201.25 112.5 L197.5 116.25 L192.5 120.0 L188.75 123.75 L190.0 127.5 L193.75 125.0 L197.5 126.25 L196.25 131.25 L192.5 135.0 L188.75 137.5 L191.25 142.5 L187.5 146.25 L187.5 149.5 L190.0 152.5 L192.5 156.25 L188.75 158.75 L185.0 160.0 L186.25 163.75 L190.0 165.0 L187.5 168.75 L181.25 170.0 L175.0 171.25 L170.0 173.75 L171.25 178.75 L175.0 180.0 L172.5 185.0 L170.0 188.75 L172.5 192.5 L167.5 193.75 L163.75 196.25 L165.0 200.0 L160.0 203.0 M160.0 200.0 L157.5 205.0 L160.0 210.0 L158.75 216.25 L160.0 222.5 L156.25 226.25 L152.5 227.5 L150.0 233.75 L143.75 236.25 L142.5 241.25 L147.5 243.75 L146.25 248.75 L141.25 251.25 L136.25 252.5 L133.75 247.5 L130.0 248.75 L131.25 253.75 L127.5 256.25 L125.0 261.25 L130.0 265.0 L127.5 270.0 L123.75 268.75 L122.5 275.0 L125.0 280.0 L122.5 285.0 L123.75 291.25 L117.5 293.75 L115.0 298.75 L110.0 295.0 L107.5 300.0 L103.75 302.5 L105.0 308.75 L100.0 307.5 L97.5 311.25 L101.25 313.75 L96.25 315.0 L95.0 320.0 L100.0 321.25 L98.75 325.0 L93.75 326.25 L92.5 330.0 L86.25 330.0 L85.0 332.5 L90.0 333.75 L87.5 338.75 L83.75 342.5 L87.5 345.0 L91.25 347.5 L88.75 351.25 L83.75 350.0 L81.25 347.5 L80.0 352.5 L85.0 356.25 L80.0 358.75 L75.0 355.0 L76.25 361.25 L80.0 363.75 L75.0 366.25 L76.25 371.25 L82.5 375.0 L86.25 378.75 L83.75 382.5 L77.5 380.0 L75.0 375.0 L75.0 380.0 L80.0 385.0 L82.5 390.0 L86.25 392.5 L87.5 396.25 L83.75 397.5 L85.0 403.0 M85.0 400.0 L80.0 403.75 L77.5 407.5 L82.5 411.25 L80.0 416.25 L76.25 420.0 L77.5 425.0 L83.75 426.25 L86.25 421.25 L83.75 417.5 L86.25 425.0 L82.5 431.25 L80.0 437.5 L83.75 442.5 L80.0 448.75 L85.0 451.25 L90.0 450.0 L91.25 453.75 L86.25 456.25 L83.75 461.25 L87.5 466.25 L92.5 465.0 L95.0 470.0 L98.75 475.0 L100.0 471.25 L96.25 477.5 L93.75 482.5 L88.75 486.25 L86.25 490.0 L90.0 492.5 L87.5 497.5 L83.75 500.0 L86.25 503.75 L82.5 507.5 L77.5 510.0 L75.0 513.75 L71.25 517.5 L67.5 521.25 L71.25 523.75 L72.5 527.5 L67.5 528.75 L63.75 526.25 L62.5 532.5 L60.0 537.5 L55.0 536.25 L53.75 540.0 L58.75 542.5 L60.0 547.5 L56.25 552.5 L51.25 556.25 L47.5 558.75 L50.0 562.5 L53.75 560.0 L55.0 565.0 L52.5 570.0 L46.25 571.25 L45.0 575.0 L47.5 580.0 L45.0 583.75 L47.5 588.75 L45.0 594.25 L186.25 594.25 L187.0 597.5 L185.0 603.0" fill="none" stroke="#000000" stroke-width="1" stroke-linejoin="round" shape-rendering="crispEdges"/>
<path d="M417.10 247.90A159.7 159.7 0 1 1 394.10 248.15" fill="none" stroke="#d6d6d6" stroke-width="1" shape-rendering="crispEdges"/>
<path d="M417.10 127.67A279.8 279.8 0 1 1 394.10 127.81" fill="none" stroke="#d6d6d6" stroke-width="1" shape-rendering="crispEdges"/>
<path d="M417.10 7.62A399.8 399.8 0 1 1 394.10 7.72" fill="none" stroke="#d6d6d6" stroke-width="1" shape-rendering="crispEdges"/>
<circle cx="407.3" cy="407.3" r="519.9" fill="none" stroke="#d6d6d6" stroke-width="1" shape-rendering="crispEdges"/>
<path d="M413.10 368.13A39.6 39.6 0 1 1 398.10 368.78" fill="none" stroke="#ff0000" stroke-width="1" shape-rendering="crispEdges"/>
<text x="395.70000000000005" y="11.2" font-size="11" fill="#ffffa0" textLength="19.8" lengthAdjust="spacingAndGlyphs" font-family="'Liberation Mono', monospace">313</text>
<text x="395.70000000000005" y="131.2" font-size="11" fill="#ffffa0" textLength="19.8" lengthAdjust="spacingAndGlyphs" font-family="'Liberation Mono', monospace">219</text>
<text x="395.70000000000005" y="251.3" font-size="11" fill="#ffffa0" textLength="19.8" lengthAdjust="spacingAndGlyphs" font-family="'Liberation Mono', monospace">125</text>
<text x="399.0" y="371.4" font-size="11" fill="#ffffa0" textLength="13.2" lengthAdjust="spacingAndGlyphs" font-family="'Liberation Mono', monospace">31</text>
<path d="M85.0 10.5h6" stroke="#e06020" stroke-width="1.1" fill="none"/>
<circle cx="88.0" cy="10.5" r="4.1" fill="none" stroke="#e06020" stroke-width="1.1"/>
<path d="M189.75 9.5h8" stroke="#f0a000" stroke-width="1.6" fill="none"/>
<path d="M222.25 36.75h8M226.25 32.75v8" stroke="#00e0f0" stroke-width="1.2" fill="none"/>
<path d="M133.25 41.25h6" stroke="#f09000" stroke-width="1.1" fill="none"/>
<circle cx="136.25" cy="41.25" r="4.1" fill="none" stroke="#f09000" stroke-width="1.1"/>
<path d="M156.25 53.25h6M159.25 50.25v6" stroke="#f09000" stroke-width="1.1" fill="none"/>
<circle cx="159.25" cy="53.25" r="4.1" fill="none" stroke="#f09000" stroke-width="1.1"/>
<path d="M42.25 52.5h8M46.25 48.5v8" stroke="#f4f000" stroke-width="1.2" fill="none"/>
<path d="M34.0 56.5h8" stroke="#f0c040" stroke-width="1.6" fill="none"/>
<path d="M72.75 54.25h6M75.75 51.25v6" stroke="#f4f000" stroke-width="1.1" fill="none"/>
<circle cx="75.75" cy="54.25" r="4.1" fill="none" stroke="#f4f000" stroke-width="1.1"/>
<path d="M77.5 56.5h6M80.5 53.5v6" stroke="#f0c000" stroke-width="1.1" fill="none"/>
<circle cx="80.5" cy="56.5" r="4.1" fill="none" stroke="#f0c000" stroke-width="1.1"/>
<path d="M92.25 61.25h8" stroke="#f09020" stroke-width="1.6" fill="none"/>
<path d="M113.5 69.25h8M117.5 65.25v8" stroke="#f08000" stroke-width="1.2" fill="none"/>
<path d="M155.25 86.25h8M159.25 82.25v8" stroke="#e06000" stroke-width="1.2" fill="none"/>
<path d="M140.25 91.25h8M144.25 87.25v8" stroke="#f0c000" stroke-width="1.2" fill="none"/>
<path d="M49.25 87.25h8" stroke="#f0b000" stroke-width="1.6" fill="none"/>
<path d="M225.25 66.25h8" stroke="#f4e000" stroke-width="1.6" fill="none"/>
<path d="M225.25 103.0h8" stroke="#f0b000" stroke-width="1.6" fill="none"/>
<path d="M227.25 106.25h8" stroke="#e87000" stroke-width="1.6" fill="none"/>
<path d="M207.25 137.25h8" stroke="#e87000" stroke-width="1.6" fill="none"/>
<path d="M118.5 130.25h8M122.5 126.25v8" stroke="#f09000" stroke-width="1.2" fill="none"/>
<path d="M164.25 152.25h8" stroke="#f4e000" stroke-width="1.6" fill="none"/>
<path d="M141.25 178.25h8M145.25 174.25v8" stroke="#f09000" stroke-width="1.2" fill="none"/>
<path d="M187.25 192.25h8" stroke="#f0b000" stroke-width="1.6" fill="none"/>
<path d="M704.25 69.25h8" stroke="#f0b000" stroke-width="1.6" fill="none"/>
<path d="M732.25 89.25h8" stroke="#f0a000" stroke-width="1.6" fill="none"/>
<path d="M777.25 140.5h8" stroke="#f4e000" stroke-width="1.6" fill="none"/>
<path d="M793.5 148.75h8M797.5 144.75v8" stroke="#f09000" stroke-width="1.2" fill="none"/>
<path d="M762.25 175.5h6M765.25 172.5v6" stroke="#f4f000" stroke-width="1.1" fill="none"/>
<circle cx="765.25" cy="175.5" r="4.1" fill="none" stroke="#f4f000" stroke-width="1.1"/>
<path d="M708.5 209.5h8" stroke="#f4e000" stroke-width="1.6" fill="none"/>
<path d="M770.5 209.5h8" stroke="#00d8e8" stroke-width="1.6" fill="none"/>
<path d="M722.25 230.5h8" stroke="#f0b000" stroke-width="1.6" fill="none"/>
<path d="M644.75 261.25h8" stroke="#f4e000" stroke-width="1.6" fill="none"/>
<path d="M692.5 790h6M695.5 787v6" stroke="#f4f000" stroke-width="1.1" fill="none"/>
<circle cx="695.5" cy="790" r="4.1" fill="none" stroke="#f4f000" stroke-width="1.1"/>
<rect x="8.5" y="758.5" width="244" height="45" fill="#000" stroke="#4a4a4a" stroke-width="1"/>
<rect x="9.5" y="759.5" width="242" height="43" fill="none" stroke="#b4b4b4" stroke-width="1"/>
<text x="13.25" y="771" font-size="10.6" fill="#e8e8e8" textLength="35.5" lengthAdjust="spacingAndGlyphs">Symbols</text>
<text x="53" y="771" font-size="10.6" fill="#e8e8e8" textLength="17.5" lengthAdjust="spacingAndGlyphs">-CG</text>
<text x="78" y="771" font-size="10.6" fill="#e8e8e8" textLength="14" lengthAdjust="spacingAndGlyphs">-IC</text>
<text x="99" y="771" font-size="10.6" fill="#e8e8e8" textLength="21.5" lengthAdjust="spacingAndGlyphs">+CG</text>
<text x="124" y="771" font-size="10.6" fill="#e8e8e8" textLength="17.5" lengthAdjust="spacingAndGlyphs">+IC</text>
<text x="153.25" y="771" font-size="10.6" fill="#e8e8e8" textLength="90" lengthAdjust="spacingAndGlyphs">Strike age color codes</text>
<text x="13.25" y="783.8" font-size="10.6" fill="#e8e8e8" textLength="27.5" lengthAdjust="spacingAndGlyphs">Recent</text>
<text x="13.25" y="796.4" font-size="10.6" fill="#e8e8e8" textLength="14" lengthAdjust="spacingAndGlyphs">Old</text>
<path d="M57.5 780.4h6" stroke="#00dcf0" stroke-width="1.1" fill="none"/>
<circle cx="60.5" cy="780.4" r="4.1" fill="none" stroke="#00dcf0" stroke-width="1.1"/>
<path d="M81.5 780.4h8" stroke="#00dcf0" stroke-width="1.6" fill="none"/>
<path d="M107.5 780.4h6M110.5 777.4v6" stroke="#00dcf0" stroke-width="1.1" fill="none"/>
<circle cx="110.5" cy="780.4" r="4.1" fill="none" stroke="#00dcf0" stroke-width="1.1"/>
<path d="M131.5 780.4h8M135.5 776.4v8" stroke="#00dcf0" stroke-width="1.2" fill="none"/>
<path d="M57.5 793.2h6" stroke="#f4f000" stroke-width="1.1" fill="none"/>
<circle cx="60.5" cy="793.2" r="4.1" fill="none" stroke="#f4f000" stroke-width="1.1"/>
<path d="M81.5 793.2h8" stroke="#f4f000" stroke-width="1.6" fill="none"/>
<path d="M107.5 793.2h6M110.5 790.2v6" stroke="#f4f000" stroke-width="1.1" fill="none"/>
<circle cx="110.5" cy="793.2" r="4.1" fill="none" stroke="#f4f000" stroke-width="1.1"/>
<path d="M131.5 793.2h8M135.5 789.2v8" stroke="#f4f000" stroke-width="1.2" fill="none"/>
<text x="153.5" y="783.8" font-size="10.6" fill="#f4d000" textLength="16.5" lengthAdjust="spacingAndGlyphs">15+</text>
<text x="187.8" y="783.8" font-size="10.6" fill="#f0a000" textLength="16.5" lengthAdjust="spacingAndGlyphs">30+</text>
<text x="222.8" y="783.8" font-size="10.6" fill="#f08800" textLength="16.5" lengthAdjust="spacingAndGlyphs">45+</text>
<text x="153.5" y="796.4" font-size="10.6" fill="#e87000" textLength="16.5" lengthAdjust="spacingAndGlyphs">60+</text>
<text x="187.8" y="796.4" font-size="10.6" fill="#e05000" textLength="16.5" lengthAdjust="spacingAndGlyphs">75+</text>
<text x="222.8" y="796.4" font-size="10.6" fill="#e02800" textLength="16.5" lengthAdjust="spacingAndGlyphs">90+</text>
<rect x="685" y="792" width="121" height="14" fill="#000"/>
<text x="689.25" y="802" font-size="11" fill="#f0f0f0" textLength="113" lengthAdjust="spacingAndGlyphs">©2005 Astrogenic Systems</text>
</g>
<rect x="812.5" y="8.5" width="319" height="319" rx="5" ry="5" fill="none" stroke="#d4d4d4" stroke-width="1"/>
<rect x="812.5" y="333.5" width="319" height="114" rx="5" ry="5" fill="none" stroke="#d4d4d4" stroke-width="1"/>
<rect x="812.5" y="453.5" width="319" height="349" rx="5" ry="5" fill="none" stroke="#d4d4d4" stroke-width="1"/>
<rect x="819" y="16" width="58" height="18" fill="#a8a8a8"/>
<rect x="819" y="16" width="57" height="17" fill="#f4f4f4"/>
<rect x="820" y="17" width="56" height="16" fill="#560000"/>
<text x="824" y="30" font-size="12.5" fill="#e6d6d6" font-weight="bold" textLength="48.3" lengthAdjust="spacingAndGlyphs">STRIKE</text>
<rect x="883" y="16" width="58" height="18" fill="#a8a8a8"/>
<rect x="883" y="16" width="57" height="17" fill="#f4f4f4"/>
<rect x="884" y="17" width="56" height="16" fill="#333"/>
<text x="890.4" y="30" font-size="12.5" fill="#c4c4c4" font-weight="bold" textLength="43.3" lengthAdjust="spacingAndGlyphs">NOISE</text>
<rect x="994" y="16" width="128" height="18" fill="#a8a8a8"/>
<rect x="994" y="16" width="127" height="17" fill="#f4f4f4"/>
<rect x="995" y="17" width="126" height="16" fill="#333"/>
<text x="998.5" y="30" font-size="13.5" fill="#fff" font-weight="bold" textLength="53.0" lengthAdjust="spacingAndGlyphs">Bng 61°</text>
<text x="1075.5" y="30" font-size="13.5" fill="#00e000" font-weight="bold" textLength="42.5" lengthAdjust="spacingAndGlyphs">326mi</text>
<rect x="821" y="64" width="82" height="16" fill="#a0a0a0"/>
<rect x="821" y="64" width="81" height="15" fill="#d8d8d8"/>
<rect x="822" y="65" width="80" height="14" fill="#626262"/>
<text x="829.1" y="75.6" font-size="11.6" fill="#f0f0f0" textLength="65.5" lengthAdjust="spacingAndGlyphs">Strikes/min</text>
<rect x="931" y="64" width="82" height="16" fill="#a0a0a0"/>
<rect x="931" y="64" width="81" height="15" fill="#d8d8d8"/>
<rect x="932" y="65" width="80" height="14" fill="#626262"/>
<text x="943.5" y="75.6" font-size="11.6" fill="#f0f0f0" textLength="57.0" lengthAdjust="spacingAndGlyphs">Close/min</text>
<rect x="1041" y="64" width="82" height="16" fill="#a0a0a0"/>
<rect x="1041" y="64" width="81" height="15" fill="#d8d8d8"/>
<rect x="1042" y="65" width="80" height="14" fill="#626262"/>
<text x="1050.25" y="75.6" font-size="11.6" fill="#f0f0f0" textLength="62.5" lengthAdjust="spacingAndGlyphs">Noises/min</text>
<text x="884.5" y="111" font-size="27" fill="#fff" font-weight="bold" textLength="17.0" lengthAdjust="spacingAndGlyphs">3</text>
<text x="994" y="111" font-size="27" fill="#fff" font-weight="bold" textLength="18" lengthAdjust="spacingAndGlyphs">0</text>
<text x="1104" y="111" font-size="27" fill="#bcbcbc" font-weight="bold" textLength="18" lengthAdjust="spacingAndGlyphs">0</text>
<text x="826" y="143" font-size="13.4" fill="#fff" textLength="77" lengthAdjust="spacingAndGlyphs">Total Strikes</text>
<text x="944.5" y="143" font-size="13.4" fill="#fff" textLength="68.0" lengthAdjust="spacingAndGlyphs">Total Close</text>
<text x="1047.75" y="143" font-size="13.4" fill="#c0c0c0" textLength="74.75" lengthAdjust="spacingAndGlyphs">Total Noises</text>
<text x="872.75" y="160.75" font-size="12.2" fill="#fff" textLength="29.5" lengthAdjust="spacingAndGlyphs">1644</text>
<text x="1006" y="160.75" font-size="12.2" fill="#fff" textLength="6.25" lengthAdjust="spacingAndGlyphs">0</text>
<text x="1100.5" y="160.75" font-size="12.2" fill="#fff" textLength="22.25" lengthAdjust="spacingAndGlyphs">124</text>
<text x="821.5" y="215" font-size="13.2" fill="#b4b4b4" textLength="164.0" lengthAdjust="spacingAndGlyphs">Lightning type distribution</text>
<rect x="821" y="217" width="302" height="1" fill="#8c8c8c"/>
<text x="821" y="237" font-size="12.6" fill="#fff" font-weight="bold" textLength="84.5" lengthAdjust="spacingAndGlyphs">Cloud-ground</text>
<path d="M913.5 232.5h8M917.5 228.5v8" stroke="#d8d8d8" stroke-width="1" fill="none" shape-rendering="crispEdges"/>
<rect x="925.5" y="227.5" width="50" height="10" rx="2.5" ry="2.5" fill="#000" stroke="#a8a8a8" stroke-width="1"/>
<rect x="926" y="228" width="15" height="9" rx="1" fill="#ff0000"/>
<text x="979.5" y="237" font-size="12.6" fill="#fff" font-weight="bold" textLength="29.0" lengthAdjust="spacingAndGlyphs">31%</text>
<rect x="1015.5" y="231.5" width="6" height="2" fill="#e0e0e0"/>
<rect x="1028.5" y="227.5" width="50" height="10" rx="2.5" ry="2.5" fill="#000" stroke="#a8a8a8" stroke-width="1"/>
<rect x="1029" y="228" width="5" height="9" rx="1" fill="#99ccff"/>
<text x="1082.5" y="237" font-size="12.6" fill="#fff" font-weight="bold" textLength="29.0" lengthAdjust="spacingAndGlyphs">11%</text>
<text x="821" y="261" font-size="12.6" fill="#c8c8c8" font-weight="bold" textLength="38" lengthAdjust="spacingAndGlyphs">Count</text>
<text x="925.5" y="261" font-size="12.6" fill="#fff" font-weight="bold" textLength="23.5" lengthAdjust="spacingAndGlyphs">514</text>
<text x="1028.5" y="261" font-size="12.6" fill="#fff" font-weight="bold" textLength="23.0" lengthAdjust="spacingAndGlyphs">179</text>
<text x="821" y="291" font-size="12.6" fill="#fff" font-weight="bold" textLength="63.5" lengthAdjust="spacingAndGlyphs">Intracloud</text>
<path d="M913.5 286.5h8M917.5 282.5v8" stroke="#d8d8d8" stroke-width="1" fill="none" shape-rendering="crispEdges"/>
<rect x="925.5" y="281.5" width="50" height="10" rx="2.5" ry="2.5" fill="#000" stroke="#a8a8a8" stroke-width="1"/>
<rect x="926" y="282" width="6" height="9" rx="1" fill="#ee66aa"/>
<text x="979.5" y="291" font-size="12.6" fill="#fff" font-weight="bold" textLength="29.0" lengthAdjust="spacingAndGlyphs">13%</text>
<rect x="1015.5" y="285.5" width="6" height="2" fill="#e0e0e0"/>
<rect x="1028.5" y="281.5" width="50" height="10" rx="2.5" ry="2.5" fill="#000" stroke="#a8a8a8" stroke-width="1"/>
<rect x="1029" y="282" width="22" height="9" rx="1" fill="#00ee00"/>
<text x="1082.5" y="291" font-size="12.6" fill="#fff" font-weight="bold" textLength="29.0" lengthAdjust="spacingAndGlyphs">45%</text>
<text x="821" y="314.5" font-size="12.6" fill="#c8c8c8" font-weight="bold" textLength="38" lengthAdjust="spacingAndGlyphs">Count</text>
<text x="925.5" y="314.5" font-size="12.6" fill="#fff" font-weight="bold" textLength="23.5" lengthAdjust="spacingAndGlyphs">214</text>
<text x="1028.5" y="314.5" font-size="12.6" fill="#fff" font-weight="bold" textLength="23.0" lengthAdjust="spacingAndGlyphs">737</text>
<text x="822" y="352.5" font-size="16.2" fill="#00e400" font-weight="bold" textLength="212" lengthAdjust="spacingAndGlyphs">10/23/2025 1:49:16 PM</text>
<rect x="821" y="358" width="302" height="1" fill="#8c8c8c"/>
<text x="821.5" y="387.5" font-size="13.2" fill="#f2f2f2" textLength="48.25" lengthAdjust="spacingAndGlyphs">Squelch</text>
<text x="909.75" y="387.5" font-size="13.2" fill="#f2f2f2" textLength="6.25" lengthAdjust="spacingAndGlyphs">0</text>
<text x="981" y="387.5" font-size="13.2" fill="#f2f2f2" textLength="43.75" lengthAdjust="spacingAndGlyphs">Upload</text>
<text x="1061" y="387.5" font-size="13.2" fill="#bdbdbd" textLength="53.6" lengthAdjust="spacingAndGlyphs">Disabled</text>
<text x="821.5" y="407.5" font-size="13.2" fill="#f2f2f2" textLength="72.0" lengthAdjust="spacingAndGlyphs">Persistence</text>
<text x="909.75" y="407.5" font-size="13.2" fill="#f2f2f2" textLength="40.75" lengthAdjust="spacingAndGlyphs">90 min</text>
<text x="981" y="407.5" font-size="13.2" fill="#f2f2f2" textLength="50.5" lengthAdjust="spacingAndGlyphs">Capture</text>
<text x="1061" y="407.5" font-size="13.2" fill="#00dc00" textLength="36.7" lengthAdjust="spacingAndGlyphs">Active</text>
<text x="821.5" y="427.5" font-size="13.2" fill="#f2f2f2" textLength="39.0" lengthAdjust="spacingAndGlyphs">Range</text>
<text x="909.75" y="427.5" font-size="13.2" fill="#f2f2f2" textLength="40.75" lengthAdjust="spacingAndGlyphs">313 mi</text>
<text x="981" y="427.5" font-size="13.2" fill="#f2f2f2" textLength="52.5" lengthAdjust="spacingAndGlyphs">Receiver</text>
<text x="1061" y="427.5" font-size="13.2" fill="#00dc00" textLength="50.7" lengthAdjust="spacingAndGlyphs">Enabled</text>
<text x="821.5" y="474.5" font-size="13.2" fill="#bdbdbd" textLength="43.25" lengthAdjust="spacingAndGlyphs">Uptime</text>
<text x="909.75" y="474.5" font-size="13.2" fill="#f2f2f2" textLength="43.75" lengthAdjust="spacingAndGlyphs">153:19</text>
<text x="981" y="474.5" font-size="13.2" fill="#bdbdbd" textLength="61.25" lengthAdjust="spacingAndGlyphs">Peak time</text>
<text x="1061" y="474.5" font-size="13.2" fill="#bdbdbd" textLength="24" lengthAdjust="spacingAndGlyphs">Plot</text>
<text x="821.5" y="497.5" font-size="13.2" fill="#bdbdbd" textLength="60.0" lengthAdjust="spacingAndGlyphs">Peak rate</text>
<text x="909.75" y="497.5" font-size="13.2" fill="#f2f2f2" textLength="41.75" lengthAdjust="spacingAndGlyphs">17/min</text>
<text x="981" y="497.5" font-size="13.2" fill="#f2f2f2" textLength="50.5" lengthAdjust="spacingAndGlyphs">3:30 AM</text>
<text x="1061" y="497.5" font-size="13.2" fill="#f2f2f2" textLength="35.8" lengthAdjust="spacingAndGlyphs">Strike</text>
<text x="822" y="527.5" font-size="13.2" fill="#bdbdbd" textLength="76.5" lengthAdjust="spacingAndGlyphs">Trend graph</text>
<text x="908.5" y="527.5" font-size="13.2" fill="#f2f2f2" textLength="41.25" lengthAdjust="spacingAndGlyphs">60 min</text>
<g shape-rendering="crispEdges" fill="#c8c8c8">
<rect x="1088" y="541" width="1" height="237"/>
<rect x="822" y="777" width="267" height="1"/>
<rect x="1085" y="738" width="5" height="1"/>
<rect x="1084" y="698" width="5" height="1"/>
<rect x="1085" y="659" width="5" height="1"/>
<rect x="1084" y="619" width="5" height="1"/>
<rect x="1085" y="580" width="5" height="1"/>
<rect x="1084" y="540" width="5" height="1"/>
<rect x="1088" y="774" width="1" height="5"/>
<rect x="1044" y="774" width="1" height="5"/>
<rect x="999" y="774" width="1" height="5"/>
<rect x="955" y="774" width="1" height="5"/>
<rect x="910" y="774" width="1" height="5"/>
<rect x="866" y="774" width="1" height="5"/>
<rect x="822" y="774" width="1" height="5"/>
</g>
<text x="1092.75" y="545.5" font-size="12.2" fill="#bdbdbd" textLength="12.75" lengthAdjust="spacingAndGlyphs">30</text>
<text x="1092.75" y="624.5" font-size="12.2" fill="#bdbdbd" textLength="12.75" lengthAdjust="spacingAndGlyphs">20</text>
<text x="1092.75" y="704" font-size="12.2" fill="#bdbdbd" textLength="12.75" lengthAdjust="spacingAndGlyphs">10</text>
<text x="819.75" y="793.25" font-size="12.2" fill="#bdbdbd" textLength="13.25" lengthAdjust="spacingAndGlyphs">60</text>
<text x="864" y="793.25" font-size="12.2" fill="#bdbdbd" textLength="13" lengthAdjust="spacingAndGlyphs">50</text>
<text x="908.5" y="793.25" font-size="12.2" fill="#bdbdbd" textLength="13.5" lengthAdjust="spacingAndGlyphs">40</text>
<text x="953.25" y="793.25" font-size="12.2" fill="#bdbdbd" textLength="13.25" lengthAdjust="spacingAndGlyphs">30</text>
<text x="997.25" y="793.25" font-size="12.2" fill="#bdbdbd" textLength="13.5" lengthAdjust="spacingAndGlyphs">20</text>
<text x="1042.75" y="793.25" font-size="12.2" fill="#bdbdbd" textLength="12.5" lengthAdjust="spacingAndGlyphs">10</text>
<text x="1087.25" y="793.25" font-size="12.2" fill="#bdbdbd" textLength="6.25" lengthAdjust="spacingAndGlyphs">0</text>
<text x="1101" y="793.25" font-size="12.2" fill="#bdbdbd" textLength="17" lengthAdjust="spacingAndGlyphs">min</text>
<polyline points="845,777.0 846.5,770.0 846,775.0" fill="none" stroke="#00e000" stroke-width="1.2"/>
<polyline points="847,770.0 848.5,777.0" fill="none" stroke="#88aaff" stroke-width="1.2"/>
<polyline points="852,777.0 853.5,769.0 857,769.0 857.5,777.0" fill="none" stroke="#00e000" stroke-width="1.2"/>
<polyline points="855.5,770.0 856.5,777.0" fill="none" stroke="#ee66cc" stroke-width="1.2"/>
<polyline points="878,775.0 879.5,769.0 882,769.0 882.5,774.0" fill="none" stroke="#00e000" stroke-width="1.2"/>
<polyline points="909,777.0 910.5,770.0 909.5,777.0" fill="none" stroke="#00e000" stroke-width="1.2"/>
<polyline points="908.5,770.0 909.5,774.0" fill="none" stroke="#ee66cc" stroke-width="1.2"/>
<polyline points="913,770.0 914,777.0" fill="none" stroke="#00e000" stroke-width="1.2"/>
<polyline points="915,770.0 915.5,777.0" fill="none" stroke="#ff0000" stroke-width="1.2"/>
<polyline points="924,777.0 925.5,769.0 930,769.0 931,777.0" fill="none" stroke="#00e000" stroke-width="1.2"/>
<polyline points="923.5,777.0 925,770.0" fill="none" stroke="#ff0000" stroke-width="1.2"/>
<polyline points="927.5,770.0 928.5,777.0" fill="none" stroke="#ee66cc" stroke-width="1.2"/>
<polyline points="1036,777.0 1037.5,769.0 1041,769.0 1042,777.0" fill="none" stroke="#00e000" stroke-width="1.2"/>
<polyline points="1036,777.0 1037.5,770.0" fill="none" stroke="#ff0000" stroke-width="1.2"/>
<polyline points="1073.5,769.0 1076.5,761.0 1079.5,761.0 1082.5,777.0" fill="none" stroke="#00e000" stroke-width="1.2"/>
<polyline points="1075,769.0 1075.8,777.0" fill="none" stroke="#00e000" stroke-width="1.2"/>
<polyline points="1076.6,761.0 1077,777.0" fill="none" stroke="#00e000" stroke-width="1.2"/>
<polyline points="1072,777.0 1074,769.0" fill="none" stroke="#ee66cc" stroke-width="1.2"/>
<polyline points="1077.5,769.0 1078.5,777.0" fill="none" stroke="#ee66cc" stroke-width="1.2"/>
<polyline points="1078,777.0 1079.5,769.0 1081,769.0 1082,777.0" fill="none" stroke="#ff0000" stroke-width="1.2"/>
<polyline points="1087,777.0 1088,772" fill="none" stroke="#ee66cc" stroke-width="1.2"/>
<polyline points="822,777.0 839.7,777.0 841.6,769.0 849.7,769.0 850.5,775.0 853,761.0 856.6,761.0 861,777.0 876.6,777.0 878.9,761.0 882.5,761.0 883.5,777.0 893.5,777.0 895.7,769.0 899,769.0 900.4,777.0 904.5,777.0 906.5,769.0 918.5,769.0 920,777.0 922.2,777.0 926.6,753.0 929,753.0 934.7,777.0 944,777.0 945.5,769.0 948.4,769.0 950.4,777.0 953.5,769.0 956.4,761.0 958,769.0 959,769.0 960.6,777.0 993.1,777.0 995.2,769.0 998.7,769.0 1000,777.0 1002.3,769.0 1005.4,769.0 1007.6,777.0 1010.2,761.0 1013.8,761.0 1014.7,777.0 1016,777.0 1018.2,769.0 1021.6,769.0 1022.8,777.0 1034.2,777.0 1037.3,761.0 1040.8,761.0 1043.2,777.0 1048.2,777.0 1049.7,769.0 1052.6,769.0 1054.6,777.0 1060.3,777.0 1062,769.0 1063,769.0 1064.3,761.0 1069.2,777.0 1069.7,777.0 1071,769.0 1072.5,769.0 1073.6,761.0 1076.5,753.0 1078,757 1079.4,753.0 1083.8,777.0 1086,770 1087.8,765" fill="none" stroke="#ffffff" stroke-width="1.15"/>
</svg></body></html>
